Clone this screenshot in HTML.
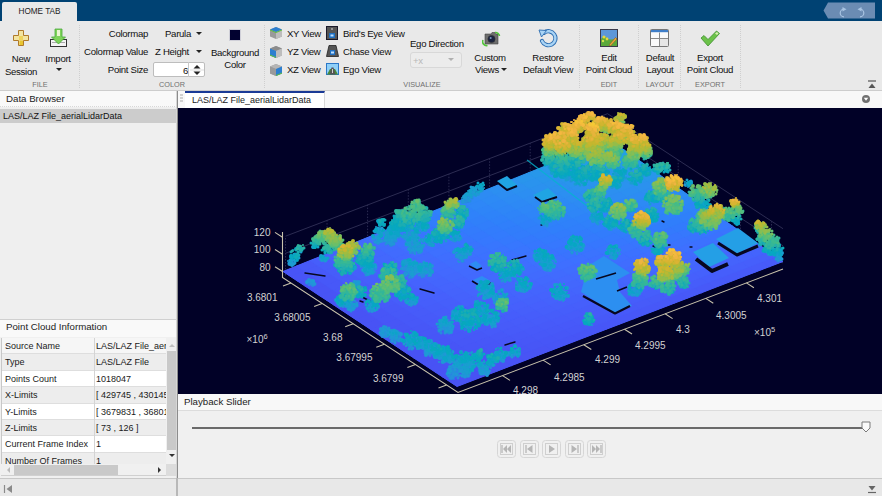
<!DOCTYPE html>
<html><head><meta charset="utf-8">
<style>
*{margin:0;padding:0;box-sizing:border-box}
html,body{width:882px;height:496px;overflow:hidden;background:#f0f0f0;font-family:"Liberation Sans",sans-serif;color:#1a1a1a}
.a{position:absolute}
#top{left:0;top:0;width:882px;height:21px;background:#004273}
#tab{left:2px;top:2px;width:75px;height:20px;background:#e9e9e9;border-radius:2px 2px 0 0;font-size:8.2px;text-align:center;line-height:19px;color:#222}
#ribbon{left:0;top:21px;width:882px;height:70px;background:#e9e9e9;border-bottom:1px solid #cdcdcd}
.t{position:absolute;font-size:9.6px;line-height:11px;color:#101010;white-space:nowrap;letter-spacing:-0.3px}
.c{text-align:center}
.r{text-align:right}
.g{position:absolute;font-size:7.3px;line-height:9px;color:#707070;white-space:nowrap;text-align:center}
.sep{position:absolute;top:25px;width:1px;height:63px;border-left:1px dotted #cfcfcf}
.caret{position:absolute;width:0;height:0;border-left:3px solid transparent;border-right:3px solid transparent;border-top:3.5px solid #222}
#left{left:0;top:91px;width:177px;height:389px;background:#fff}
#plot{left:178px;top:107px;width:704px;height:287px;background:#02021f}
#status{left:0;top:480px;width:882px;height:16px;background:#e6e6e6;border-top:1px solid #cfcfcf}
.p{position:absolute;font-size:9.7px;line-height:12px;color:#222;white-space:nowrap}
.q{position:absolute;font-size:9px;line-height:12px;color:#1a1a1a;white-space:nowrap}
.row{position:absolute;left:0;width:165px;height:16.4px;border-bottom:1px solid #dedede}
.row .k{left:3px;top:2px}.row .v{left:94px;top:2px}
</style></head><body>
<div id="top" class="a"></div>
<div id="tab" class="a">HOME TAB</div>
<div id="ribbon" class="a"></div>
<!-- quick access -->
<svg class="a" style="left:823px;top:2px" width="52" height="17" viewBox="0 0 52 17">
 <path d="M5 0.5H52V16.5H5L0.5 8.5Z" fill="#6b8cb3"/>
 <path d="M21 7.2A3.8 3.8 0 1 0 21 14.8" fill="none" stroke="#a8c4e2" stroke-width="1.2"/>
 <path d="M19.5 5L23.5 7.2L19.5 9.4Z" fill="#a8c4e2"/>
 <path d="M37 7.2A3.8 3.8 0 1 1 37 14.8" fill="none" stroke="#a8c4e2" stroke-width="1.2"/>
 <path d="M38.5 5L34.5 7.2L38.5 9.4Z" fill="#a8c4e2"/>
</svg>


<!-- LEFT PANEL -->
<div class="a" style="left:0;top:91px;width:177px;height:229px;background:#efefef;border-right:1px solid #c4c4c4"></div>
<div class="a" style="left:0;top:91px;width:177px;height:16px;background:#f9f9f9;border-bottom:1px dotted #d8d8d8"></div>
<div class="p" style="left:6px;top:93px">Data Browser</div>
<div class="a" style="left:0;top:109px;width:176px;height:14px;background:#cccccc"></div>
<div class="q" style="left:3px;top:110px;color:#111">LAS/LAZ File_aerialLidarData</div>
<div class="a" style="left:0;top:319px;width:177px;height:1px;background:#d0d0d0"></div>
<div class="a" style="left:0;top:320px;width:177px;height:17px;background:#f9f9f9"></div>
<div class="p" style="left:6px;top:321px">Point Cloud Information</div>
<div class="a" style="left:0;top:337px;width:177px;height:143px;background:#f0f0f0"></div>
<div class="a" style="left:1px;top:338px;width:166px;height:126px;background:#fff;border-left:1px solid #c8c8c8;overflow:hidden">
 <div class="row" style="top:0;background:#f6f6f6"><span class="q k">Source Name</span><span class="q v">LAS/LAZ File_aerialLidarData</span></div>
 <div class="row" style="top:16.4px;background:#ededed"><span class="q k">Type</span><span class="q v">LAS/LAZ File</span></div>
 <div class="row" style="top:32.8px;background:#fff"><span class="q k">Points Count</span><span class="q v">1018047</span></div>
 <div class="row" style="top:49.2px;background:#ededed"><span class="q k">X-Limits</span><span class="q v">[ 429745 , 430145 ]</span></div>
 <div class="row" style="top:65.6px;background:#fff"><span class="q k">Y-Limits</span><span class="q v">[ 3679831 , 3680157 ]</span></div>
 <div class="row" style="top:82px;background:#ededed"><span class="q k">Z-Limits</span><span class="q v">[ 73 , 126 ]</span></div>
 <div class="row" style="top:98.4px;background:#fff"><span class="q k">Current Frame Index</span><span class="q v">1</span></div>
 <div class="row" style="top:114.8px;background:#ededed"><span class="q k">Number Of Frames</span><span class="q v">1</span></div>
 <div class="a" style="left:91.5px;top:0;width:1px;height:126px;background:#d4d4d4"></div>
</div>
<!-- v scrollbar -->
<div class="a" style="left:166px;top:338px;width:11px;height:126px;background:#f0f0f0"></div>
<div class="a" style="left:167px;top:351px;width:9px;height:99px;background:#c9c9c9"></div>
<svg class="a" style="left:168px;top:342px" width="8" height="6"><path d="M1 5L4 2L7 5Z" fill="#c0c0c0"/></svg>
<svg class="a" style="left:168px;top:453px" width="8" height="6"><path d="M1 1L4 4L7 1Z" fill="#333"/></svg>
<!-- h scrollbar -->
<div class="a" style="left:1px;top:464px;width:166px;height:12px;background:#f0f0f0;border-bottom:1px solid #d0d0d0"></div>
<div class="a" style="left:14px;top:465px;width:104px;height:10px;background:#c9c9c9"></div>
<svg class="a" style="left:5px;top:466px" width="6" height="8"><path d="M5 1L2 4L5 7Z" fill="#bbb"/></svg>
<svg class="a" style="left:157px;top:466px" width="6" height="8"><path d="M1 1L4 4L1 7Z" fill="#333"/></svg>
<div class="a" style="left:166px;top:464px;width:11px;height:12px;background:#dcdcdc"></div>
<div class="a" style="left:176px;top:91px;width:1px;height:405px;background:#d6d6d6"></div><div class="a" style="left:177px;top:91px;width:1px;height:405px;background:#8c8c8c"></div>

<!-- PLOT TAB STRIP -->
<div class="a" style="left:178px;top:91px;width:704px;height:17px;background:#f8f8f8"></div>
<svg class="a" style="left:180px;top:94px" width="4" height="9"><path d="M0 1H3M0 4H3M0 7H3" stroke="#aaa" stroke-width="1"/></svg>
<div class="a" style="left:185px;top:91px;width:140px;height:17px;background:#fff;border-top:2px solid #1a3a96;border-right:1px solid #d8d8d8"></div>
<div class="q" style="left:192px;top:94px;color:#1a1a1a">LAS/LAZ File_aerialLidarData</div>
<svg class="a" style="left:861px;top:94px" width="10" height="10"><circle cx="5" cy="5" r="4" fill="#707070"/><path d="M2.8 3.8H7.2L5 6.8Z" fill="#fff"/></svg>

<!-- PLOT -->
<div id="plot" class="a" style="left:178px;top:108px;width:704px;height:286px;background:#010127;overflow:hidden">
<svg width="704" height="286" viewBox="178 108 704 286" style="position:absolute;left:0;top:0;font-family:'Liberation Sans',sans-serif">
<path d="M285.5 270.5L607.5 148.0" stroke="#2c2c52" stroke-width="1"/>
<path d="M607.5 148.0L783.0 263.0" stroke="#2c2c52" stroke-width="1"/>
<path d="M285.5 253.3L607.5 130.8" stroke="#2c2c52" stroke-width="1"/>
<path d="M607.5 130.8L783.0 245.8" stroke="#2c2c52" stroke-width="1"/>
<path d="M285.5 236.2L607.5 113.7" stroke="#2c2c52" stroke-width="1"/>
<path d="M607.5 113.7L783.0 228.7" stroke="#2c2c52" stroke-width="1"/>
<path d="M327.0 260.6V220.2" stroke="#2c2c52" stroke-width="1" stroke-dasharray="1.5 1.5"/>
<path d="M367.6 245.1V204.8" stroke="#2c2c52" stroke-width="1" stroke-dasharray="1.5 1.5"/>
<path d="M408.3 229.7V189.3" stroke="#2c2c52" stroke-width="1" stroke-dasharray="1.5 1.5"/>
<path d="M448.9 214.2V173.9" stroke="#2c2c52" stroke-width="1" stroke-dasharray="1.5 1.5"/>
<path d="M489.6 198.8V158.5" stroke="#2c2c52" stroke-width="1" stroke-dasharray="1.5 1.5"/>
<path d="M530.2 183.4V143.0" stroke="#2c2c52" stroke-width="1" stroke-dasharray="1.5 1.5"/>
<path d="M570.9 167.9V127.6" stroke="#2c2c52" stroke-width="1" stroke-dasharray="1.5 1.5"/>
<path d="M616.0 159.6V119.2" stroke="#2c2c52" stroke-width="1" stroke-dasharray="1.5 1.5"/>
<path d="M647.1 179.9V139.6" stroke="#2c2c52" stroke-width="1" stroke-dasharray="1.5 1.5"/>
<path d="M678.2 200.3V160.0" stroke="#2c2c52" stroke-width="1" stroke-dasharray="1.5 1.5"/>
<path d="M709.3 220.7V180.4" stroke="#2c2c52" stroke-width="1" stroke-dasharray="1.5 1.5"/>
<path d="M740.4 241.1V200.7" stroke="#2c2c52" stroke-width="1" stroke-dasharray="1.5 1.5"/>
<path d="M771.5 261.5V221.1" stroke="#2c2c52" stroke-width="1" stroke-dasharray="1.5 1.5"/>
<path d="M285.5 275.5V237.2" stroke="#2c2c52" stroke-width="1" stroke-dasharray="1.5 1.5"/>
<polygon points="283.0,271.5 457.0,386.5 783.0,261.5 610.0,140.0" fill="#4367fd" />
<g><polygon points="457.0,386.5 449.8,381.7 463.3,376.5 470.6,381.3" fill="#4852f4" stroke="#4852f4" stroke-width="1"/><polygon points="470.6,381.3 463.3,376.5 476.9,371.3 484.2,376.1" fill="#4852f4" stroke="#4852f4" stroke-width="1"/><polygon points="484.2,376.1 476.9,371.3 490.5,366.0 497.8,370.9" fill="#4852f4" stroke="#4852f4" stroke-width="1"/><polygon points="497.8,370.9 490.5,366.0 504.1,360.8 511.3,365.7" fill="#4853f5" stroke="#4853f5" stroke-width="1"/><polygon points="511.3,365.7 504.1,360.8 517.7,355.6 524.9,360.5" fill="#4853f5" stroke="#4853f5" stroke-width="1"/><polygon points="524.9,360.5 517.7,355.6 531.3,350.4 538.5,355.2" fill="#4854f5" stroke="#4854f5" stroke-width="1"/><polygon points="538.5,355.2 531.3,350.4 544.8,345.2 552.1,350.0" fill="#4854f5" stroke="#4854f5" stroke-width="1"/><polygon points="552.1,350.0 544.8,345.2 558.4,340.0 565.7,344.8" fill="#4755f6" stroke="#4755f6" stroke-width="1"/><polygon points="565.7,344.8 558.4,340.0 572.0,334.7 579.2,339.6" fill="#4755f6" stroke="#4755f6" stroke-width="1"/><polygon points="579.2,339.6 572.0,334.7 585.6,329.5 592.8,334.4" fill="#4755f6" stroke="#4755f6" stroke-width="1"/><polygon points="592.8,334.4 585.6,329.5 599.2,324.3 606.4,329.2" fill="#4756f7" stroke="#4756f7" stroke-width="1"/><polygon points="606.4,329.2 599.2,324.3 612.8,319.1 620.0,324.0" fill="#4756f7" stroke="#4756f7" stroke-width="1"/><polygon points="620.0,324.0 612.8,319.1 626.4,313.9 633.6,318.8" fill="#4757f7" stroke="#4757f7" stroke-width="1"/><polygon points="633.6,318.8 626.4,313.9 639.9,308.6 647.2,313.6" fill="#4757f7" stroke="#4757f7" stroke-width="1"/><polygon points="647.2,313.6 639.9,308.6 653.5,303.4 660.8,308.4" fill="#4758f8" stroke="#4758f8" stroke-width="1"/><polygon points="660.8,308.4 653.5,303.4 667.1,298.2 674.3,303.2" fill="#4758f8" stroke="#4758f8" stroke-width="1"/><polygon points="674.3,303.2 667.1,298.2 680.7,293.0 687.9,298.0" fill="#4758f8" stroke="#4758f8" stroke-width="1"/><polygon points="687.9,298.0 680.7,293.0 694.3,287.8 701.5,292.8" fill="#4759f8" stroke="#4759f8" stroke-width="1"/><polygon points="701.5,292.8 694.3,287.8 707.9,282.5 715.1,287.5" fill="#4759f8" stroke="#4759f8" stroke-width="1"/><polygon points="715.1,287.5 707.9,282.5 721.5,277.3 728.7,282.3" fill="#475af9" stroke="#475af9" stroke-width="1"/><polygon points="728.7,282.3 721.5,277.3 735.0,272.1 742.2,277.1" fill="#475af9" stroke="#475af9" stroke-width="1"/><polygon points="742.2,277.1 735.0,272.1 748.6,266.9 755.8,271.9" fill="#475af9" stroke="#475af9" stroke-width="1"/><polygon points="755.8,271.9 748.6,266.9 762.2,261.7 769.4,266.7" fill="#475bf9" stroke="#475bf9" stroke-width="1"/><polygon points="769.4,266.7 762.2,261.7 775.8,256.4 783.0,261.5" fill="#475bf9" stroke="#475bf9" stroke-width="1"/><polygon points="449.8,381.7 442.5,376.9 456.1,371.7 463.3,376.5" fill="#4852f4" stroke="#4852f4" stroke-width="1"/><polygon points="463.3,376.5 456.1,371.7 469.7,366.5 476.9,371.3" fill="#4852f4" stroke="#4852f4" stroke-width="1"/><polygon points="476.9,371.3 469.7,366.5 483.3,361.2 490.5,366.0" fill="#4853f5" stroke="#4853f5" stroke-width="1"/><polygon points="490.5,366.0 483.3,361.2 496.8,356.0 504.1,360.8" fill="#4854f5" stroke="#4854f5" stroke-width="1"/><polygon points="504.1,360.8 496.8,356.0 510.4,350.8 517.7,355.6" fill="#4854f6" stroke="#4854f6" stroke-width="1"/><polygon points="517.7,355.6 510.4,350.8 524.0,345.5 531.3,350.4" fill="#4755f6" stroke="#4755f6" stroke-width="1"/><polygon points="531.3,350.4 524.0,345.5 537.6,340.3 544.8,345.2" fill="#4756f6" stroke="#4756f6" stroke-width="1"/><polygon points="544.8,345.2 537.6,340.3 551.2,335.1 558.4,340.0" fill="#4756f7" stroke="#4756f7" stroke-width="1"/><polygon points="558.4,340.0 551.2,335.1 564.8,329.8 572.0,334.7" fill="#4757f7" stroke="#4757f7" stroke-width="1"/><polygon points="572.0,334.7 564.8,329.8 578.4,324.6 585.6,329.5" fill="#4758f8" stroke="#4758f8" stroke-width="1"/><polygon points="585.6,329.5 578.4,324.6 592.0,319.4 599.2,324.3" fill="#4758f8" stroke="#4758f8" stroke-width="1"/><polygon points="599.2,324.3 592.0,319.4 605.5,314.1 612.8,319.1" fill="#4759f8" stroke="#4759f8" stroke-width="1"/><polygon points="612.8,319.1 605.5,314.1 619.1,308.9 626.4,313.9" fill="#4759f9" stroke="#4759f9" stroke-width="1"/><polygon points="626.4,313.9 619.1,308.9 632.7,303.7 639.9,308.6" fill="#475af9" stroke="#475af9" stroke-width="1"/><polygon points="639.9,308.6 632.7,303.7 646.3,298.5 653.5,303.4" fill="#475bf9" stroke="#475bf9" stroke-width="1"/><polygon points="653.5,303.4 646.3,298.5 659.9,293.2 667.1,298.2" fill="#475bf9" stroke="#475bf9" stroke-width="1"/><polygon points="667.1,298.2 659.9,293.2 673.5,288.0 680.7,293.0" fill="#475cfa" stroke="#475cfa" stroke-width="1"/><polygon points="680.7,293.0 673.5,288.0 687.1,282.8 694.3,287.8" fill="#475cfa" stroke="#475cfa" stroke-width="1"/><polygon points="694.3,287.8 687.1,282.8 700.6,277.5 707.9,282.5" fill="#465dfa" stroke="#465dfa" stroke-width="1"/><polygon points="707.9,282.5 700.6,277.5 714.2,272.3 721.5,277.3" fill="#465dfb" stroke="#465dfb" stroke-width="1"/><polygon points="721.5,277.3 714.2,272.3 727.8,267.1 735.0,272.1" fill="#465efb" stroke="#465efb" stroke-width="1"/><polygon points="735.0,272.1 727.8,267.1 741.4,261.8 748.6,266.9" fill="#465ffb" stroke="#465ffb" stroke-width="1"/><polygon points="748.6,266.9 741.4,261.8 755.0,256.6 762.2,261.7" fill="#465ffb" stroke="#465ffb" stroke-width="1"/><polygon points="762.2,261.7 755.0,256.6 768.6,251.4 775.8,256.4" fill="#4660fb" stroke="#4660fb" stroke-width="1"/><polygon points="442.5,376.9 435.2,372.1 448.8,366.9 456.1,371.7" fill="#4852f4" stroke="#4852f4" stroke-width="1"/><polygon points="456.1,371.7 448.8,366.9 462.4,361.6 469.7,366.5" fill="#4853f5" stroke="#4853f5" stroke-width="1"/><polygon points="469.7,366.5 462.4,361.6 476.0,356.4 483.3,361.2" fill="#4854f5" stroke="#4854f5" stroke-width="1"/><polygon points="483.3,361.2 476.0,356.4 489.6,351.2 496.8,356.0" fill="#4755f6" stroke="#4755f6" stroke-width="1"/><polygon points="496.8,356.0 489.6,351.2 503.2,345.9 510.4,350.8" fill="#4755f6" stroke="#4755f6" stroke-width="1"/><polygon points="510.4,350.8 503.2,345.9 516.8,340.7 524.0,345.5" fill="#4756f7" stroke="#4756f7" stroke-width="1"/><polygon points="524.0,345.5 516.8,340.7 530.4,335.4 537.6,340.3" fill="#4757f7" stroke="#4757f7" stroke-width="1"/><polygon points="537.6,340.3 530.4,335.4 544.0,330.2 551.2,335.1" fill="#4758f8" stroke="#4758f8" stroke-width="1"/><polygon points="551.2,335.1 544.0,330.2 557.5,324.9 564.8,329.8" fill="#4759f8" stroke="#4759f8" stroke-width="1"/><polygon points="564.8,329.8 557.5,324.9 571.1,319.7 578.4,324.6" fill="#4759f9" stroke="#4759f9" stroke-width="1"/><polygon points="578.4,324.6 571.1,319.7 584.7,314.5 592.0,319.4" fill="#475af9" stroke="#475af9" stroke-width="1"/><polygon points="592.0,319.4 584.7,314.5 598.3,309.2 605.5,314.1" fill="#475bf9" stroke="#475bf9" stroke-width="1"/><polygon points="605.5,314.1 598.3,309.2 611.9,304.0 619.1,308.9" fill="#475cfa" stroke="#475cfa" stroke-width="1"/><polygon points="619.1,308.9 611.9,304.0 625.5,298.7 632.7,303.7" fill="#475dfa" stroke="#475dfa" stroke-width="1"/><polygon points="632.7,303.7 625.5,298.7 639.1,293.5 646.3,298.5" fill="#465dfb" stroke="#465dfb" stroke-width="1"/><polygon points="646.3,298.5 639.1,293.5 652.7,288.3 659.9,293.2" fill="#465efb" stroke="#465efb" stroke-width="1"/><polygon points="659.9,293.2 652.7,288.3 666.3,283.0 673.5,288.0" fill="#465ffb" stroke="#465ffb" stroke-width="1"/><polygon points="673.5,288.0 666.3,283.0 679.8,277.8 687.1,282.8" fill="#4660fb" stroke="#4660fb" stroke-width="1"/><polygon points="687.1,282.8 679.8,277.8 693.4,272.5 700.6,277.5" fill="#4660fc" stroke="#4660fc" stroke-width="1"/><polygon points="700.6,277.5 693.4,272.5 707.0,267.3 714.2,272.3" fill="#4561fc" stroke="#4561fc" stroke-width="1"/><polygon points="714.2,272.3 707.0,267.3 720.6,262.0 727.8,267.1" fill="#4562fc" stroke="#4562fc" stroke-width="1"/><polygon points="727.8,267.1 720.6,262.0 734.2,256.8 741.4,261.8" fill="#4563fc" stroke="#4563fc" stroke-width="1"/><polygon points="741.4,261.8 734.2,256.8 747.8,251.6 755.0,256.6" fill="#4563fd" stroke="#4563fd" stroke-width="1"/><polygon points="755.0,256.6 747.8,251.6 761.4,246.3 768.6,251.4" fill="#4464fd" stroke="#4464fd" stroke-width="1"/><polygon points="435.2,372.1 428.0,367.3 441.6,362.1 448.8,366.9" fill="#4852f4" stroke="#4852f4" stroke-width="1"/><polygon points="448.8,366.9 441.6,362.1 455.2,356.8 462.4,361.6" fill="#4853f5" stroke="#4853f5" stroke-width="1"/><polygon points="462.4,361.6 455.2,356.8 468.8,351.6 476.0,356.4" fill="#4854f6" stroke="#4854f6" stroke-width="1"/><polygon points="476.0,356.4 468.8,351.6 482.4,346.3 489.6,351.2" fill="#4755f6" stroke="#4755f6" stroke-width="1"/><polygon points="489.6,351.2 482.4,346.3 496.0,341.1 503.2,345.9" fill="#4756f7" stroke="#4756f7" stroke-width="1"/><polygon points="503.2,345.9 496.0,341.1 509.5,335.8 516.8,340.7" fill="#4757f7" stroke="#4757f7" stroke-width="1"/><polygon points="516.8,340.7 509.5,335.8 523.1,330.6 530.4,335.4" fill="#4758f8" stroke="#4758f8" stroke-width="1"/><polygon points="530.4,335.4 523.1,330.6 536.7,325.3 544.0,330.2" fill="#4759f9" stroke="#4759f9" stroke-width="1"/><polygon points="544.0,330.2 536.7,325.3 550.3,320.1 557.5,324.9" fill="#475af9" stroke="#475af9" stroke-width="1"/><polygon points="557.5,324.9 550.3,320.1 563.9,314.8 571.1,319.7" fill="#475bfa" stroke="#475bfa" stroke-width="1"/><polygon points="571.1,319.7 563.9,314.8 577.5,309.5 584.7,314.5" fill="#475cfa" stroke="#475cfa" stroke-width="1"/><polygon points="584.7,314.5 577.5,309.5 591.1,304.3 598.3,309.2" fill="#465dfa" stroke="#465dfa" stroke-width="1"/><polygon points="598.3,309.2 591.1,304.3 604.7,299.0 611.9,304.0" fill="#465efb" stroke="#465efb" stroke-width="1"/><polygon points="611.9,304.0 604.7,299.0 618.3,293.8 625.5,298.7" fill="#465ffb" stroke="#465ffb" stroke-width="1"/><polygon points="625.5,298.7 618.3,293.8 631.9,288.5 639.1,293.5" fill="#4660fb" stroke="#4660fb" stroke-width="1"/><polygon points="639.1,293.5 631.9,288.5 645.4,283.3 652.7,288.3" fill="#4561fc" stroke="#4561fc" stroke-width="1"/><polygon points="652.7,288.3 645.4,283.3 659.0,278.0 666.3,283.0" fill="#4562fc" stroke="#4562fc" stroke-width="1"/><polygon points="666.3,283.0 659.0,278.0 672.6,272.8 679.8,277.8" fill="#4563fc" stroke="#4563fc" stroke-width="1"/><polygon points="679.8,277.8 672.6,272.8 686.2,267.5 693.4,272.5" fill="#4564fd" stroke="#4564fd" stroke-width="1"/><polygon points="693.4,272.5 686.2,267.5 699.8,262.3 707.0,267.3" fill="#4464fd" stroke="#4464fd" stroke-width="1"/><polygon points="707.0,267.3 699.8,262.3 713.4,257.0 720.6,262.0" fill="#4465fd" stroke="#4465fd" stroke-width="1"/><polygon points="720.6,262.0 713.4,257.0 727.0,251.8 734.2,256.8" fill="#4466fd" stroke="#4466fd" stroke-width="1"/><polygon points="734.2,256.8 727.0,251.8 740.6,246.5 747.8,251.6" fill="#4367fd" stroke="#4367fd" stroke-width="1"/><polygon points="747.8,251.6 740.6,246.5 754.2,241.3 761.4,246.3" fill="#4368fe" stroke="#4368fe" stroke-width="1"/><polygon points="428.0,367.3 420.7,362.5 434.3,357.3 441.6,362.1" fill="#4852f4" stroke="#4852f4" stroke-width="1"/><polygon points="441.6,362.1 434.3,357.3 447.9,352.0 455.2,356.8" fill="#4854f5" stroke="#4854f5" stroke-width="1"/><polygon points="455.2,356.8 447.9,352.0 461.5,346.7 468.8,351.6" fill="#4755f6" stroke="#4755f6" stroke-width="1"/><polygon points="468.8,351.6 461.5,346.7 475.1,341.5 482.4,346.3" fill="#4756f7" stroke="#4756f7" stroke-width="1"/><polygon points="482.4,346.3 475.1,341.5 488.7,336.2 496.0,341.1" fill="#4757f7" stroke="#4757f7" stroke-width="1"/><polygon points="496.0,341.1 488.7,336.2 502.3,331.0 509.5,335.8" fill="#4758f8" stroke="#4758f8" stroke-width="1"/><polygon points="509.5,335.8 502.3,331.0 515.9,325.7 523.1,330.6" fill="#475af9" stroke="#475af9" stroke-width="1"/><polygon points="523.1,330.6 515.9,325.7 529.5,320.4 536.7,325.3" fill="#475bf9" stroke="#475bf9" stroke-width="1"/><polygon points="536.7,325.3 529.5,320.4 543.1,315.2 550.3,320.1" fill="#475cfa" stroke="#475cfa" stroke-width="1"/><polygon points="550.3,320.1 543.1,315.2 556.7,309.9 563.9,314.8" fill="#465dfa" stroke="#465dfa" stroke-width="1"/><polygon points="563.9,314.8 556.7,309.9 570.3,304.6 577.5,309.5" fill="#465efb" stroke="#465efb" stroke-width="1"/><polygon points="577.5,309.5 570.3,304.6 583.9,299.4 591.1,304.3" fill="#465ffb" stroke="#465ffb" stroke-width="1"/><polygon points="591.1,304.3 583.9,299.4 597.4,294.1 604.7,299.0" fill="#4660fc" stroke="#4660fc" stroke-width="1"/><polygon points="604.7,299.0 597.4,294.1 611.0,288.8 618.3,293.8" fill="#4561fc" stroke="#4561fc" stroke-width="1"/><polygon points="618.3,293.8 611.0,288.8 624.6,283.6 631.9,288.5" fill="#4562fc" stroke="#4562fc" stroke-width="1"/><polygon points="631.9,288.5 624.6,283.6 638.2,278.3 645.4,283.3" fill="#4563fd" stroke="#4563fd" stroke-width="1"/><polygon points="645.4,283.3 638.2,278.3 651.8,273.0 659.0,278.0" fill="#4465fd" stroke="#4465fd" stroke-width="1"/><polygon points="659.0,278.0 651.8,273.0 665.4,267.8 672.6,272.8" fill="#4466fd" stroke="#4466fd" stroke-width="1"/><polygon points="672.6,272.8 665.4,267.8 679.0,262.5 686.2,267.5" fill="#4367fd" stroke="#4367fd" stroke-width="1"/><polygon points="686.2,267.5 679.0,262.5 692.6,257.2 699.8,262.3" fill="#4368fe" stroke="#4368fe" stroke-width="1"/><polygon points="699.8,262.3 692.6,257.2 706.2,252.0 713.4,257.0" fill="#4269fe" stroke="#4269fe" stroke-width="1"/><polygon points="713.4,257.0 706.2,252.0 719.8,246.7 727.0,251.8" fill="#426afe" stroke="#426afe" stroke-width="1"/><polygon points="727.0,251.8 719.8,246.7 733.4,241.5 740.6,246.5" fill="#416bfe" stroke="#416bfe" stroke-width="1"/><polygon points="740.6,246.5 733.4,241.5 747.0,236.2 754.2,241.3" fill="#406cfe" stroke="#406cfe" stroke-width="1"/><polygon points="420.7,362.5 413.5,357.8 427.1,352.5 434.3,357.3" fill="#4852f4" stroke="#4852f4" stroke-width="1"/><polygon points="434.3,357.3 427.1,352.5 440.7,347.2 447.9,352.0" fill="#4854f5" stroke="#4854f5" stroke-width="1"/><polygon points="447.9,352.0 440.7,347.2 454.3,341.9 461.5,346.7" fill="#4755f6" stroke="#4755f6" stroke-width="1"/><polygon points="461.5,346.7 454.3,341.9 467.9,336.6 475.1,341.5" fill="#4757f7" stroke="#4757f7" stroke-width="1"/><polygon points="475.1,341.5 467.9,336.6 481.5,331.4 488.7,336.2" fill="#4758f8" stroke="#4758f8" stroke-width="1"/><polygon points="488.7,336.2 481.5,331.4 495.1,326.1 502.3,331.0" fill="#475af9" stroke="#475af9" stroke-width="1"/><polygon points="502.3,331.0 495.1,326.1 508.7,320.8 515.9,325.7" fill="#475bf9" stroke="#475bf9" stroke-width="1"/><polygon points="515.9,325.7 508.7,320.8 522.2,315.5 529.5,320.4" fill="#475cfa" stroke="#475cfa" stroke-width="1"/><polygon points="529.5,320.4 522.2,315.5 535.8,310.3 543.1,315.2" fill="#465dfb" stroke="#465dfb" stroke-width="1"/><polygon points="543.1,315.2 535.8,310.3 549.4,305.0 556.7,309.9" fill="#465ffb" stroke="#465ffb" stroke-width="1"/><polygon points="556.7,309.9 549.4,305.0 563.0,299.7 570.3,304.6" fill="#4660fb" stroke="#4660fb" stroke-width="1"/><polygon points="570.3,304.6 563.0,299.7 576.6,294.4 583.9,299.4" fill="#4561fc" stroke="#4561fc" stroke-width="1"/><polygon points="583.9,299.4 576.6,294.4 590.2,289.2 597.4,294.1" fill="#4562fc" stroke="#4562fc" stroke-width="1"/><polygon points="597.4,294.1 590.2,289.2 603.8,283.9 611.0,288.8" fill="#4564fd" stroke="#4564fd" stroke-width="1"/><polygon points="611.0,288.8 603.8,283.9 617.4,278.6 624.6,283.6" fill="#4465fd" stroke="#4465fd" stroke-width="1"/><polygon points="624.6,283.6 617.4,278.6 631.0,273.3 638.2,278.3" fill="#4466fd" stroke="#4466fd" stroke-width="1"/><polygon points="638.2,278.3 631.0,273.3 644.6,268.1 651.8,273.0" fill="#4367fd" stroke="#4367fd" stroke-width="1"/><polygon points="651.8,273.0 644.6,268.1 658.2,262.8 665.4,267.8" fill="#4369fe" stroke="#4369fe" stroke-width="1"/><polygon points="665.4,267.8 658.2,262.8 671.8,257.5 679.0,262.5" fill="#426afe" stroke="#426afe" stroke-width="1"/><polygon points="679.0,262.5 671.8,257.5 685.4,252.2 692.6,257.2" fill="#416bfe" stroke="#416bfe" stroke-width="1"/><polygon points="692.6,257.2 685.4,252.2 699.0,247.0 706.2,252.0" fill="#406cfe" stroke="#406cfe" stroke-width="1"/><polygon points="706.2,252.0 699.0,247.0 712.6,241.7 719.8,246.7" fill="#3f6dfe" stroke="#3f6dfe" stroke-width="1"/><polygon points="719.8,246.7 712.6,241.7 726.2,236.4 733.4,241.5" fill="#3f6fff" stroke="#3f6fff" stroke-width="1"/><polygon points="733.4,241.5 726.2,236.4 739.8,231.1 747.0,236.2" fill="#3d70ff" stroke="#3d70ff" stroke-width="1"/><polygon points="413.5,357.8 406.2,353.0 419.8,347.7 427.1,352.5" fill="#4852f4" stroke="#4852f4" stroke-width="1"/><polygon points="427.1,352.5 419.8,347.7 433.4,342.4 440.7,347.2" fill="#4854f5" stroke="#4854f5" stroke-width="1"/><polygon points="440.7,347.2 433.4,342.4 447.0,337.1 454.3,341.9" fill="#4756f7" stroke="#4756f7" stroke-width="1"/><polygon points="454.3,341.9 447.0,337.1 460.6,331.8 467.9,336.6" fill="#4758f8" stroke="#4758f8" stroke-width="1"/><polygon points="467.9,336.6 460.6,331.8 474.2,326.5 481.5,331.4" fill="#4759f8" stroke="#4759f8" stroke-width="1"/><polygon points="481.5,331.4 474.2,326.5 487.8,321.2 495.1,326.1" fill="#475bf9" stroke="#475bf9" stroke-width="1"/><polygon points="495.1,326.1 487.8,321.2 501.4,315.9 508.7,320.8" fill="#475cfa" stroke="#475cfa" stroke-width="1"/><polygon points="508.7,320.8 501.4,315.9 515.0,310.7 522.2,315.5" fill="#465dfb" stroke="#465dfb" stroke-width="1"/><polygon points="522.2,315.5 515.0,310.7 528.6,305.4 535.8,310.3" fill="#465ffb" stroke="#465ffb" stroke-width="1"/><polygon points="535.8,310.3 528.6,305.4 542.2,300.1 549.4,305.0" fill="#4660fc" stroke="#4660fc" stroke-width="1"/><polygon points="549.4,305.0 542.2,300.1 555.8,294.8 563.0,299.7" fill="#4562fc" stroke="#4562fc" stroke-width="1"/><polygon points="563.0,299.7 555.8,294.8 569.4,289.5 576.6,294.4" fill="#4563fd" stroke="#4563fd" stroke-width="1"/><polygon points="576.6,294.4 569.4,289.5 583.0,284.2 590.2,289.2" fill="#4465fd" stroke="#4465fd" stroke-width="1"/><polygon points="590.2,289.2 583.0,284.2 596.6,278.9 603.8,283.9" fill="#4466fd" stroke="#4466fd" stroke-width="1"/><polygon points="603.8,283.9 596.6,278.9 610.2,273.6 617.4,278.6" fill="#4367fd" stroke="#4367fd" stroke-width="1"/><polygon points="617.4,278.6 610.2,273.6 623.8,268.4 631.0,273.3" fill="#4369fe" stroke="#4369fe" stroke-width="1"/><polygon points="631.0,273.3 623.8,268.4 637.4,263.1 644.6,268.1" fill="#426afe" stroke="#426afe" stroke-width="1"/><polygon points="644.6,268.1 637.4,263.1 651.0,257.8 658.2,262.8" fill="#416bfe" stroke="#416bfe" stroke-width="1"/><polygon points="658.2,262.8 651.0,257.8 664.6,252.5 671.8,257.5" fill="#406dfe" stroke="#406dfe" stroke-width="1"/><polygon points="671.8,257.5 664.6,252.5 678.2,247.2 685.4,252.2" fill="#3f6eff" stroke="#3f6eff" stroke-width="1"/><polygon points="685.4,252.2 678.2,247.2 691.8,241.9 699.0,247.0" fill="#3e70ff" stroke="#3e70ff" stroke-width="1"/><polygon points="699.0,247.0 691.8,241.9 705.4,236.6 712.6,241.7" fill="#3c71ff" stroke="#3c71ff" stroke-width="1"/><polygon points="712.6,241.7 705.4,236.6 718.9,231.3 726.2,236.4" fill="#3b72fe" stroke="#3b72fe" stroke-width="1"/><polygon points="726.2,236.4 718.9,231.3 732.5,226.1 739.8,231.1" fill="#3a74fe" stroke="#3a74fe" stroke-width="1"/><polygon points="406.2,353.0 399.0,348.2 412.6,342.9 419.8,347.7" fill="#4853f4" stroke="#4853f4" stroke-width="1"/><polygon points="419.8,347.7 412.6,342.9 426.2,337.6 433.4,342.4" fill="#4755f6" stroke="#4755f6" stroke-width="1"/><polygon points="433.4,342.4 426.2,337.6 439.8,332.3 447.0,337.1" fill="#4756f7" stroke="#4756f7" stroke-width="1"/><polygon points="447.0,337.1 439.8,332.3 453.4,327.0 460.6,331.8" fill="#4758f8" stroke="#4758f8" stroke-width="1"/><polygon points="460.6,331.8 453.4,327.0 467.0,321.7 474.2,326.5" fill="#475af9" stroke="#475af9" stroke-width="1"/><polygon points="474.2,326.5 467.0,321.7 480.6,316.4 487.8,321.2" fill="#475cfa" stroke="#475cfa" stroke-width="1"/><polygon points="487.8,321.2 480.6,316.4 494.2,311.1 501.4,315.9" fill="#465dfa" stroke="#465dfa" stroke-width="1"/><polygon points="501.4,315.9 494.2,311.1 507.8,305.8 515.0,310.7" fill="#465ffb" stroke="#465ffb" stroke-width="1"/><polygon points="515.0,310.7 507.8,305.8 521.4,300.5 528.6,305.4" fill="#4660fc" stroke="#4660fc" stroke-width="1"/><polygon points="528.6,305.4 521.4,300.5 535.0,295.2 542.2,300.1" fill="#4562fc" stroke="#4562fc" stroke-width="1"/><polygon points="542.2,300.1 535.0,295.2 548.6,289.9 555.8,294.8" fill="#4563fd" stroke="#4563fd" stroke-width="1"/><polygon points="555.8,294.8 548.6,289.9 562.2,284.6 569.4,289.5" fill="#4465fd" stroke="#4465fd" stroke-width="1"/><polygon points="569.4,289.5 562.2,284.6 575.8,279.3 583.0,284.2" fill="#4367fd" stroke="#4367fd" stroke-width="1"/><polygon points="583.0,284.2 575.8,279.3 589.4,274.0 596.6,278.9" fill="#4368fe" stroke="#4368fe" stroke-width="1"/><polygon points="596.6,278.9 589.4,274.0 603.0,268.7 610.2,273.6" fill="#426afe" stroke="#426afe" stroke-width="1"/><polygon points="610.2,273.6 603.0,268.7 616.6,263.4 623.8,268.4" fill="#416bfe" stroke="#416bfe" stroke-width="1"/><polygon points="623.8,268.4 616.6,263.4 630.2,258.1 637.4,263.1" fill="#406dfe" stroke="#406dfe" stroke-width="1"/><polygon points="637.4,263.1 630.2,258.1 643.8,252.8 651.0,257.8" fill="#3f6eff" stroke="#3f6eff" stroke-width="1"/><polygon points="651.0,257.8 643.8,252.8 657.3,247.5 664.6,252.5" fill="#3e70ff" stroke="#3e70ff" stroke-width="1"/><polygon points="664.6,252.5 657.3,247.5 670.9,242.2 678.2,247.2" fill="#3c71ff" stroke="#3c71ff" stroke-width="1"/><polygon points="678.2,247.2 670.9,242.2 684.5,236.9 691.8,241.9" fill="#3b73fe" stroke="#3b73fe" stroke-width="1"/><polygon points="691.8,241.9 684.5,236.9 698.1,231.6 705.4,236.6" fill="#3974fe" stroke="#3974fe" stroke-width="1"/><polygon points="705.4,236.6 698.1,231.6 711.7,226.3 718.9,231.3" fill="#3876fe" stroke="#3876fe" stroke-width="1"/><polygon points="718.9,231.3 711.7,226.3 725.3,221.0 732.5,226.1" fill="#3678fe" stroke="#3678fe" stroke-width="1"/><polygon points="399.0,348.2 391.8,343.4 405.3,338.1 412.6,342.9" fill="#4853f5" stroke="#4853f5" stroke-width="1"/><polygon points="412.6,342.9 405.3,338.1 418.9,332.8 426.2,337.6" fill="#4755f6" stroke="#4755f6" stroke-width="1"/><polygon points="426.2,337.6 418.9,332.8 432.5,327.4 439.8,332.3" fill="#4757f7" stroke="#4757f7" stroke-width="1"/><polygon points="439.8,332.3 432.5,327.4 446.1,322.1 453.4,327.0" fill="#4759f8" stroke="#4759f8" stroke-width="1"/><polygon points="453.4,327.0 446.1,322.1 459.7,316.8 467.0,321.7" fill="#475bf9" stroke="#475bf9" stroke-width="1"/><polygon points="467.0,321.7 459.7,316.8 473.3,311.5 480.6,316.4" fill="#475dfa" stroke="#475dfa" stroke-width="1"/><polygon points="480.6,316.4 473.3,311.5 486.9,306.2 494.2,311.1" fill="#465efb" stroke="#465efb" stroke-width="1"/><polygon points="494.2,311.1 486.9,306.2 500.5,300.9 507.8,305.8" fill="#4660fc" stroke="#4660fc" stroke-width="1"/><polygon points="507.8,305.8 500.5,300.9 514.1,295.6 521.4,300.5" fill="#4562fc" stroke="#4562fc" stroke-width="1"/><polygon points="521.4,300.5 514.1,295.6 527.7,290.3 535.0,295.2" fill="#4564fd" stroke="#4564fd" stroke-width="1"/><polygon points="535.0,295.2 527.7,290.3 541.3,285.0 548.6,289.9" fill="#4465fd" stroke="#4465fd" stroke-width="1"/><polygon points="548.6,289.9 541.3,285.0 554.9,279.7 562.2,284.6" fill="#4367fd" stroke="#4367fd" stroke-width="1"/><polygon points="562.2,284.6 554.9,279.7 568.5,274.3 575.8,279.3" fill="#4369fe" stroke="#4369fe" stroke-width="1"/><polygon points="575.8,279.3 568.5,274.3 582.1,269.0 589.4,274.0" fill="#426afe" stroke="#426afe" stroke-width="1"/><polygon points="589.4,274.0 582.1,269.0 595.7,263.7 603.0,268.7" fill="#406cfe" stroke="#406cfe" stroke-width="1"/><polygon points="603.0,268.7 595.7,263.7 609.3,258.4 616.6,263.4" fill="#3f6efe" stroke="#3f6efe" stroke-width="1"/><polygon points="616.6,263.4 609.3,258.4 622.9,253.1 630.2,258.1" fill="#3e6fff" stroke="#3e6fff" stroke-width="1"/><polygon points="630.2,258.1 622.9,253.1 636.5,247.8 643.8,252.8" fill="#3c71ff" stroke="#3c71ff" stroke-width="1"/><polygon points="643.8,252.8 636.5,247.8 650.1,242.5 657.3,247.5" fill="#3b73fe" stroke="#3b73fe" stroke-width="1"/><polygon points="657.3,247.5 650.1,242.5 663.7,237.2 670.9,242.2" fill="#3975fe" stroke="#3975fe" stroke-width="1"/><polygon points="670.9,242.2 663.7,237.2 677.3,231.9 684.5,236.9" fill="#3776fe" stroke="#3776fe" stroke-width="1"/><polygon points="684.5,236.9 677.3,231.9 690.9,226.6 698.1,231.6" fill="#3678fd" stroke="#3678fd" stroke-width="1"/><polygon points="698.1,231.6 690.9,226.6 704.5,221.2 711.7,226.3" fill="#347afd" stroke="#347afd" stroke-width="1"/><polygon points="711.7,226.3 704.5,221.2 718.1,215.9 725.3,221.0" fill="#327bfc" stroke="#327bfc" stroke-width="1"/><polygon points="391.8,343.4 384.5,338.6 398.1,333.3 405.3,338.1" fill="#4853f5" stroke="#4853f5" stroke-width="1"/><polygon points="405.3,338.1 398.1,333.3 411.7,327.9 418.9,332.8" fill="#4755f6" stroke="#4755f6" stroke-width="1"/><polygon points="418.9,332.8 411.7,327.9 425.3,322.6 432.5,327.4" fill="#4757f7" stroke="#4757f7" stroke-width="1"/><polygon points="432.5,327.4 425.3,322.6 438.9,317.3 446.1,322.1" fill="#475af9" stroke="#475af9" stroke-width="1"/><polygon points="446.1,322.1 438.9,317.3 452.5,312.0 459.7,316.8" fill="#475cfa" stroke="#475cfa" stroke-width="1"/><polygon points="459.7,316.8 452.5,312.0 466.1,306.7 473.3,311.5" fill="#465dfb" stroke="#465dfb" stroke-width="1"/><polygon points="473.3,311.5 466.1,306.7 479.7,301.3 486.9,306.2" fill="#465ffb" stroke="#465ffb" stroke-width="1"/><polygon points="486.9,306.2 479.7,301.3 493.3,296.0 500.5,300.9" fill="#4561fc" stroke="#4561fc" stroke-width="1"/><polygon points="500.5,300.9 493.3,296.0 506.9,290.7 514.1,295.6" fill="#4563fd" stroke="#4563fd" stroke-width="1"/><polygon points="514.1,295.6 506.9,290.7 520.5,285.4 527.7,290.3" fill="#4465fd" stroke="#4465fd" stroke-width="1"/><polygon points="527.7,290.3 520.5,285.4 534.1,280.1 541.3,285.0" fill="#4367fd" stroke="#4367fd" stroke-width="1"/><polygon points="541.3,285.0 534.1,280.1 547.7,274.7 554.9,279.7" fill="#4269fe" stroke="#4269fe" stroke-width="1"/><polygon points="554.9,279.7 547.7,274.7 561.3,269.4 568.5,274.3" fill="#416bfe" stroke="#416bfe" stroke-width="1"/><polygon points="568.5,274.3 561.3,269.4 574.9,264.1 582.1,269.0" fill="#406dfe" stroke="#406dfe" stroke-width="1"/><polygon points="582.1,269.0 574.9,264.1 588.5,258.8 595.7,263.7" fill="#3f6eff" stroke="#3f6eff" stroke-width="1"/><polygon points="595.7,263.7 588.5,258.8 602.1,253.4 609.3,258.4" fill="#3d70ff" stroke="#3d70ff" stroke-width="1"/><polygon points="609.3,258.4 602.1,253.4 615.7,248.1 622.9,253.1" fill="#3b72ff" stroke="#3b72ff" stroke-width="1"/><polygon points="622.9,253.1 615.7,248.1 629.3,242.8 636.5,247.8" fill="#3a74fe" stroke="#3a74fe" stroke-width="1"/><polygon points="636.5,247.8 629.3,242.8 642.9,237.5 650.1,242.5" fill="#3876fe" stroke="#3876fe" stroke-width="1"/><polygon points="650.1,242.5 642.9,237.5 656.5,232.2 663.7,237.2" fill="#3678fe" stroke="#3678fe" stroke-width="1"/><polygon points="663.7,237.2 656.5,232.2 670.1,226.8 677.3,231.9" fill="#3479fd" stroke="#3479fd" stroke-width="1"/><polygon points="677.3,231.9 670.1,226.8 683.7,221.5 690.9,226.6" fill="#327bfc" stroke="#327bfc" stroke-width="1"/><polygon points="690.9,226.6 683.7,221.5 697.3,216.2 704.5,221.2" fill="#317dfc" stroke="#317dfc" stroke-width="1"/><polygon points="704.5,221.2 697.3,216.2 710.9,210.9 718.1,215.9" fill="#307ffb" stroke="#307ffb" stroke-width="1"/><polygon points="384.5,338.6 377.2,333.8 390.9,328.5 398.1,333.3" fill="#4853f5" stroke="#4853f5" stroke-width="1"/><polygon points="398.1,333.3 390.9,328.5 404.5,323.1 411.7,327.9" fill="#4756f6" stroke="#4756f6" stroke-width="1"/><polygon points="411.7,327.9 404.5,323.1 418.1,317.8 425.3,322.6" fill="#4758f8" stroke="#4758f8" stroke-width="1"/><polygon points="425.3,322.6 418.1,317.8 431.7,312.5 438.9,317.3" fill="#475af9" stroke="#475af9" stroke-width="1"/><polygon points="438.9,317.3 431.7,312.5 445.3,307.1 452.5,312.0" fill="#475cfa" stroke="#475cfa" stroke-width="1"/><polygon points="452.5,312.0 445.3,307.1 458.9,301.8 466.1,306.7" fill="#465efb" stroke="#465efb" stroke-width="1"/><polygon points="466.1,306.7 458.9,301.8 472.5,296.5 479.7,301.3" fill="#4661fc" stroke="#4661fc" stroke-width="1"/><polygon points="479.7,301.3 472.5,296.5 486.1,291.1 493.3,296.0" fill="#4563fc" stroke="#4563fc" stroke-width="1"/><polygon points="493.3,296.0 486.1,291.1 499.7,285.8 506.9,290.7" fill="#4465fd" stroke="#4465fd" stroke-width="1"/><polygon points="506.9,290.7 499.7,285.8 513.3,280.5 520.5,285.4" fill="#4367fd" stroke="#4367fd" stroke-width="1"/><polygon points="520.5,285.4 513.3,280.5 526.9,275.1 534.1,280.1" fill="#4369fe" stroke="#4369fe" stroke-width="1"/><polygon points="534.1,280.1 526.9,275.1 540.5,269.8 547.7,274.7" fill="#416bfe" stroke="#416bfe" stroke-width="1"/><polygon points="547.7,274.7 540.5,269.8 554.1,264.5 561.3,269.4" fill="#406dfe" stroke="#406dfe" stroke-width="1"/><polygon points="561.3,269.4 554.1,264.5 567.7,259.1 574.9,264.1" fill="#3f6fff" stroke="#3f6fff" stroke-width="1"/><polygon points="574.9,264.1 567.7,259.1 581.3,253.8 588.5,258.8" fill="#3d71ff" stroke="#3d71ff" stroke-width="1"/><polygon points="588.5,258.8 581.3,253.8 594.9,248.5 602.1,253.4" fill="#3b73fe" stroke="#3b73fe" stroke-width="1"/><polygon points="602.1,253.4 594.9,248.5 608.5,243.1 615.7,248.1" fill="#3975fe" stroke="#3975fe" stroke-width="1"/><polygon points="615.7,248.1 608.5,243.1 622.1,237.8 629.3,242.8" fill="#3777fe" stroke="#3777fe" stroke-width="1"/><polygon points="629.3,242.8 622.1,237.8 635.7,232.5 642.9,237.5" fill="#3579fd" stroke="#3579fd" stroke-width="1"/><polygon points="642.9,237.5 635.7,232.5 649.3,227.1 656.5,232.2" fill="#337bfd" stroke="#337bfd" stroke-width="1"/><polygon points="656.5,232.2 649.3,227.1 662.9,221.8 670.1,226.8" fill="#317dfc" stroke="#317dfc" stroke-width="1"/><polygon points="670.1,226.8 662.9,221.8 676.5,216.5 683.7,221.5" fill="#307efb" stroke="#307efb" stroke-width="1"/><polygon points="683.7,221.5 676.5,216.5 690.1,211.1 697.3,216.2" fill="#2f80fa" stroke="#2f80fa" stroke-width="1"/><polygon points="697.3,216.2 690.1,211.1 703.7,205.8 710.9,210.9" fill="#2f82fa" stroke="#2f82fa" stroke-width="1"/><polygon points="377.2,333.8 370.0,329.0 383.6,323.7 390.9,328.5" fill="#4853f5" stroke="#4853f5" stroke-width="1"/><polygon points="390.9,328.5 383.6,323.7 397.2,318.3 404.5,323.1" fill="#4756f6" stroke="#4756f6" stroke-width="1"/><polygon points="404.5,323.1 397.2,318.3 410.8,313.0 418.1,317.8" fill="#4758f8" stroke="#4758f8" stroke-width="1"/><polygon points="418.1,317.8 410.8,313.0 424.4,307.6 431.7,312.5" fill="#475bf9" stroke="#475bf9" stroke-width="1"/><polygon points="431.7,312.5 424.4,307.6 438.0,302.3 445.3,307.1" fill="#465dfa" stroke="#465dfa" stroke-width="1"/><polygon points="445.3,307.1 438.0,302.3 451.6,296.9 458.9,301.8" fill="#465ffb" stroke="#465ffb" stroke-width="1"/><polygon points="458.9,301.8 451.6,296.9 465.2,291.6 472.5,296.5" fill="#4562fc" stroke="#4562fc" stroke-width="1"/><polygon points="472.5,296.5 465.2,291.6 478.8,286.2 486.1,291.1" fill="#4564fd" stroke="#4564fd" stroke-width="1"/><polygon points="486.1,291.1 478.8,286.2 492.4,280.9 499.7,285.8" fill="#4466fd" stroke="#4466fd" stroke-width="1"/><polygon points="499.7,285.8 492.4,280.9 506.0,275.6 513.3,280.5" fill="#4368fe" stroke="#4368fe" stroke-width="1"/><polygon points="513.3,280.5 506.0,275.6 519.6,270.2 526.9,275.1" fill="#416afe" stroke="#416afe" stroke-width="1"/><polygon points="526.9,275.1 519.6,270.2 533.2,264.9 540.5,269.8" fill="#406dfe" stroke="#406dfe" stroke-width="1"/><polygon points="540.5,269.8 533.2,264.9 546.9,259.5 554.1,264.5" fill="#3f6fff" stroke="#3f6fff" stroke-width="1"/><polygon points="554.1,264.5 546.9,259.5 560.5,254.2 567.7,259.1" fill="#3d71ff" stroke="#3d71ff" stroke-width="1"/><polygon points="567.7,259.1 560.5,254.2 574.1,248.8 581.3,253.8" fill="#3a73fe" stroke="#3a73fe" stroke-width="1"/><polygon points="581.3,253.8 574.1,248.8 587.7,243.5 594.9,248.5" fill="#3875fe" stroke="#3875fe" stroke-width="1"/><polygon points="594.9,248.5 587.7,243.5 601.3,238.2 608.5,243.1" fill="#3677fe" stroke="#3677fe" stroke-width="1"/><polygon points="608.5,243.1 601.3,238.2 614.9,232.8 622.1,237.8" fill="#347afd" stroke="#347afd" stroke-width="1"/><polygon points="622.1,237.8 614.9,232.8 628.5,227.5 635.7,232.5" fill="#327cfc" stroke="#327cfc" stroke-width="1"/><polygon points="635.7,232.5 628.5,227.5 642.1,222.1 649.3,227.1" fill="#317efb" stroke="#317efb" stroke-width="1"/><polygon points="649.3,227.1 642.1,222.1 655.7,216.8 662.9,221.8" fill="#3080fb" stroke="#3080fb" stroke-width="1"/><polygon points="662.9,221.8 655.7,216.8 669.3,211.4 676.5,216.5" fill="#2f81fa" stroke="#2f81fa" stroke-width="1"/><polygon points="676.5,216.5 669.3,211.4 682.9,206.1 690.1,211.1" fill="#2e83f9" stroke="#2e83f9" stroke-width="1"/><polygon points="690.1,211.1 682.9,206.1 696.5,200.8 703.7,205.8" fill="#2e85f8" stroke="#2e85f8" stroke-width="1"/><polygon points="370.0,329.0 362.8,324.2 376.4,318.9 383.6,323.7" fill="#4853f5" stroke="#4853f5" stroke-width="1"/><polygon points="383.6,323.7 376.4,318.9 390.0,313.5 397.2,318.3" fill="#4756f7" stroke="#4756f7" stroke-width="1"/><polygon points="397.2,318.3 390.0,313.5 403.6,308.1 410.8,313.0" fill="#4759f8" stroke="#4759f8" stroke-width="1"/><polygon points="410.8,313.0 403.6,308.1 417.2,302.8 424.4,307.6" fill="#475bfa" stroke="#475bfa" stroke-width="1"/><polygon points="424.4,307.6 417.2,302.8 430.8,297.4 438.0,302.3" fill="#465efb" stroke="#465efb" stroke-width="1"/><polygon points="438.0,302.3 430.8,297.4 444.4,292.1 451.6,296.9" fill="#4660fc" stroke="#4660fc" stroke-width="1"/><polygon points="451.6,296.9 444.4,292.1 458.0,286.7 465.2,291.6" fill="#4563fc" stroke="#4563fc" stroke-width="1"/><polygon points="465.2,291.6 458.0,286.7 471.6,281.4 478.8,286.2" fill="#4465fd" stroke="#4465fd" stroke-width="1"/><polygon points="478.8,286.2 471.6,281.4 485.2,276.0 492.4,280.9" fill="#4367fd" stroke="#4367fd" stroke-width="1"/><polygon points="492.4,280.9 485.2,276.0 498.8,270.7 506.0,275.6" fill="#426afe" stroke="#426afe" stroke-width="1"/><polygon points="506.0,275.6 498.8,270.7 512.4,265.3 519.6,270.2" fill="#406cfe" stroke="#406cfe" stroke-width="1"/><polygon points="519.6,270.2 512.4,265.3 526.0,259.9 533.2,264.9" fill="#3f6eff" stroke="#3f6eff" stroke-width="1"/><polygon points="533.2,264.9 526.0,259.9 539.6,254.6 546.9,259.5" fill="#3d71ff" stroke="#3d71ff" stroke-width="1"/><polygon points="546.9,259.5 539.6,254.6 553.2,249.2 560.5,254.2" fill="#3a73fe" stroke="#3a73fe" stroke-width="1"/><polygon points="560.5,254.2 553.2,249.2 566.8,243.9 574.1,248.8" fill="#3875fe" stroke="#3875fe" stroke-width="1"/><polygon points="574.1,248.8 566.8,243.9 580.4,238.5 587.7,243.5" fill="#3678fe" stroke="#3678fe" stroke-width="1"/><polygon points="587.7,243.5 580.4,238.5 594.1,233.2 601.3,238.2" fill="#347afd" stroke="#347afd" stroke-width="1"/><polygon points="601.3,238.2 594.1,233.2 607.7,227.8 614.9,232.8" fill="#327cfc" stroke="#327cfc" stroke-width="1"/><polygon points="614.9,232.8 607.7,227.8 621.3,222.5 628.5,227.5" fill="#317efb" stroke="#317efb" stroke-width="1"/><polygon points="628.5,227.5 621.3,222.5 634.9,217.1 642.1,222.1" fill="#2f80fa" stroke="#2f80fa" stroke-width="1"/><polygon points="642.1,222.1 634.9,217.1 648.5,211.8 655.7,216.8" fill="#2f82f9" stroke="#2f82f9" stroke-width="1"/><polygon points="655.7,216.8 648.5,211.8 662.1,206.4 669.3,211.4" fill="#2e84f8" stroke="#2e84f8" stroke-width="1"/><polygon points="669.3,211.4 662.1,206.4 675.7,201.0 682.9,206.1" fill="#2e86f7" stroke="#2e86f7" stroke-width="1"/><polygon points="682.9,206.1 675.7,201.0 689.3,195.7 696.5,200.8" fill="#2d88f6" stroke="#2d88f6" stroke-width="1"/><polygon points="362.8,324.2 355.5,319.4 369.1,314.1 376.4,318.9" fill="#4853f5" stroke="#4853f5" stroke-width="1"/><polygon points="376.4,318.9 369.1,314.1 382.7,308.7 390.0,313.5" fill="#4756f7" stroke="#4756f7" stroke-width="1"/><polygon points="390.0,313.5 382.7,308.7 396.3,303.3 403.6,308.1" fill="#4759f8" stroke="#4759f8" stroke-width="1"/><polygon points="403.6,308.1 396.3,303.3 409.9,298.0 417.2,302.8" fill="#475cfa" stroke="#475cfa" stroke-width="1"/><polygon points="417.2,302.8 409.9,298.0 423.5,292.6 430.8,297.4" fill="#465ffb" stroke="#465ffb" stroke-width="1"/><polygon points="430.8,297.4 423.5,292.6 437.1,287.2 444.4,292.1" fill="#4561fc" stroke="#4561fc" stroke-width="1"/><polygon points="444.4,292.1 437.1,287.2 450.8,281.9 458.0,286.7" fill="#4564fd" stroke="#4564fd" stroke-width="1"/><polygon points="458.0,286.7 450.8,281.9 464.4,276.5 471.6,281.4" fill="#4466fd" stroke="#4466fd" stroke-width="1"/><polygon points="471.6,281.4 464.4,276.5 478.0,271.1 485.2,276.0" fill="#4269fe" stroke="#4269fe" stroke-width="1"/><polygon points="485.2,276.0 478.0,271.1 491.6,265.8 498.8,270.7" fill="#416bfe" stroke="#416bfe" stroke-width="1"/><polygon points="498.8,270.7 491.6,265.8 505.2,260.4 512.4,265.3" fill="#3f6efe" stroke="#3f6efe" stroke-width="1"/><polygon points="512.4,265.3 505.2,260.4 518.8,255.0 526.0,259.9" fill="#3d70ff" stroke="#3d70ff" stroke-width="1"/><polygon points="526.0,259.9 518.8,255.0 532.4,249.7 539.6,254.6" fill="#3b73fe" stroke="#3b73fe" stroke-width="1"/><polygon points="539.6,254.6 532.4,249.7 546.0,244.3 553.2,249.2" fill="#3875fe" stroke="#3875fe" stroke-width="1"/><polygon points="553.2,249.2 546.0,244.3 559.6,238.9 566.8,243.9" fill="#3678fe" stroke="#3678fe" stroke-width="1"/><polygon points="566.8,243.9 559.6,238.9 573.2,233.6 580.4,238.5" fill="#347afd" stroke="#347afd" stroke-width="1"/><polygon points="580.4,238.5 573.2,233.6 586.8,228.2 594.1,233.2" fill="#327cfc" stroke="#327cfc" stroke-width="1"/><polygon points="594.1,233.2 586.8,228.2 600.4,222.8 607.7,227.8" fill="#307ffb" stroke="#307ffb" stroke-width="1"/><polygon points="607.7,227.8 600.4,222.8 614.0,217.5 621.3,222.5" fill="#2f81fa" stroke="#2f81fa" stroke-width="1"/><polygon points="621.3,222.5 614.0,217.5 627.7,212.1 634.9,217.1" fill="#2e83f9" stroke="#2e83f9" stroke-width="1"/><polygon points="634.9,217.1 627.7,212.1 641.3,206.7 648.5,211.8" fill="#2e85f8" stroke="#2e85f8" stroke-width="1"/><polygon points="648.5,211.8 641.3,206.7 654.9,201.4 662.1,206.4" fill="#2e87f7" stroke="#2e87f7" stroke-width="1"/><polygon points="662.1,206.4 654.9,201.4 668.5,196.0 675.7,201.0" fill="#2d89f5" stroke="#2d89f5" stroke-width="1"/><polygon points="675.7,201.0 668.5,196.0 682.1,190.6 689.3,195.7" fill="#2d8bf4" stroke="#2d8bf4" stroke-width="1"/><polygon points="355.5,319.4 348.2,314.6 361.9,309.2 369.1,314.1" fill="#4853f5" stroke="#4853f5" stroke-width="1"/><polygon points="369.1,314.1 361.9,309.2 375.5,303.9 382.7,308.7" fill="#4757f7" stroke="#4757f7" stroke-width="1"/><polygon points="382.7,308.7 375.5,303.9 389.1,298.5 396.3,303.3" fill="#475af9" stroke="#475af9" stroke-width="1"/><polygon points="396.3,303.3 389.1,298.5 402.7,293.1 409.9,298.0" fill="#475dfa" stroke="#475dfa" stroke-width="1"/><polygon points="409.9,298.0 402.7,293.1 416.3,287.7 423.5,292.6" fill="#465ffb" stroke="#465ffb" stroke-width="1"/><polygon points="423.5,292.6 416.3,287.7 429.9,282.4 437.1,287.2" fill="#4562fc" stroke="#4562fc" stroke-width="1"/><polygon points="437.1,287.2 429.9,282.4 443.5,277.0 450.8,281.9" fill="#4465fd" stroke="#4465fd" stroke-width="1"/><polygon points="450.8,281.9 443.5,277.0 457.1,271.6 464.4,276.5" fill="#4368fd" stroke="#4368fd" stroke-width="1"/><polygon points="464.4,276.5 457.1,271.6 470.7,266.2 478.0,271.1" fill="#426afe" stroke="#426afe" stroke-width="1"/><polygon points="478.0,271.1 470.7,266.2 484.3,260.8 491.6,265.8" fill="#406dfe" stroke="#406dfe" stroke-width="1"/><polygon points="491.6,265.8 484.3,260.8 498.0,255.5 505.2,260.4" fill="#3e6fff" stroke="#3e6fff" stroke-width="1"/><polygon points="505.2,260.4 498.0,255.5 511.6,250.1 518.8,255.0" fill="#3b72ff" stroke="#3b72ff" stroke-width="1"/><polygon points="518.8,255.0 511.6,250.1 525.2,244.7 532.4,249.7" fill="#3975fe" stroke="#3975fe" stroke-width="1"/><polygon points="532.4,249.7 525.2,244.7 538.8,239.3 546.0,244.3" fill="#3677fe" stroke="#3677fe" stroke-width="1"/><polygon points="546.0,244.3 538.8,239.3 552.4,234.0 559.6,238.9" fill="#347afd" stroke="#347afd" stroke-width="1"/><polygon points="559.6,238.9 552.4,234.0 566.0,228.6 573.2,233.6" fill="#327cfc" stroke="#327cfc" stroke-width="1"/><polygon points="573.2,233.6 566.0,228.6 579.6,223.2 586.8,228.2" fill="#307ffb" stroke="#307ffb" stroke-width="1"/><polygon points="586.8,228.2 579.6,223.2 593.2,217.8 600.4,222.8" fill="#2f81fa" stroke="#2f81fa" stroke-width="1"/><polygon points="600.4,222.8 593.2,217.8 606.8,212.5 614.0,217.5" fill="#2e83f9" stroke="#2e83f9" stroke-width="1"/><polygon points="614.0,217.5 606.8,212.5 620.4,207.1 627.7,212.1" fill="#2e86f8" stroke="#2e86f8" stroke-width="1"/><polygon points="627.7,212.1 620.4,207.1 634.0,201.7 641.3,206.7" fill="#2d88f6" stroke="#2d88f6" stroke-width="1"/><polygon points="641.3,206.7 634.0,201.7 647.7,196.3 654.9,201.4" fill="#2d8af5" stroke="#2d8af5" stroke-width="1"/><polygon points="654.9,201.4 647.7,196.3 661.3,190.9 668.5,196.0" fill="#2d8cf3" stroke="#2d8cf3" stroke-width="1"/><polygon points="668.5,196.0 661.3,190.9 674.9,185.6 682.1,190.6" fill="#2c8ef1" stroke="#2c8ef1" stroke-width="1"/><polygon points="348.2,314.6 341.0,309.8 354.6,304.4 361.9,309.2" fill="#4854f5" stroke="#4854f5" stroke-width="1"/><polygon points="361.9,309.2 354.6,304.4 368.2,299.1 375.5,303.9" fill="#4757f7" stroke="#4757f7" stroke-width="1"/><polygon points="375.5,303.9 368.2,299.1 381.8,293.7 389.1,298.5" fill="#475af9" stroke="#475af9" stroke-width="1"/><polygon points="389.1,298.5 381.8,293.7 395.4,288.3 402.7,293.1" fill="#465dfa" stroke="#465dfa" stroke-width="1"/><polygon points="402.7,293.1 395.4,288.3 409.1,282.9 416.3,287.7" fill="#4660fc" stroke="#4660fc" stroke-width="1"/><polygon points="416.3,287.7 409.1,282.9 422.7,277.5 429.9,282.4" fill="#4563fd" stroke="#4563fd" stroke-width="1"/><polygon points="429.9,282.4 422.7,277.5 436.3,272.1 443.5,277.0" fill="#4466fd" stroke="#4466fd" stroke-width="1"/><polygon points="443.5,277.0 436.3,272.1 449.9,266.7 457.1,271.6" fill="#4369fe" stroke="#4369fe" stroke-width="1"/><polygon points="457.1,271.6 449.9,266.7 463.5,261.3 470.7,266.2" fill="#416cfe" stroke="#416cfe" stroke-width="1"/><polygon points="470.7,266.2 463.5,261.3 477.1,255.9 484.3,260.8" fill="#3f6eff" stroke="#3f6eff" stroke-width="1"/><polygon points="484.3,260.8 477.1,255.9 490.7,250.6 498.0,255.5" fill="#3c71ff" stroke="#3c71ff" stroke-width="1"/><polygon points="498.0,255.5 490.7,250.6 504.3,245.2 511.6,250.1" fill="#3a74fe" stroke="#3a74fe" stroke-width="1"/><polygon points="511.6,250.1 504.3,245.2 517.9,239.8 525.2,244.7" fill="#3777fe" stroke="#3777fe" stroke-width="1"/><polygon points="525.2,244.7 517.9,239.8 531.6,234.4 538.8,239.3" fill="#3479fd" stroke="#3479fd" stroke-width="1"/><polygon points="538.8,239.3 531.6,234.4 545.2,229.0 552.4,234.0" fill="#327cfc" stroke="#327cfc" stroke-width="1"/><polygon points="552.4,234.0 545.2,229.0 558.8,223.6 566.0,228.6" fill="#307ffb" stroke="#307ffb" stroke-width="1"/><polygon points="566.0,228.6 558.8,223.6 572.4,218.2 579.6,223.2" fill="#2f81fa" stroke="#2f81fa" stroke-width="1"/><polygon points="579.6,223.2 572.4,218.2 586.0,212.8 593.2,217.8" fill="#2e83f9" stroke="#2e83f9" stroke-width="1"/><polygon points="593.2,217.8 586.0,212.8 599.6,207.4 606.8,212.5" fill="#2e86f7" stroke="#2e86f7" stroke-width="1"/><polygon points="606.8,212.5 599.6,207.4 613.2,202.1 620.4,207.1" fill="#2d88f6" stroke="#2d88f6" stroke-width="1"/><polygon points="620.4,207.1 613.2,202.1 626.8,196.7 634.0,201.7" fill="#2d8af4" stroke="#2d8af4" stroke-width="1"/><polygon points="634.0,201.7 626.8,196.7 640.4,191.3 647.7,196.3" fill="#2d8cf3" stroke="#2d8cf3" stroke-width="1"/><polygon points="647.7,196.3 640.4,191.3 654.1,185.9 661.3,190.9" fill="#2c8ff1" stroke="#2c8ff1" stroke-width="1"/><polygon points="661.3,190.9 654.1,185.9 667.7,180.5 674.9,185.6" fill="#2b91ef" stroke="#2b91ef" stroke-width="1"/><polygon points="341.0,309.8 333.8,305.0 347.4,299.6 354.6,304.4" fill="#4854f5" stroke="#4854f5" stroke-width="1"/><polygon points="354.6,304.4 347.4,299.6 361.0,294.2 368.2,299.1" fill="#4757f7" stroke="#4757f7" stroke-width="1"/><polygon points="368.2,299.1 361.0,294.2 374.6,288.8 381.8,293.7" fill="#475bf9" stroke="#475bf9" stroke-width="1"/><polygon points="381.8,293.7 374.6,288.8 388.2,283.4 395.4,288.3" fill="#465efb" stroke="#465efb" stroke-width="1"/><polygon points="395.4,288.3 388.2,283.4 401.8,278.0 409.1,282.9" fill="#4561fc" stroke="#4561fc" stroke-width="1"/><polygon points="409.1,282.9 401.8,278.0 415.4,272.6 422.7,277.5" fill="#4564fd" stroke="#4564fd" stroke-width="1"/><polygon points="422.7,277.5 415.4,272.6 429.0,267.2 436.3,272.1" fill="#4367fd" stroke="#4367fd" stroke-width="1"/><polygon points="436.3,272.1 429.0,267.2 442.7,261.8 449.9,266.7" fill="#426afe" stroke="#426afe" stroke-width="1"/><polygon points="449.9,266.7 442.7,261.8 456.3,256.4 463.5,261.3" fill="#406dfe" stroke="#406dfe" stroke-width="1"/><polygon points="463.5,261.3 456.3,256.4 469.9,251.0 477.1,255.9" fill="#3e70ff" stroke="#3e70ff" stroke-width="1"/><polygon points="477.1,255.9 469.9,251.0 483.5,245.6 490.7,250.6" fill="#3b73fe" stroke="#3b73fe" stroke-width="1"/><polygon points="490.7,250.6 483.5,245.6 497.1,240.2 504.3,245.2" fill="#3876fe" stroke="#3876fe" stroke-width="1"/><polygon points="504.3,245.2 497.1,240.2 510.7,234.8 517.9,239.8" fill="#3579fd" stroke="#3579fd" stroke-width="1"/><polygon points="517.9,239.8 510.7,234.8 524.3,229.4 531.6,234.4" fill="#327cfc" stroke="#327cfc" stroke-width="1"/><polygon points="531.6,234.4 524.3,229.4 537.9,224.0 545.2,229.0" fill="#317efb" stroke="#317efb" stroke-width="1"/><polygon points="545.2,229.0 537.9,224.0 551.6,218.6 558.8,223.6" fill="#2f81fa" stroke="#2f81fa" stroke-width="1"/><polygon points="558.8,223.6 551.6,218.6 565.2,213.2 572.4,218.2" fill="#2e83f9" stroke="#2e83f9" stroke-width="1"/><polygon points="572.4,218.2 565.2,213.2 578.8,207.8 586.0,212.8" fill="#2e86f7" stroke="#2e86f7" stroke-width="1"/><polygon points="586.0,212.8 578.8,207.8 592.4,202.4 599.6,207.4" fill="#2d88f6" stroke="#2d88f6" stroke-width="1"/><polygon points="599.6,207.4 592.4,202.4 606.0,197.0 613.2,202.1" fill="#2d8af4" stroke="#2d8af4" stroke-width="1"/><polygon points="613.2,202.1 606.0,197.0 619.6,191.6 626.8,196.7" fill="#2d8df2" stroke="#2d8df2" stroke-width="1"/><polygon points="626.8,196.7 619.6,191.6 633.2,186.2 640.4,191.3" fill="#2c8ff1" stroke="#2c8ff1" stroke-width="1"/><polygon points="640.4,191.3 633.2,186.2 646.8,180.8 654.1,185.9" fill="#2b91ef" stroke="#2b91ef" stroke-width="1"/><polygon points="654.1,185.9 646.8,180.8 660.5,175.4 667.7,180.5" fill="#2a93ed" stroke="#2a93ed" stroke-width="1"/><polygon points="333.8,305.0 326.5,300.2 340.1,294.8 347.4,299.6" fill="#4854f5" stroke="#4854f5" stroke-width="1"/><polygon points="347.4,299.6 340.1,294.8 353.7,289.4 361.0,294.2" fill="#4758f8" stroke="#4758f8" stroke-width="1"/><polygon points="361.0,294.2 353.7,289.4 367.3,284.0 374.6,288.8" fill="#475bf9" stroke="#475bf9" stroke-width="1"/><polygon points="374.6,288.8 367.3,284.0 381.0,278.6 388.2,283.4" fill="#465efb" stroke="#465efb" stroke-width="1"/><polygon points="388.2,283.4 381.0,278.6 394.6,273.2 401.8,278.0" fill="#4562fc" stroke="#4562fc" stroke-width="1"/><polygon points="401.8,278.0 394.6,273.2 408.2,267.8 415.4,272.6" fill="#4465fd" stroke="#4465fd" stroke-width="1"/><polygon points="415.4,272.6 408.2,267.8 421.8,262.4 429.0,267.2" fill="#4368fe" stroke="#4368fe" stroke-width="1"/><polygon points="429.0,267.2 421.8,262.4 435.4,257.0 442.7,261.8" fill="#416bfe" stroke="#416bfe" stroke-width="1"/><polygon points="442.7,261.8 435.4,257.0 449.0,251.5 456.3,256.4" fill="#3f6eff" stroke="#3f6eff" stroke-width="1"/><polygon points="456.3,256.4 449.0,251.5 462.6,246.1 469.9,251.0" fill="#3c71ff" stroke="#3c71ff" stroke-width="1"/><polygon points="469.9,251.0 462.6,246.1 476.3,240.7 483.5,245.6" fill="#3974fe" stroke="#3974fe" stroke-width="1"/><polygon points="483.5,245.6 476.3,240.7 489.9,235.3 497.1,240.2" fill="#3678fe" stroke="#3678fe" stroke-width="1"/><polygon points="497.1,240.2 489.9,235.3 503.5,229.9 510.7,234.8" fill="#337bfd" stroke="#337bfd" stroke-width="1"/><polygon points="510.7,234.8 503.5,229.9 517.1,224.5 524.3,229.4" fill="#317dfb" stroke="#317dfb" stroke-width="1"/><polygon points="524.3,229.4 517.1,224.5 530.7,219.1 537.9,224.0" fill="#2f80fa" stroke="#2f80fa" stroke-width="1"/><polygon points="537.9,224.0 530.7,219.1 544.3,213.7 551.6,218.6" fill="#2e83f9" stroke="#2e83f9" stroke-width="1"/><polygon points="551.6,218.6 544.3,213.7 557.9,208.3 565.2,213.2" fill="#2e85f8" stroke="#2e85f8" stroke-width="1"/><polygon points="565.2,213.2 557.9,208.3 571.6,202.8 578.8,207.8" fill="#2d88f6" stroke="#2d88f6" stroke-width="1"/><polygon points="578.8,207.8 571.6,202.8 585.2,197.4 592.4,202.4" fill="#2d8af4" stroke="#2d8af4" stroke-width="1"/><polygon points="592.4,202.4 585.2,197.4 598.8,192.0 606.0,197.0" fill="#2d8df2" stroke="#2d8df2" stroke-width="1"/><polygon points="606.0,197.0 598.8,192.0 612.4,186.6 619.6,191.6" fill="#2c8ff0" stroke="#2c8ff0" stroke-width="1"/><polygon points="619.6,191.6 612.4,186.6 626.0,181.2 633.2,186.2" fill="#2b92ef" stroke="#2b92ef" stroke-width="1"/><polygon points="633.2,186.2 626.0,181.2 639.6,175.8 646.8,180.8" fill="#2994ed" stroke="#2994ed" stroke-width="1"/><polygon points="646.8,180.8 639.6,175.8 653.2,170.4 660.5,175.4" fill="#2896eb" stroke="#2896eb" stroke-width="1"/><polygon points="326.5,300.2 319.2,295.5 332.9,290.0 340.1,294.8" fill="#4854f5" stroke="#4854f5" stroke-width="1"/><polygon points="340.1,294.8 332.9,290.0 346.5,284.6 353.7,289.4" fill="#4758f8" stroke="#4758f8" stroke-width="1"/><polygon points="353.7,289.4 346.5,284.6 360.1,279.2 367.3,284.0" fill="#475cfa" stroke="#475cfa" stroke-width="1"/><polygon points="367.3,284.0 360.1,279.2 373.7,273.8 381.0,278.6" fill="#465ffb" stroke="#465ffb" stroke-width="1"/><polygon points="381.0,278.6 373.7,273.8 387.3,268.3 394.6,273.2" fill="#4562fc" stroke="#4562fc" stroke-width="1"/><polygon points="394.6,273.2 387.3,268.3 400.9,262.9 408.2,267.8" fill="#4466fd" stroke="#4466fd" stroke-width="1"/><polygon points="408.2,267.8 400.9,262.9 414.6,257.5 421.8,262.4" fill="#4269fe" stroke="#4269fe" stroke-width="1"/><polygon points="421.8,262.4 414.6,257.5 428.2,252.1 435.4,257.0" fill="#406cfe" stroke="#406cfe" stroke-width="1"/><polygon points="435.4,257.0 428.2,252.1 441.8,246.7 449.0,251.5" fill="#3e70ff" stroke="#3e70ff" stroke-width="1"/><polygon points="449.0,251.5 441.8,246.7 455.4,241.2 462.6,246.1" fill="#3b73fe" stroke="#3b73fe" stroke-width="1"/><polygon points="462.6,246.1 455.4,241.2 469.0,235.8 476.3,240.7" fill="#3776fe" stroke="#3776fe" stroke-width="1"/><polygon points="476.3,240.7 469.0,235.8 482.6,230.4 489.9,235.3" fill="#3479fd" stroke="#3479fd" stroke-width="1"/><polygon points="489.9,235.3 482.6,230.4 496.3,225.0 503.5,229.9" fill="#327cfc" stroke="#327cfc" stroke-width="1"/><polygon points="503.5,229.9 496.3,225.0 509.9,219.5 517.1,224.5" fill="#307ffb" stroke="#307ffb" stroke-width="1"/><polygon points="517.1,224.5 509.9,219.5 523.5,214.1 530.7,219.1" fill="#2f82f9" stroke="#2f82f9" stroke-width="1"/><polygon points="530.7,219.1 523.5,214.1 537.1,208.7 544.3,213.7" fill="#2e85f8" stroke="#2e85f8" stroke-width="1"/><polygon points="544.3,213.7 537.1,208.7 550.7,203.3 557.9,208.3" fill="#2d88f6" stroke="#2d88f6" stroke-width="1"/><polygon points="557.9,208.3 550.7,203.3 564.3,197.8 571.6,202.8" fill="#2d8af4" stroke="#2d8af4" stroke-width="1"/><polygon points="571.6,202.8 564.3,197.8 578.0,192.4 585.2,197.4" fill="#2d8df2" stroke="#2d8df2" stroke-width="1"/><polygon points="585.2,197.4 578.0,192.4 591.6,187.0 598.8,192.0" fill="#2c8ff0" stroke="#2c8ff0" stroke-width="1"/><polygon points="598.8,192.0 591.6,187.0 605.2,181.6 612.4,186.6" fill="#2b92ee" stroke="#2b92ee" stroke-width="1"/><polygon points="612.4,186.6 605.2,181.6 618.8,176.2 626.0,181.2" fill="#2994ed" stroke="#2994ed" stroke-width="1"/><polygon points="626.0,181.2 618.8,176.2 632.4,170.7 639.6,175.8" fill="#2796eb" stroke="#2796eb" stroke-width="1"/><polygon points="639.6,175.8 632.4,170.7 646.0,165.3 653.2,170.4" fill="#2699e9" stroke="#2699e9" stroke-width="1"/><polygon points="319.2,295.5 312.0,290.7 325.6,285.2 332.9,290.0" fill="#4854f5" stroke="#4854f5" stroke-width="1"/><polygon points="332.9,290.0 325.6,285.2 339.2,279.8 346.5,284.6" fill="#4758f8" stroke="#4758f8" stroke-width="1"/><polygon points="346.5,284.6 339.2,279.8 352.9,274.4 360.1,279.2" fill="#475cfa" stroke="#475cfa" stroke-width="1"/><polygon points="360.1,279.2 352.9,274.4 366.5,268.9 373.7,273.8" fill="#4660fb" stroke="#4660fb" stroke-width="1"/><polygon points="373.7,273.8 366.5,268.9 380.1,263.5 387.3,268.3" fill="#4563fd" stroke="#4563fd" stroke-width="1"/><polygon points="387.3,268.3 380.1,263.5 393.7,258.1 400.9,262.9" fill="#4367fd" stroke="#4367fd" stroke-width="1"/><polygon points="400.9,262.9 393.7,258.1 407.3,252.6 414.6,257.5" fill="#426afe" stroke="#426afe" stroke-width="1"/><polygon points="414.6,257.5 407.3,252.6 420.9,247.2 428.2,252.1" fill="#3f6efe" stroke="#3f6efe" stroke-width="1"/><polygon points="428.2,252.1 420.9,247.2 434.6,241.8 441.8,246.7" fill="#3c71ff" stroke="#3c71ff" stroke-width="1"/><polygon points="441.8,246.7 434.6,241.8 448.2,236.3 455.4,241.2" fill="#3974fe" stroke="#3974fe" stroke-width="1"/><polygon points="455.4,241.2 448.2,236.3 461.8,230.9 469.0,235.8" fill="#3678fe" stroke="#3678fe" stroke-width="1"/><polygon points="469.0,235.8 461.8,230.9 475.4,225.5 482.6,230.4" fill="#337bfc" stroke="#337bfc" stroke-width="1"/><polygon points="482.6,230.4 475.4,225.5 489.0,220.0 496.3,225.0" fill="#317efb" stroke="#317efb" stroke-width="1"/><polygon points="496.3,225.0 489.0,220.0 502.7,214.6 509.9,219.5" fill="#2f81fa" stroke="#2f81fa" stroke-width="1"/><polygon points="509.9,219.5 502.7,214.6 516.3,209.2 523.5,214.1" fill="#2e84f8" stroke="#2e84f8" stroke-width="1"/><polygon points="523.5,214.1 516.3,209.2 529.9,203.7 537.1,208.7" fill="#2e87f7" stroke="#2e87f7" stroke-width="1"/><polygon points="537.1,208.7 529.9,203.7 543.5,198.3 550.7,203.3" fill="#2d8af5" stroke="#2d8af5" stroke-width="1"/><polygon points="550.7,203.3 543.5,198.3 557.1,192.9 564.3,197.8" fill="#2d8cf3" stroke="#2d8cf3" stroke-width="1"/><polygon points="564.3,197.8 557.1,192.9 570.7,187.4 578.0,192.4" fill="#2c8ff1" stroke="#2c8ff1" stroke-width="1"/><polygon points="578.0,192.4 570.7,187.4 584.4,182.0 591.6,187.0" fill="#2b92ef" stroke="#2b92ef" stroke-width="1"/><polygon points="591.6,187.0 584.4,182.0 598.0,176.6 605.2,181.6" fill="#2994ed" stroke="#2994ed" stroke-width="1"/><polygon points="605.2,181.6 598.0,176.6 611.6,171.1 618.8,176.2" fill="#2797eb" stroke="#2797eb" stroke-width="1"/><polygon points="618.8,176.2 611.6,171.1 625.2,165.7 632.4,170.7" fill="#2699e9" stroke="#2699e9" stroke-width="1"/><polygon points="632.4,170.7 625.2,165.7 638.8,160.2 646.0,165.3" fill="#259be8" stroke="#259be8" stroke-width="1"/><polygon points="312.0,290.7 304.8,285.9 318.4,280.4 325.6,285.2" fill="#4854f5" stroke="#4854f5" stroke-width="1"/><polygon points="325.6,285.2 318.4,280.4 332.0,275.0 339.2,279.8" fill="#4758f8" stroke="#4758f8" stroke-width="1"/><polygon points="339.2,279.8 332.0,275.0 345.6,269.5 352.9,274.4" fill="#475cfa" stroke="#475cfa" stroke-width="1"/><polygon points="352.9,274.4 345.6,269.5 359.2,264.1 366.5,268.9" fill="#4660fc" stroke="#4660fc" stroke-width="1"/><polygon points="366.5,268.9 359.2,264.1 372.8,258.6 380.1,263.5" fill="#4564fd" stroke="#4564fd" stroke-width="1"/><polygon points="380.1,263.5 372.8,258.6 386.5,253.2 393.7,258.1" fill="#4368fd" stroke="#4368fd" stroke-width="1"/><polygon points="393.7,258.1 386.5,253.2 400.1,247.8 407.3,252.6" fill="#416bfe" stroke="#416bfe" stroke-width="1"/><polygon points="407.3,252.6 400.1,247.8 413.7,242.3 420.9,247.2" fill="#3f6fff" stroke="#3f6fff" stroke-width="1"/><polygon points="420.9,247.2 413.7,242.3 427.3,236.9 434.6,241.8" fill="#3b72fe" stroke="#3b72fe" stroke-width="1"/><polygon points="434.6,241.8 427.3,236.9 440.9,231.4 448.2,236.3" fill="#3876fe" stroke="#3876fe" stroke-width="1"/><polygon points="448.2,236.3 440.9,231.4 454.6,226.0 461.8,230.9" fill="#3479fd" stroke="#3479fd" stroke-width="1"/><polygon points="461.8,230.9 454.6,226.0 468.2,220.5 475.4,225.5" fill="#317dfc" stroke="#317dfc" stroke-width="1"/><polygon points="475.4,225.5 468.2,220.5 481.8,215.1 489.0,220.0" fill="#3080fa" stroke="#3080fa" stroke-width="1"/><polygon points="489.0,220.0 481.8,215.1 495.4,209.6 502.7,214.6" fill="#2e83f9" stroke="#2e83f9" stroke-width="1"/><polygon points="502.7,214.6 495.4,209.6 509.0,204.2 516.3,209.2" fill="#2e86f7" stroke="#2e86f7" stroke-width="1"/><polygon points="516.3,209.2 509.0,204.2 522.7,198.8 529.9,203.7" fill="#2d89f5" stroke="#2d89f5" stroke-width="1"/><polygon points="529.9,203.7 522.7,198.8 536.3,193.3 543.5,198.3" fill="#2d8cf3" stroke="#2d8cf3" stroke-width="1"/><polygon points="543.5,198.3 536.3,193.3 549.9,187.9 557.1,192.9" fill="#2c8ef1" stroke="#2c8ef1" stroke-width="1"/><polygon points="557.1,192.9 549.9,187.9 563.5,182.4 570.7,187.4" fill="#2b91ef" stroke="#2b91ef" stroke-width="1"/><polygon points="570.7,187.4 563.5,182.4 577.1,177.0 584.4,182.0" fill="#2994ed" stroke="#2994ed" stroke-width="1"/><polygon points="584.4,182.0 577.1,177.0 590.8,171.5 598.0,176.6" fill="#2796eb" stroke="#2796eb" stroke-width="1"/><polygon points="598.0,176.6 590.8,171.5 604.4,166.1 611.6,171.1" fill="#2699e9" stroke="#2699e9" stroke-width="1"/><polygon points="611.6,171.1 604.4,166.1 618.0,160.6 625.2,165.7" fill="#259be8" stroke="#259be8" stroke-width="1"/><polygon points="625.2,165.7 618.0,160.6 631.6,155.2 638.8,160.2" fill="#249ee6" stroke="#249ee6" stroke-width="1"/><polygon points="304.8,285.9 297.5,281.1 311.1,275.6 318.4,280.4" fill="#4854f5" stroke="#4854f5" stroke-width="1"/><polygon points="318.4,280.4 311.1,275.6 324.7,270.2 332.0,275.0" fill="#4759f8" stroke="#4759f8" stroke-width="1"/><polygon points="332.0,275.0 324.7,270.2 338.4,264.7 345.6,269.5" fill="#465dfa" stroke="#465dfa" stroke-width="1"/><polygon points="345.6,269.5 338.4,264.7 352.0,259.3 359.2,264.1" fill="#4561fc" stroke="#4561fc" stroke-width="1"/><polygon points="359.2,264.1 352.0,259.3 365.6,253.8 372.8,258.6" fill="#4465fd" stroke="#4465fd" stroke-width="1"/><polygon points="372.8,258.6 365.6,253.8 379.2,248.3 386.5,253.2" fill="#4368fe" stroke="#4368fe" stroke-width="1"/><polygon points="386.5,253.2 379.2,248.3 392.9,242.9 400.1,247.8" fill="#406cfe" stroke="#406cfe" stroke-width="1"/><polygon points="400.1,247.8 392.9,242.9 406.5,237.4 413.7,242.3" fill="#3d70ff" stroke="#3d70ff" stroke-width="1"/><polygon points="413.7,242.3 406.5,237.4 420.1,232.0 427.3,236.9" fill="#3a74fe" stroke="#3a74fe" stroke-width="1"/><polygon points="427.3,236.9 420.1,232.0 433.7,226.5 440.9,231.4" fill="#3677fe" stroke="#3677fe" stroke-width="1"/><polygon points="440.9,231.4 433.7,226.5 447.3,221.1 454.6,226.0" fill="#337bfc" stroke="#337bfc" stroke-width="1"/><polygon points="454.6,226.0 447.3,221.1 461.0,215.6 468.2,220.5" fill="#307efb" stroke="#307efb" stroke-width="1"/><polygon points="468.2,220.5 461.0,215.6 474.6,210.1 481.8,215.1" fill="#2f82fa" stroke="#2f82fa" stroke-width="1"/><polygon points="481.8,215.1 474.6,210.1 488.2,204.7 495.4,209.6" fill="#2e85f8" stroke="#2e85f8" stroke-width="1"/><polygon points="495.4,209.6 488.2,204.7 501.8,199.2 509.0,204.2" fill="#2d88f6" stroke="#2d88f6" stroke-width="1"/><polygon points="509.0,204.2 501.8,199.2 515.4,193.8 522.7,198.8" fill="#2d8bf4" stroke="#2d8bf4" stroke-width="1"/><polygon points="522.7,198.8 515.4,193.8 529.1,188.3 536.3,193.3" fill="#2c8ef2" stroke="#2c8ef2" stroke-width="1"/><polygon points="536.3,193.3 529.1,188.3 542.7,182.9 549.9,187.9" fill="#2b91ef" stroke="#2b91ef" stroke-width="1"/><polygon points="549.9,187.9 542.7,182.9 556.3,177.4 563.5,182.4" fill="#2a93ed" stroke="#2a93ed" stroke-width="1"/><polygon points="563.5,182.4 556.3,177.4 569.9,172.0 577.1,177.0" fill="#2896eb" stroke="#2896eb" stroke-width="1"/><polygon points="577.1,177.0 569.9,172.0 583.6,166.5 590.8,171.5" fill="#2699ea" stroke="#2699ea" stroke-width="1"/><polygon points="590.8,171.5 583.6,166.5 597.2,161.0 604.4,166.1" fill="#259be8" stroke="#259be8" stroke-width="1"/><polygon points="604.4,166.1 597.2,161.0 610.8,155.6 618.0,160.6" fill="#249ee6" stroke="#249ee6" stroke-width="1"/><polygon points="618.0,160.6 610.8,155.6 624.4,150.1 631.6,155.2" fill="#23a0e5" stroke="#23a0e5" stroke-width="1"/><polygon points="297.5,281.1 290.2,276.3 303.9,270.8 311.1,275.6" fill="#4854f6" stroke="#4854f6" stroke-width="1"/><polygon points="311.1,275.6 303.9,270.8 317.5,265.4 324.7,270.2" fill="#4759f8" stroke="#4759f8" stroke-width="1"/><polygon points="324.7,270.2 317.5,265.4 331.1,259.9 338.4,264.7" fill="#465dfb" stroke="#465dfb" stroke-width="1"/><polygon points="338.4,264.7 331.1,259.9 344.7,254.4 352.0,259.3" fill="#4561fc" stroke="#4561fc" stroke-width="1"/><polygon points="352.0,259.3 344.7,254.4 358.4,249.0 365.6,253.8" fill="#4465fd" stroke="#4465fd" stroke-width="1"/><polygon points="365.6,253.8 358.4,249.0 372.0,243.5 379.2,248.3" fill="#4269fe" stroke="#4269fe" stroke-width="1"/><polygon points="379.2,248.3 372.0,243.5 385.6,238.0 392.9,242.9" fill="#406dfe" stroke="#406dfe" stroke-width="1"/><polygon points="392.9,242.9 385.6,238.0 399.2,232.5 406.5,237.4" fill="#3c71ff" stroke="#3c71ff" stroke-width="1"/><polygon points="406.5,237.4 399.2,232.5 412.9,227.1 420.1,232.0" fill="#3975fe" stroke="#3975fe" stroke-width="1"/><polygon points="420.1,232.0 412.9,227.1 426.5,221.6 433.7,226.5" fill="#3579fd" stroke="#3579fd" stroke-width="1"/><polygon points="433.7,226.5 426.5,221.6 440.1,216.1 447.3,221.1" fill="#327dfc" stroke="#327dfc" stroke-width="1"/><polygon points="447.3,221.1 440.1,216.1 453.7,210.7 461.0,215.6" fill="#3080fa" stroke="#3080fa" stroke-width="1"/><polygon points="461.0,215.6 453.7,210.7 467.4,205.2 474.6,210.1" fill="#2e83f9" stroke="#2e83f9" stroke-width="1"/><polygon points="474.6,210.1 467.4,205.2 481.0,199.7 488.2,204.7" fill="#2e87f7" stroke="#2e87f7" stroke-width="1"/><polygon points="488.2,204.7 481.0,199.7 494.6,194.3 501.8,199.2" fill="#2d8af5" stroke="#2d8af5" stroke-width="1"/><polygon points="501.8,199.2 494.6,194.3 508.2,188.8 515.4,193.8" fill="#2d8df2" stroke="#2d8df2" stroke-width="1"/><polygon points="515.4,193.8 508.2,188.8 521.8,183.3 529.1,188.3" fill="#2c90f0" stroke="#2c90f0" stroke-width="1"/><polygon points="529.1,188.3 521.8,183.3 535.5,177.9 542.7,182.9" fill="#2a93ee" stroke="#2a93ee" stroke-width="1"/><polygon points="542.7,182.9 535.5,177.9 549.1,172.4 556.3,177.4" fill="#2895ec" stroke="#2895ec" stroke-width="1"/><polygon points="556.3,177.4 549.1,172.4 562.7,166.9 569.9,172.0" fill="#2798ea" stroke="#2798ea" stroke-width="1"/><polygon points="569.9,172.0 562.7,166.9 576.3,161.5 583.6,166.5" fill="#259be8" stroke="#259be8" stroke-width="1"/><polygon points="583.6,166.5 576.3,161.5 590.0,156.0 597.2,161.0" fill="#249de6" stroke="#249de6" stroke-width="1"/><polygon points="597.2,161.0 590.0,156.0 603.6,150.5 610.8,155.6" fill="#23a0e5" stroke="#23a0e5" stroke-width="1"/><polygon points="610.8,155.6 603.6,150.5 617.2,145.1 624.4,150.1" fill="#21a2e4" stroke="#21a2e4" stroke-width="1"/><polygon points="290.2,276.3 283.0,271.5 296.6,266.0 303.9,270.8" fill="#4854f6" stroke="#4854f6" stroke-width="1"/><polygon points="303.9,270.8 296.6,266.0 310.2,260.5 317.5,265.4" fill="#4759f8" stroke="#4759f8" stroke-width="1"/><polygon points="317.5,265.4 310.2,260.5 323.9,255.1 331.1,259.9" fill="#465efb" stroke="#465efb" stroke-width="1"/><polygon points="331.1,259.9 323.9,255.1 337.5,249.6 344.7,254.4" fill="#4562fc" stroke="#4562fc" stroke-width="1"/><polygon points="344.7,254.4 337.5,249.6 351.1,244.1 358.4,249.0" fill="#4466fd" stroke="#4466fd" stroke-width="1"/><polygon points="358.4,249.0 351.1,244.1 364.8,238.6 372.0,243.5" fill="#426afe" stroke="#426afe" stroke-width="1"/><polygon points="372.0,243.5 364.8,238.6 378.4,233.1 385.6,238.0" fill="#3f6eff" stroke="#3f6eff" stroke-width="1"/><polygon points="385.6,238.0 378.4,233.1 392.0,227.7 399.2,232.5" fill="#3b72fe" stroke="#3b72fe" stroke-width="1"/><polygon points="399.2,232.5 392.0,227.7 405.6,222.2 412.9,227.1" fill="#3776fe" stroke="#3776fe" stroke-width="1"/><polygon points="412.9,227.1 405.6,222.2 419.2,216.7 426.5,221.6" fill="#337afd" stroke="#337afd" stroke-width="1"/><polygon points="426.5,221.6 419.2,216.7 432.9,211.2 440.1,216.1" fill="#317efb" stroke="#317efb" stroke-width="1"/><polygon points="440.1,216.1 432.9,211.2 446.5,205.8 453.7,210.7" fill="#2f82fa" stroke="#2f82fa" stroke-width="1"/><polygon points="453.7,210.7 446.5,205.8 460.1,200.3 467.4,205.2" fill="#2e85f8" stroke="#2e85f8" stroke-width="1"/><polygon points="467.4,205.2 460.1,200.3 473.8,194.8 481.0,199.7" fill="#2d88f6" stroke="#2d88f6" stroke-width="1"/><polygon points="481.0,199.7 473.8,194.8 487.4,189.3 494.6,194.3" fill="#2d8bf3" stroke="#2d8bf3" stroke-width="1"/><polygon points="494.6,194.3 487.4,189.3 501.0,183.8 508.2,188.8" fill="#2c8ff1" stroke="#2c8ff1" stroke-width="1"/><polygon points="508.2,188.8 501.0,183.8 514.6,178.4 521.8,183.3" fill="#2b92ef" stroke="#2b92ef" stroke-width="1"/><polygon points="521.8,183.3 514.6,178.4 528.2,172.9 535.5,177.9" fill="#2995ec" stroke="#2995ec" stroke-width="1"/><polygon points="535.5,177.9 528.2,172.9 541.9,167.4 549.1,172.4" fill="#2797ea" stroke="#2797ea" stroke-width="1"/><polygon points="549.1,172.4 541.9,167.4 555.5,161.9 562.7,166.9" fill="#269ae8" stroke="#269ae8" stroke-width="1"/><polygon points="562.7,166.9 555.5,161.9 569.1,156.4 576.3,161.5" fill="#259de7" stroke="#259de7" stroke-width="1"/><polygon points="576.3,161.5 569.1,156.4 582.8,151.0 590.0,156.0" fill="#23a0e5" stroke="#23a0e5" stroke-width="1"/><polygon points="590.0,156.0 582.8,151.0 596.4,145.5 603.6,150.5" fill="#22a2e4" stroke="#22a2e4" stroke-width="1"/><polygon points="603.6,150.5 596.4,145.5 610.0,140.0 617.2,145.1" fill="#20a5e2" stroke="#20a5e2" stroke-width="1"/></g>
<polygon points="497.0,181.0 507.0,176.0 517.0,185.0 507.0,190.0" fill="#20a4e3" />
<path d="M498.0 183.0L507.0 190.0L517.0 186.0" fill="none" stroke="#070820" stroke-width="2" stroke-linejoin="round"/>
<polygon points="533.0,195.0 548.0,188.0 557.0,196.0 542.0,201.0" fill="#20a4e3" />
<path d="M535.0 197.0L542.0 202.0L557.0 197.0" fill="none" stroke="#070820" stroke-width="2" stroke-linejoin="round"/>
<polygon points="581.0,292.0 588.0,266.0 604.0,256.0 630.0,273.0 617.0,280.0 620.0,292.0 632.0,306.0 614.0,313.0" fill="#2c8ff1" />
<path d="M583.0 296.0L615.0 313.5L630.0 306.0" fill="none" stroke="#070820" stroke-width="2.2" stroke-linejoin="round"/>
<path d="M596 279L616 273" stroke="#070820" stroke-width="1.6"/>
<path d="M617 291L627 287" stroke="#070820" stroke-width="1.6"/>
<polygon points="716.0,239.0 738.0,228.0 758.0,243.0 737.0,254.0" fill="#249fe6" />
<path d="M718.0 243.0L737.0 255.0L758.0 246.0" fill="none" stroke="#070820" stroke-width="3" stroke-linejoin="round"/>
<polygon points="693.0,252.0 713.0,243.0 729.0,258.0 709.0,267.0" fill="#249fe6" />
<path d="M696.0 259.0L712.0 271.0L728.0 264.0" fill="none" stroke="#070820" stroke-width="4" stroke-linejoin="round"/>
<polygon points="470.0,264.0 476.0,261.0 482.0,266.0 476.0,269.0" fill="#2d8cf3" />
<path d="M469.0 266.0L477.0 270.0L482.0 268.0" fill="none" stroke="#070820" stroke-width="1.5" stroke-linejoin="round"/>
<polygon points="473.0,280.0 482.0,276.0 491.0,281.0 482.0,286.0" fill="#2d8cf3" />
<path d="M472.0 281.0L482.0 287.0L491.0 283.0" fill="none" stroke="#070820" stroke-width="1.6" stroke-linejoin="round"/>
<path d="M512 260L526 256" stroke="#070820" stroke-width="1.4" stroke-linecap="round"/>
<path d="M420 289L434 293" stroke="#070820" stroke-width="1.4" stroke-linecap="round"/>
<path d="M305 273L325 276" stroke="#070820" stroke-width="1.4" stroke-linecap="round"/>
<path d="M362 297L372 302" stroke="#070820" stroke-width="1.4" stroke-linecap="round"/>
<path d="M541 225l1 0" stroke="#070820" stroke-width="1.4" stroke-linecap="round"/>
<path d="M628 222l2 1" stroke="#070820" stroke-width="1.4" stroke-linecap="round"/>
<path d="M662 221l2 1" stroke="#070820" stroke-width="1.4" stroke-linecap="round"/>
<path d="M653 246l2 1" stroke="#070820" stroke-width="1.4" stroke-linecap="round"/>
<path d="M668 245l2 0" stroke="#070820" stroke-width="1.4" stroke-linecap="round"/>
<path d="M690 247l2 0" stroke="#070820" stroke-width="1.4" stroke-linecap="round"/>
<path d="M505 345l10 -3" stroke="#070820" stroke-width="1.4" stroke-linecap="round"/>
<path d="M360 301l3 1" stroke="#070820" stroke-width="1.4" stroke-linecap="round"/>
<path d="M527 160L616 228" stroke="#05b6ce" stroke-width="1.2" opacity="0.8"/>
<circle cx="311.0" cy="283.4" r="2.0" fill="#2a86e2"/>
<circle cx="455.0" cy="372.8" r="4.2" fill="#2a86e2"/>
<circle cx="356.0" cy="284.4" r="2.0" fill="#268cde"/>
<circle cx="385.0" cy="332.6" r="3.1" fill="#268cde"/>
<circle cx="390.0" cy="240.6" r="3.1" fill="#268cde"/>
<circle cx="465.0" cy="372.6" r="3.1" fill="#268cde"/>
<circle cx="466.0" cy="198.5" r="2.6" fill="#268cde"/>
<circle cx="292.0" cy="262.4" r="2.0" fill="#2591db"/>
<circle cx="352.0" cy="305.6" r="3.1" fill="#2591db"/>
<circle cx="372.0" cy="268.5" r="2.6" fill="#2591db"/>
<circle cx="378.0" cy="238.5" r="2.6" fill="#2591db"/>
<circle cx="392.0" cy="235.7" r="3.7" fill="#2591db"/>
<circle cx="395.0" cy="336.7" r="3.7" fill="#2591db"/>
<circle cx="410.0" cy="236.8" r="4.2" fill="#2591db"/>
<circle cx="410.0" cy="268.9" r="4.8" fill="#2591db"/>
<circle cx="415.0" cy="245.9" r="4.8" fill="#2591db"/>
<circle cx="425.0" cy="270.8" r="4.2" fill="#2591db"/>
<circle cx="430.0" cy="348.8" r="4.2" fill="#2591db"/>
<circle cx="445.0" cy="325.9" r="4.8" fill="#2591db"/>
<circle cx="460.0" cy="255.7" r="3.7" fill="#2591db"/>
<circle cx="472.0" cy="193.6" r="3.1" fill="#2591db"/>
<circle cx="485.0" cy="368.7" r="3.7" fill="#2591db"/>
<circle cx="500.0" cy="298.8" r="4.2" fill="#2591db"/>
<circle cx="779.0" cy="257.4" r="2.0" fill="#2591db"/>
<circle cx="324.0" cy="258.4" r="2.0" fill="#1f98d6"/>
<circle cx="368.0" cy="268.7" r="3.7" fill="#1f98d6"/>
<circle cx="372.0" cy="305.7" r="3.7" fill="#1f98d6"/>
<circle cx="379.0" cy="230.5" r="2.6" fill="#1f98d6"/>
<circle cx="395.0" cy="230.8" r="4.2" fill="#1f98d6"/>
<circle cx="410.0" cy="340.9" r="4.8" fill="#1f98d6"/>
<circle cx="412.0" cy="300.6" r="3.1" fill="#1f98d6"/>
<circle cx="420.0" cy="343.7" r="3.7" fill="#1f98d6"/>
<circle cx="430.0" cy="240.6" r="3.1" fill="#1f98d6"/>
<circle cx="437.0" cy="352.7" r="3.7" fill="#1f98d6"/>
<circle cx="445.0" cy="355.9" r="4.8" fill="#1f98d6"/>
<circle cx="455.0" cy="236.6" r="3.1" fill="#1f98d6"/>
<circle cx="460.0" cy="315.8" r="4.2" fill="#1f98d6"/>
<circle cx="460.0" cy="360.8" r="4.2" fill="#1f98d6"/>
<circle cx="467.0" cy="250.6" r="3.1" fill="#1f98d6"/>
<circle cx="470.0" cy="363.0" r="5.3" fill="#1f98d6"/>
<circle cx="480.0" cy="187.5" r="2.6" fill="#1f98d6"/>
<circle cx="480.0" cy="310.9" r="4.8" fill="#1f98d6"/>
<circle cx="485.0" cy="290.9" r="4.8" fill="#1f98d6"/>
<circle cx="490.0" cy="318.9" r="4.8" fill="#1f98d6"/>
<circle cx="500.0" cy="355.7" r="3.7" fill="#1f98d6"/>
<circle cx="505.0" cy="275.7" r="3.7" fill="#1f98d6"/>
<circle cx="515.0" cy="352.6" r="3.1" fill="#1f98d6"/>
<circle cx="523.0" cy="285.8" r="4.2" fill="#1f98d6"/>
<circle cx="540.0" cy="255.7" r="3.7" fill="#1f98d6"/>
<circle cx="545.0" cy="220.6" r="3.1" fill="#1f98d6"/>
<circle cx="548.0" cy="262.8" r="4.2" fill="#1f98d6"/>
<circle cx="555.0" cy="165.7" r="3.7" fill="#1f98d6"/>
<circle cx="560.0" cy="292.9" r="4.8" fill="#1f98d6"/>
<circle cx="570.0" cy="173.9" r="4.8" fill="#1f98d6"/>
<circle cx="575.0" cy="245.9" r="4.8" fill="#1f98d6"/>
<circle cx="597.0" cy="218.6" r="3.1" fill="#1f98d6"/>
<circle cx="613.0" cy="252.7" r="3.7" fill="#1f98d6"/>
<circle cx="620.0" cy="175.7" r="3.7" fill="#1f98d6"/>
<circle cx="635.0" cy="290.7" r="3.7" fill="#1f98d6"/>
<circle cx="688.0" cy="183.4" r="2.0" fill="#1f98d6"/>
<circle cx="343.0" cy="300.7" r="3.9" fill="#189fd0"/>
<circle cx="396.0" cy="225.7" r="3.9" fill="#189fd0"/>
<circle cx="420.0" cy="225.8" r="4.5" fill="#189fd0"/>
<circle cx="470.0" cy="321.1" r="6.3" fill="#189fd0"/>
<circle cx="492.0" cy="360.6" r="3.3" fill="#189fd0"/>
<circle cx="580.0" cy="178.8" r="4.5" fill="#189fd0"/>
<circle cx="615.0" cy="182.7" r="3.9" fill="#189fd0"/>
<circle cx="768.0" cy="250.6" r="3.3" fill="#189fd0"/>
<circle cx="295.0" cy="255.5" r="2.9" fill="#0ea3ca"/>
<circle cx="315.0" cy="245.4" r="2.2" fill="#0ea3ca"/>
<circle cx="350.0" cy="265.6" r="3.5" fill="#0ea3ca"/>
<circle cx="360.0" cy="292.6" r="3.5" fill="#0ea3ca"/>
<circle cx="365.0" cy="258.8" r="4.7" fill="#0ea3ca"/>
<circle cx="365.0" cy="260.7" r="4.1" fill="#0ea3ca"/>
<circle cx="382.0" cy="222.4" r="2.2" fill="#0ea3ca"/>
<circle cx="390.0" cy="268.7" r="4.1" fill="#0ea3ca"/>
<circle cx="400.0" cy="218.6" r="3.5" fill="#0ea3ca"/>
<circle cx="403.0" cy="292.8" r="4.7" fill="#0ea3ca"/>
<circle cx="405.0" cy="225.7" r="4.1" fill="#0ea3ca"/>
<circle cx="440.0" cy="235.8" r="4.7" fill="#0ea3ca"/>
<circle cx="462.0" cy="213.6" r="3.5" fill="#0ea3ca"/>
<circle cx="478.0" cy="355.6" r="3.5" fill="#0ea3ca"/>
<circle cx="515.0" cy="268.8" r="4.7" fill="#0ea3ca"/>
<circle cx="560.0" cy="170.8" r="4.7" fill="#0ea3ca"/>
<circle cx="588.0" cy="320.6" r="3.5" fill="#0ea3ca"/>
<circle cx="590.0" cy="172.8" r="4.7" fill="#0ea3ca"/>
<circle cx="600.0" cy="174.8" r="4.7" fill="#0ea3ca"/>
<circle cx="605.0" cy="205.7" r="4.1" fill="#0ea3ca"/>
<circle cx="610.0" cy="222.7" r="4.1" fill="#0ea3ca"/>
<circle cx="625.0" cy="226.6" r="3.5" fill="#0ea3ca"/>
<circle cx="635.0" cy="178.7" r="4.1" fill="#0ea3ca"/>
<circle cx="645.0" cy="170.6" r="3.5" fill="#0ea3ca"/>
<circle cx="652.0" cy="197.7" r="4.1" fill="#0ea3ca"/>
<circle cx="652.0" cy="215.7" r="4.1" fill="#0ea3ca"/>
<circle cx="658.0" cy="250.6" r="3.5" fill="#0ea3ca"/>
<circle cx="703.0" cy="203.7" r="4.1" fill="#0ea3ca"/>
<circle cx="737.0" cy="220.5" r="2.9" fill="#0ea3ca"/>
<circle cx="777.0" cy="250.6" r="3.5" fill="#0ea3ca"/>
<circle cx="300.0" cy="248.4" r="2.5" fill="#0eabb8"/>
<circle cx="328.0" cy="248.6" r="3.8" fill="#0eabb8"/>
<circle cx="345.0" cy="265.9" r="5.9" fill="#0eabb8"/>
<circle cx="388.0" cy="275.8" r="5.2" fill="#0eabb8"/>
<circle cx="400.0" cy="214.5" r="3.1" fill="#0eabb8"/>
<circle cx="400.0" cy="282.6" r="3.8" fill="#0eabb8"/>
<circle cx="425.0" cy="215.7" r="4.5" fill="#0eabb8"/>
<circle cx="458.0" cy="222.6" r="3.8" fill="#0eabb8"/>
<circle cx="498.0" cy="262.9" r="5.9" fill="#0eabb8"/>
<circle cx="548.0" cy="160.6" r="3.8" fill="#0eabb8"/>
<circle cx="575.0" cy="160.9" r="5.9" fill="#0eabb8"/>
<circle cx="590.0" cy="195.6" r="3.8" fill="#0eabb8"/>
<circle cx="595.0" cy="205.7" r="4.5" fill="#0eabb8"/>
<circle cx="645.0" cy="238.7" r="4.5" fill="#0eabb8"/>
<circle cx="658.0" cy="168.5" r="3.1" fill="#0eabb8"/>
<circle cx="664.0" cy="197.6" r="3.8" fill="#0eabb8"/>
<circle cx="666.0" cy="167.5" r="3.1" fill="#0eabb8"/>
<circle cx="684.0" cy="282.6" r="3.8" fill="#0eabb8"/>
<circle cx="695.0" cy="225.7" r="4.5" fill="#0eabb8"/>
<circle cx="703.0" cy="228.6" r="3.8" fill="#0eabb8"/>
<circle cx="762.0" cy="240.5" r="3.1" fill="#0eabb8"/>
<circle cx="411.0" cy="216.9" r="6.2" fill="#22afad"/>
<circle cx="668.0" cy="287.7" r="4.8" fill="#22afad"/>
<circle cx="318.0" cy="240.5" r="3.4" fill="#2bb3a5"/>
<circle cx="342.0" cy="260.7" r="4.9" fill="#2bb3a5"/>
<circle cx="368.0" cy="250.6" r="4.2" fill="#2bb3a5"/>
<circle cx="448.0" cy="212.7" r="4.9" fill="#2bb3a5"/>
<circle cx="548.0" cy="152.6" r="4.2" fill="#2bb3a5"/>
<circle cx="555.0" cy="210.9" r="6.4" fill="#2bb3a5"/>
<circle cx="560.0" cy="157.7" r="4.9" fill="#2bb3a5"/>
<circle cx="620.0" cy="210.6" r="4.2" fill="#2bb3a5"/>
<circle cx="630.0" cy="162.7" r="4.9" fill="#2bb3a5"/>
<circle cx="636.0" cy="230.7" r="4.9" fill="#2bb3a5"/>
<circle cx="640.0" cy="280.8" r="5.7" fill="#2bb3a5"/>
<circle cx="655.0" cy="282.6" r="4.2" fill="#2bb3a5"/>
<circle cx="758.0" cy="228.4" r="2.7" fill="#2bb3a5"/>
<circle cx="772.0" cy="242.7" r="4.9" fill="#2bb3a5"/>
<circle cx="348.0" cy="292.8" r="5.9" fill="#32b59c"/>
<circle cx="380.0" cy="294.0" r="6.6" fill="#32b59c"/>
<circle cx="417.0" cy="206.6" r="4.3" fill="#32b59c"/>
<circle cx="502.0" cy="305.6" r="4.3" fill="#32b59c"/>
<circle cx="543.0" cy="209.5" r="3.6" fill="#32b59c"/>
<circle cx="587.0" cy="272.8" r="5.9" fill="#32b59c"/>
<circle cx="600.0" cy="192.6" r="4.3" fill="#32b59c"/>
<circle cx="630.0" cy="205.6" r="4.3" fill="#32b59c"/>
<circle cx="660.0" cy="240.7" r="5.1" fill="#32b59c"/>
<circle cx="697.0" cy="193.7" r="5.1" fill="#32b59c"/>
<circle cx="728.0" cy="214.6" r="4.3" fill="#32b59c"/>
<circle cx="322.0" cy="236.5" r="3.8" fill="#3eba8d"/>
<circle cx="338.0" cy="244.6" r="4.6" fill="#3eba8d"/>
<circle cx="615.0" cy="150.7" r="5.4" fill="#3eba8d"/>
<circle cx="645.0" cy="153.6" r="4.6" fill="#3eba8d"/>
<circle cx="704.0" cy="217.7" r="5.4" fill="#3eba8d"/>
<circle cx="738.0" cy="210.5" r="3.8" fill="#3eba8d"/>
<circle cx="391.0" cy="285.9" r="6.3" fill="#44bb88"/>
<circle cx="445.0" cy="226.7" r="5.5" fill="#44bb88"/>
<circle cx="673.0" cy="206.0" r="7.1" fill="#44bb88"/>
<circle cx="612.0" cy="160.8" r="5.7" fill="#53bd7c"/>
<circle cx="618.0" cy="212.8" r="5.7" fill="#53bd7c"/>
<circle cx="660.0" cy="187.8" r="5.7" fill="#53bd7c"/>
<circle cx="766.0" cy="234.6" r="4.8" fill="#53bd7c"/>
<circle cx="335.0" cy="240.6" r="5.0" fill="#62be6f"/>
<circle cx="550.0" cy="150.6" r="5.0" fill="#62be6f"/>
<circle cx="583.0" cy="152.6" r="5.0" fill="#62be6f"/>
<circle cx="597.0" cy="158.9" r="6.7" fill="#62be6f"/>
<circle cx="684.0" cy="268.6" r="5.0" fill="#62be6f"/>
<circle cx="710.0" cy="221.0" r="7.6" fill="#62be6f"/>
<circle cx="330.0" cy="235.7" r="5.1" fill="#72be62"/>
<circle cx="352.0" cy="248.7" r="5.1" fill="#72be62"/>
<circle cx="452.0" cy="204.7" r="5.1" fill="#72be62"/>
<circle cx="635.0" cy="152.8" r="6.0" fill="#72be62"/>
<circle cx="645.0" cy="150.7" r="5.1" fill="#72be62"/>
<circle cx="676.0" cy="272.7" r="5.1" fill="#72be62"/>
<circle cx="709.0" cy="190.8" r="6.0" fill="#72be62"/>
<circle cx="575.0" cy="148.8" r="6.3" fill="#8dbe4f"/>
<circle cx="604.0" cy="142.8" r="6.3" fill="#8dbe4f"/>
<circle cx="643.0" cy="222.7" r="5.4" fill="#8dbe4f"/>
<circle cx="760.0" cy="226.5" r="4.4" fill="#8dbe4f"/>
<circle cx="346.0" cy="252.8" r="6.4" fill="#95bd49"/>
<circle cx="606.0" cy="180.5" r="4.5" fill="#95bd49"/>
<circle cx="620.0" cy="118.5" r="4.5" fill="#95bd49"/>
<circle cx="665.0" cy="274.8" r="6.4" fill="#95bd49"/>
<circle cx="587.0" cy="144.8" r="6.6" fill="#a6bb3d"/>
<circle cx="595.0" cy="142.8" r="6.6" fill="#a6bb3d"/>
<circle cx="605.0" cy="181.6" r="4.6" fill="#a6bb3d"/>
<circle cx="607.0" cy="126.7" r="5.6" fill="#a6bb3d"/>
<circle cx="618.0" cy="140.7" r="5.6" fill="#a6bb3d"/>
<circle cx="716.0" cy="212.8" r="6.6" fill="#a6bb3d"/>
<circle cx="562.0" cy="147.7" r="5.8" fill="#b6b934"/>
<circle cx="565.0" cy="130.7" r="5.8" fill="#b6b934"/>
<circle cx="600.0" cy="124.7" r="5.8" fill="#b6b934"/>
<circle cx="632.0" cy="140.7" r="5.8" fill="#b6b934"/>
<circle cx="640.0" cy="144.9" r="7.9" fill="#b6b934"/>
<circle cx="641.0" cy="220.8" r="6.8" fill="#b6b934"/>
<circle cx="642.0" cy="267.8" r="6.8" fill="#b6b934"/>
<circle cx="662.0" cy="262.7" r="5.8" fill="#b6b934"/>
<circle cx="551.0" cy="142.8" r="6.8" fill="#c5b72e"/>
<circle cx="558.0" cy="138.7" r="5.8" fill="#c5b72e"/>
<circle cx="570.0" cy="136.8" r="6.8" fill="#c5b72e"/>
<circle cx="591.0" cy="116.4" r="3.7" fill="#c5b72e"/>
<circle cx="615.0" cy="128.7" r="5.8" fill="#c5b72e"/>
<circle cx="625.0" cy="132.9" r="7.9" fill="#c5b72e"/>
<circle cx="735.0" cy="202.4" r="3.7" fill="#c5b72e"/>
<circle cx="583.0" cy="120.6" r="4.7" fill="#d3b530"/>
<circle cx="673.0" cy="258.8" r="6.8" fill="#d3b530"/>
<circle cx="674.0" cy="183.8" r="6.8" fill="#d3b530"/>
<circle cx="577.0" cy="126.7" r="5.8" fill="#d9b432"/>
<circle cx="592.0" cy="130.7" r="5.8" fill="#d9b432"/>
<g stroke-linecap="round">
<path d="M454 379h0" stroke="#2d7ce9" stroke-width="2"/>
<path d="M452 378h0" stroke="#2d7ce9" stroke-width="4"/>
<path d="M451 377h0" stroke="#2c81e6" stroke-width="2"/>
<path d="M452 378h0M454 376h0M455 376h0M355 287h0" stroke="#2c81e6" stroke-width="3"/>
<path d="M412 253h0M468 202h0M452 373h0M311 283h0M355 288h0M466 377h0" stroke="#2b85e3" stroke-width="2"/>
<path d="M450 378h0M450 376h0M453 377h0M312 285h0M464 376h0M467 376h0M469 376h0" stroke="#2b85e3" stroke-width="3"/>
<path d="M468 201h0" stroke="#2b85e3" stroke-width="4"/>
<path d="M413 243h0M410 240h0M418 253h0M428 276h0M430 275h0M426 355h0M450 376h0M463 374h0M410 276h0M406 276h0M311 282h0M313 282h0M464 374h0" stroke="#278adf" stroke-width="2"/>
<path d="M389 240h0M406 243h0M389 243h0M416 250h0M472 198h0M463 261h0M499 303h0M498 304h0M419 275h0M422 277h0M382 334h0M435 354h0M447 374h0M448 371h0M448 370h0M458 373h0M449 376h0M458 378h0M454 373h0M460 369h0M451 378h0M441 333h0M449 333h0M314 283h0M395 343h0M469 372h0M464 375h0" stroke="#278adf" stroke-width="3"/>
<path d="M394 239h0M391 245h0M419 252h0M500 306h0M385 335h0M382 334h0M387 336h0M430 354h0M452 370h0M453 376h0M449 370h0M463 371h0M448 331h0M410 277h0M392 341h0M482 372h0" stroke="#278adf" stroke-width="4"/>
<path d="M375 272h0M373 270h0M379 239h0M382 240h0M377 242h0M394 238h0M390 241h0M394 238h0M394 238h0M415 239h0M410 240h0M414 239h0M407 237h0M414 238h0M394 242h0M390 243h0M392 239h0M414 253h0M464 198h0M506 303h0M494 300h0M421 273h0M383 337h0M385 331h0M386 337h0M460 367h0M461 375h0M448 376h0M449 372h0M455 366h0M457 374h0M441 328h0M450 328h0M450 332h0M353 310h0M355 308h0M347 307h0M404 270h0M415 271h0M313 286h0M309 285h0M356 284h0M461 367h0M485 371h0M488 372h0M464 377h0M465 368h0M463 374h0" stroke="#258edd" stroke-width="2"/>
<path d="M366 275h0M380 240h0M391 239h0M387 239h0M399 237h0M412 239h0M409 244h0M409 242h0M386 244h0M392 237h0M390 243h0M384 241h0M387 242h0M470 195h0M475 195h0M475 194h0M464 200h0M470 201h0M467 199h0M466 202h0M781 259h0M778 261h0M572 253h0M505 303h0M424 276h0M388 334h0M383 332h0M382 335h0M390 335h0M382 331h0M434 352h0M437 351h0M425 351h0M434 354h0M425 353h0M452 376h0M449 370h0M452 376h0M451 378h0M448 329h0M442 327h0M445 331h0M352 307h0M412 277h0M357 286h0M571 181h0M399 341h0M398 339h0M485 371h0M480 373h0M483 373h0M483 374h0M486 371h0M464 373h0M464 372h0" stroke="#258edd" stroke-width="3"/>
<path d="M291 262h0M408 239h0M421 250h0M466 195h0M466 199h0M547 270h0M500 302h0M385 336h0M448 330h0M405 274h0M309 280h0M480 371h0M482 371h0" stroke="#258edd" stroke-width="4"/>
<path d="M292 263h0M370 273h0M368 275h0M376 237h0M393 242h0M386 235h0M390 236h0M410 244h0M410 242h0M417 235h0M405 238h0M409 242h0M408 243h0M386 236h0M390 241h0M422 250h0M418 248h0M416 250h0M418 244h0M411 246h0M410 249h0M478 191h0M476 194h0M470 194h0M464 197h0M464 202h0M467 199h0M467 201h0M544 269h0M562 297h0M558 299h0M581 251h0M576 251h0M505 282h0M458 261h0M459 257h0M460 258h0M464 256h0M465 256h0M469 255h0M471 254h0M491 296h0M490 297h0M502 297h0M494 303h0M492 297h0M493 297h0M494 302h0M478 319h0M422 276h0M390 334h0M382 337h0M382 333h0M434 354h0M436 349h0M434 349h0M443 360h0M462 367h0M462 366h0M448 370h0M453 372h0M459 376h0M450 374h0M455 373h0M453 378h0M460 367h0M452 366h0M500 358h0M443 326h0M451 324h0M440 329h0M442 328h0M452 329h0M441 327h0M492 327h0M411 306h0M405 273h0M416 269h0M406 271h0M412 265h0M411 275h0M414 269h0M409 277h0M314 282h0M357 287h0M358 287h0M576 178h0M388 336h0M397 338h0M440 357h0M461 367h0M482 367h0M491 368h0M486 366h0M488 367h0M466 373h0M460 375h0M467 374h0M432 244h0" stroke="#2492da" stroke-width="2"/>
<path d="M289 264h0M372 266h0M375 232h0M375 242h0M386 234h0M396 236h0M417 238h0M415 242h0M407 239h0M389 243h0M396 241h0M393 243h0M385 239h0M392 235h0M393 240h0M389 241h0M422 247h0M416 246h0M423 247h0M411 251h0M418 251h0M455 240h0M455 241h0M477 193h0M462 201h0M685 185h0M777 259h0M779 260h0M777 257h0M782 259h0M630 294h0M546 269h0M553 296h0M575 249h0M572 252h0M579 251h0M506 279h0M502 281h0M465 257h0M497 302h0M497 305h0M505 302h0M497 296h0M496 302h0M496 303h0M505 296h0M461 322h0M460 319h0M429 269h0M432 270h0M424 268h0M536 259h0M536 259h0M431 345h0M432 352h0M442 362h0M467 371h0M450 373h0M457 367h0M458 368h0M445 333h0M451 331h0M441 330h0M446 328h0M492 327h0M355 306h0M351 311h0M353 305h0M357 306h0M357 303h0M410 304h0M403 267h0M404 269h0M417 269h0M405 273h0M403 269h0M405 268h0M412 270h0M410 273h0M314 284h0M307 283h0M315 284h0M310 282h0M357 284h0M544 225h0M391 338h0M392 337h0M401 335h0M400 339h0M395 338h0M395 342h0M394 337h0M464 365h0M487 372h0M483 370h0M485 367h0M483 367h0M466 374h0M466 372h0" stroke="#2492da" stroke-width="3"/>
<path d="M375 266h0M395 240h0M392 235h0M412 249h0M420 252h0M482 190h0M474 190h0M466 195h0M556 169h0M617 179h0M548 268h0M560 299h0M466 254h0M501 301h0M496 303h0M507 302h0M499 302h0M522 290h0M478 317h0M423 270h0M419 271h0M387 334h0M411 346h0M410 347h0M423 348h0M450 362h0M454 374h0M454 367h0M503 361h0M445 322h0M452 329h0M442 326h0M495 326h0M486 323h0M351 307h0M372 311h0M411 270h0M408 270h0M312 283h0M311 281h0M359 282h0M357 282h0M547 224h0M544 223h0M439 357h0M459 368h0M480 368h0M468 373h0M464 369h0" stroke="#2492da" stroke-width="4"/>
<path d="M374 271h0M368 268h0M371 267h0M367 269h0M378 232h0M382 233h0M393 231h0M390 237h0M396 237h0M390 238h0M391 240h0M413 241h0M414 235h0M413 234h0M407 239h0M409 241h0M409 231h0M410 233h0M409 241h0M413 238h0M407 231h0M412 237h0M392 242h0M410 244h0M418 239h0M417 243h0M421 247h0M410 253h0M412 247h0M458 240h0M453 241h0M452 240h0M455 240h0M472 197h0M466 198h0M463 197h0M469 201h0M556 170h0M553 171h0M552 168h0M616 179h0M688 187h0M779 256h0M633 294h0M629 292h0M550 266h0M543 263h0M555 265h0M563 301h0M565 293h0M554 297h0M559 298h0M561 298h0M577 253h0M572 247h0M577 254h0M583 248h0M617 256h0M616 256h0M510 279h0M462 252h0M457 249h0M460 257h0M466 252h0M457 251h0M466 256h0M468 251h0M493 291h0M486 294h0M481 294h0M506 296h0M498 304h0M503 293h0M496 298h0M505 303h0M493 298h0M526 290h0M523 289h0M527 288h0M518 291h0M524 291h0M518 287h0M486 312h0M458 321h0M463 322h0M458 320h0M423 269h0M431 272h0M422 269h0M419 268h0M426 267h0M424 269h0M545 256h0M384 327h0M380 329h0M390 332h0M380 332h0M389 333h0M406 343h0M406 346h0M407 345h0M402 341h0M406 343h0M429 352h0M426 350h0M429 346h0M430 356h0M430 348h0M431 342h0M429 351h0M439 359h0M450 363h0M442 361h0M439 362h0M467 365h0M477 364h0M453 366h0M453 367h0M451 371h0M460 368h0M455 374h0M447 374h0M456 367h0M501 361h0M501 361h0M504 358h0M498 357h0M438 327h0M441 328h0M448 320h0M452 329h0M488 319h0M348 306h0M356 304h0M350 303h0M350 305h0M368 308h0M374 308h0M367 309h0M379 306h0M415 302h0M416 267h0M417 270h0M410 272h0M410 274h0M403 269h0M352 284h0M569 178h0M583 185h0M600 221h0M395 332h0M392 341h0M400 336h0M400 335h0M390 338h0M415 344h0M415 345h0M434 353h0M467 363h0M463 363h0M488 364h0M464 372h0M464 373h0M466 367h0M468 376h0M492 366h0M514 356h0M431 243h0M432 243h0M428 245h0" stroke="#2196d8" stroke-width="2"/>
<path d="M295 261h0M325 260h0M372 273h0M372 270h0M374 266h0M374 265h0M382 232h0M374 237h0M377 240h0M373 239h0M375 237h0M380 235h0M377 237h0M395 236h0M397 237h0M392 235h0M412 241h0M408 231h0M406 238h0M405 239h0M418 237h0M417 235h0M408 238h0M408 239h0M394 244h0M390 243h0M407 242h0M418 243h0M421 247h0M414 239h0M424 245h0M419 247h0M411 250h0M479 188h0M476 194h0M472 188h0M476 190h0M477 193h0M464 196h0M549 167h0M551 168h0M556 169h0M551 170h0M616 177h0M619 177h0M779 258h0M637 295h0M633 295h0M639 293h0M631 290h0M633 291h0M544 268h0M544 266h0M549 268h0M550 268h0M555 296h0M565 294h0M562 297h0M557 296h0M582 247h0M567 248h0M569 248h0M616 257h0M614 257h0M614 255h0M464 252h0M454 252h0M463 249h0M462 261h0M458 255h0M463 258h0M465 255h0M492 295h0M484 295h0M490 296h0M499 291h0M500 300h0M495 294h0M518 290h0M472 312h0M481 311h0M455 317h0M428 270h0M426 265h0M422 268h0M424 262h0M421 267h0M544 257h0M542 261h0M389 328h0M386 327h0M388 329h0M383 330h0M409 349h0M413 341h0M412 349h0M410 345h0M429 344h0M429 342h0M427 350h0M435 346h0M429 350h0M436 351h0M451 358h0M470 367h0M480 362h0M468 370h0M474 364h0M469 370h0M468 365h0M456 374h0M462 372h0M457 375h0M496 358h0M504 358h0M453 327h0M442 320h0M447 330h0M445 318h0M439 331h0M450 322h0M439 330h0M449 329h0M447 332h0M441 323h0M446 319h0M496 320h0M487 324h0M498 321h0M348 309h0M367 308h0M369 311h0M372 307h0M417 301h0M415 303h0M415 269h0M412 265h0M404 261h0M415 261h0M405 275h0M402 264h0M417 265h0M405 265h0M411 274h0M402 268h0M413 276h0M415 274h0M308 281h0M353 284h0M547 226h0M562 174h0M571 176h0M573 174h0M598 224h0M393 333h0M400 333h0M399 333h0M426 345h0M425 346h0M422 347h0M435 353h0M434 355h0M435 357h0M434 356h0M455 362h0M455 363h0M481 364h0M489 364h0M465 377h0M466 369h0M512 354h0M512 357h0M431 245h0M430 245h0" stroke="#2196d8" stroke-width="3"/>
<path d="M292 265h0M368 272h0M381 241h0M378 243h0M394 239h0M394 236h0M400 230h0M416 235h0M406 236h0M395 238h0M391 241h0M392 244h0M390 243h0M419 244h0M421 251h0M422 240h0M417 240h0M478 194h0M463 202h0M468 195h0M552 165h0M632 293h0M637 291h0M553 266h0M552 263h0M548 267h0M544 268h0M563 298h0M615 255h0M611 257h0M614 258h0M510 276h0M510 280h0M464 251h0M454 252h0M483 293h0M497 297h0M503 301h0M474 315h0M432 266h0M429 269h0M384 327h0M382 333h0M381 329h0M382 335h0M431 341h0M445 361h0M446 357h0M443 362h0M443 358h0M440 358h0M472 368h0M455 365h0M450 367h0M503 360h0M440 327h0M447 331h0M443 324h0M451 325h0M353 309h0M346 306h0M411 270h0M416 272h0M314 284h0M307 282h0M569 178h0M400 334h0M400 339h0M391 331h0M401 334h0M424 347h0M437 357h0M484 373h0M487 375h0M481 373h0M465 376h0M512 353h0" stroke="#2196d8" stroke-width="4"/>
<path d="M293 264h0M291 258h0M326 261h0M364 272h0M364 272h0M376 269h0M371 269h0M375 265h0M379 232h0M384 231h0M382 232h0M381 229h0M379 233h0M376 238h0M378 239h0M392 230h0M388 231h0M391 238h0M394 231h0M388 275h0M393 238h0M399 234h0M396 231h0M422 231h0M419 232h0M417 239h0M412 237h0M408 243h0M388 236h0M391 241h0M392 240h0M387 243h0M409 243h0M418 238h0M415 248h0M415 254h0M414 243h0M416 241h0M415 252h0M420 244h0M418 237h0M410 251h0M459 238h0M458 236h0M450 239h0M482 187h0M472 195h0M474 195h0M474 188h0M470 197h0M468 195h0M469 200h0M463 200h0M559 163h0M556 170h0M560 167h0M600 182h0M623 178h0M618 175h0M621 176h0M618 177h0M626 173h0M620 182h0M685 184h0M689 186h0M687 183h0M650 204h0M656 221h0M656 221h0M781 260h0M780 254h0M633 293h0M640 294h0M633 291h0M637 296h0M631 293h0M641 290h0M547 267h0M548 265h0M564 297h0M552 291h0M570 246h0M581 250h0M568 242h0M619 254h0M619 254h0M620 254h0M613 250h0M519 275h0M512 276h0M464 258h0M457 256h0M459 262h0M459 252h0M466 252h0M465 252h0M467 249h0M471 250h0M481 287h0M490 287h0M496 294h0M502 297h0M503 294h0M504 301h0M493 294h0M521 288h0M523 292h0M516 283h0M519 288h0M529 287h0M530 283h0M481 308h0M476 315h0M476 313h0M483 311h0M479 318h0M485 313h0M477 313h0M486 316h0M462 323h0M467 313h0M459 321h0M457 320h0M468 315h0M453 317h0M460 314h0M430 266h0M431 270h0M428 272h0M428 273h0M421 275h0M421 266h0M419 270h0M535 259h0M534 255h0M390 332h0M384 334h0M386 329h0M415 345h0M417 340h0M406 346h0M407 340h0M417 342h0M416 338h0M413 339h0M427 347h0M437 344h0M437 348h0M428 345h0M427 346h0M428 345h0M437 355h0M439 355h0M448 362h0M446 358h0M437 357h0M465 361h0M470 363h0M465 359h0M474 359h0M470 364h0M472 366h0M468 364h0M476 365h0M462 367h0M479 361h0M455 368h0M460 366h0M448 372h0M447 373h0M451 368h0M495 353h0M451 329h0M445 318h0M441 325h0M442 328h0M440 320h0M448 326h0M453 322h0M471 327h0M461 325h0M477 329h0M468 329h0M496 321h0M493 326h0M491 325h0M498 314h0M497 318h0M493 323h0M497 321h0M489 321h0M343 307h0M351 300h0M347 306h0M349 307h0M350 301h0M349 305h0M355 301h0M348 309h0M375 306h0M377 309h0M375 311h0M378 306h0M371 309h0M370 307h0M406 299h0M416 302h0M410 299h0M409 305h0M403 263h0M412 274h0M314 281h0M355 284h0M354 281h0M356 284h0M355 281h0M359 284h0M545 222h0M567 178h0M578 174h0M575 175h0M583 183h0M615 187h0M620 187h0M614 228h0M596 218h0M392 339h0M396 340h0M423 342h0M430 351h0M432 351h0M437 354h0M457 361h0M455 363h0M460 361h0M460 359h0M466 358h0M461 360h0M464 359h0M489 371h0M490 371h0M487 367h0M479 366h0M470 374h0M467 369h0M493 366h0M512 355h0M517 352h0M432 238h0" stroke="#1e9ad5" stroke-width="2"/>
<path d="M290 262h0M295 263h0M289 263h0M292 260h0M321 257h0M325 261h0M322 257h0M326 258h0M371 269h0M372 266h0M376 267h0M382 228h0M381 230h0M375 242h0M378 239h0M397 232h0M387 232h0M395 231h0M392 236h0M388 231h0M392 229h0M392 240h0M426 230h0M422 230h0M426 230h0M412 232h0M410 228h0M415 236h0M402 236h0M406 236h0M391 238h0M388 235h0M389 235h0M388 237h0M385 238h0M416 244h0M412 250h0M407 244h0M406 245h0M412 237h0M415 248h0M421 248h0M417 245h0M422 247h0M417 239h0M419 238h0M459 236h0M459 240h0M453 234h0M461 238h0M456 233h0M451 239h0M479 187h0M476 189h0M476 187h0M470 194h0M472 192h0M468 194h0M471 187h0M469 195h0M553 165h0M554 171h0M616 177h0M621 180h0M704 210h0M781 254h0M778 255h0M632 295h0M633 294h0M635 295h0M550 268h0M543 261h0M542 265h0M555 260h0M548 262h0M559 299h0M561 299h0M565 292h0M557 290h0M564 299h0M562 296h0M583 249h0M581 241h0M576 244h0M572 252h0M570 241h0M584 246h0M615 253h0M614 255h0M611 254h0M505 281h0M461 252h0M464 252h0M461 249h0M468 252h0M468 252h0M467 248h0M478 288h0M493 291h0M479 294h0M493 290h0M486 292h0M488 294h0M501 298h0M505 301h0M504 294h0M497 302h0M520 290h0M523 287h0M530 285h0M517 289h0M481 311h0M475 313h0M485 316h0M482 310h0M476 318h0M461 319h0M461 322h0M420 265h0M430 269h0M430 274h0M421 272h0M427 264h0M419 266h0M536 256h0M540 256h0M545 259h0M387 332h0M380 333h0M384 329h0M385 330h0M415 345h0M413 348h0M407 341h0M405 341h0M437 351h0M430 343h0M427 353h0M435 349h0M431 348h0M433 346h0M453 352h0M451 361h0M444 358h0M441 355h0M453 357h0M448 355h0M479 366h0M474 367h0M449 369h0M449 373h0M455 370h0M460 368h0M450 369h0M451 371h0M453 365h0M500 359h0M447 331h0M447 325h0M450 327h0M440 330h0M470 331h0M483 320h0M495 323h0M484 316h0M491 324h0M488 323h0M494 320h0M347 303h0M351 310h0M353 300h0M354 308h0M374 304h0M372 307h0M373 303h0M377 307h0M375 310h0M401 300h0M418 272h0M417 267h0M416 267h0M409 265h0M412 262h0M409 265h0M407 274h0M416 266h0M406 264h0M411 269h0M551 220h0M543 222h0M551 221h0M546 223h0M578 169h0M566 176h0M579 170h0M574 177h0M578 171h0M572 176h0M576 184h0M584 185h0M578 182h0M617 188h0M609 228h0M592 219h0M597 221h0M597 223h0M394 330h0M390 334h0M391 332h0M396 335h0M417 344h0M417 346h0M426 342h0M418 348h0M418 343h0M436 355h0M441 353h0M442 352h0M436 351h0M462 361h0M461 364h0M452 358h0M460 364h0M465 361h0M462 362h0M481 374h0M487 370h0M469 371h0M462 376h0M467 368h0M463 373h0M468 376h0M517 351h0M512 352h0M432 241h0M432 241h0" stroke="#1e9ad5" stroke-width="3"/>
<path d="M290 264h0M322 260h0M321 259h0M370 273h0M367 269h0M363 270h0M372 264h0M370 269h0M382 235h0M395 229h0M398 234h0M395 238h0M400 226h0M416 235h0M386 240h0M421 249h0M409 249h0M414 248h0M414 250h0M474 189h0M474 192h0M557 170h0M605 180h0M622 175h0M691 182h0M691 183h0M781 259h0M658 256h0M635 290h0M631 292h0M641 290h0M550 270h0M548 262h0M563 295h0M578 249h0M576 246h0M570 246h0M580 250h0M612 251h0M509 276h0M505 276h0M504 273h0M462 253h0M462 253h0M457 250h0M456 250h0M493 294h0M489 292h0M485 298h0M493 288h0M502 290h0M503 302h0M493 294h0M494 299h0M521 283h0M472 313h0M485 306h0M455 315h0M462 318h0M453 312h0M467 318h0M453 314h0M430 275h0M383 331h0M389 333h0M410 339h0M404 341h0M427 354h0M433 348h0M427 352h0M426 355h0M452 361h0M448 359h0M444 361h0M439 354h0M447 359h0M470 359h0M467 368h0M465 365h0M461 368h0M455 367h0M460 371h0M494 357h0M500 354h0M507 355h0M451 323h0M451 332h0M446 331h0M441 321h0M339 304h0M341 305h0M351 302h0M349 309h0M412 304h0M414 301h0M406 301h0M408 269h0M408 263h0M413 274h0M313 281h0M542 222h0M577 175h0M612 187h0M617 185h0M611 229h0M392 336h0M392 333h0M392 334h0M435 357h0M464 359h0M482 371h0M489 363h0M488 373h0M465 371h0M464 371h0M462 369h0M511 355h0M512 350h0M512 352h0M430 241h0" stroke="#1e9ad5" stroke-width="4"/>
<path d="M297 259h0M294 260h0M288 261h0M289 264h0M350 269h0M366 265h0M361 267h0M365 273h0M363 264h0M368 272h0M362 263h0M368 266h0M370 264h0M371 268h0M380 228h0M383 229h0M380 237h0M380 235h0M390 233h0M385 233h0M386 232h0M390 273h0M400 225h0M398 223h0M415 231h0M421 226h0M406 238h0M414 235h0M404 234h0M405 236h0M413 237h0M409 231h0M416 233h0M407 235h0M409 237h0M389 238h0M392 238h0M415 247h0M412 237h0M413 247h0M420 242h0M437 242h0M454 238h0M482 186h0M480 187h0M484 185h0M484 188h0M476 196h0M474 194h0M462 198h0M466 196h0M469 199h0M553 162h0M557 167h0M558 161h0M562 164h0M557 169h0M560 170h0M555 163h0M603 181h0M616 170h0M624 175h0M616 178h0M620 174h0M625 171h0M622 170h0M690 181h0M706 208h0M702 210h0M647 201h0M774 254h0M780 254h0M771 254h0M765 252h0M632 291h0M555 266h0M542 262h0M552 264h0M551 261h0M550 268h0M551 268h0M552 293h0M565 294h0M558 297h0M563 287h0M566 287h0M565 295h0M560 300h0M555 288h0M560 290h0M566 246h0M573 246h0M581 239h0M570 245h0M583 244h0M616 253h0M611 250h0M619 252h0M514 276h0M514 274h0M516 272h0M516 273h0M508 270h0M504 279h0M511 274h0M505 276h0M505 269h0M509 271h0M510 276h0M507 270h0M456 255h0M456 257h0M462 252h0M463 252h0M464 258h0M461 259h0M467 256h0M464 251h0M471 252h0M485 283h0M488 286h0M480 290h0M484 292h0M478 295h0M487 294h0M488 287h0M479 286h0M505 302h0M504 295h0M498 300h0M493 297h0M497 302h0M516 287h0M521 287h0M527 288h0M520 287h0M475 304h0M477 313h0M480 315h0M484 308h0M477 315h0M453 312h0M464 320h0M465 311h0M461 308h0M464 311h0M461 321h0M453 314h0M460 312h0M455 311h0M455 317h0M423 272h0M433 272h0M431 273h0M423 274h0M431 267h0M424 272h0M543 257h0M385 329h0M383 333h0M402 341h0M413 340h0M409 342h0M406 335h0M413 335h0M429 344h0M438 348h0M431 347h0M429 350h0M433 352h0M449 350h0M438 357h0M447 351h0M450 362h0M453 351h0M437 353h0M476 362h0M466 360h0M474 364h0M464 369h0M465 356h0M464 368h0M467 359h0M469 353h0M468 354h0M474 365h0M477 361h0M478 358h0M504 352h0M503 352h0M496 356h0M448 325h0M448 324h0M453 322h0M478 325h0M476 322h0M475 326h0M484 318h0M492 327h0M483 312h0M499 318h0M482 318h0M493 320h0M346 305h0M344 302h0M340 303h0M344 305h0M338 304h0M348 305h0M357 305h0M373 302h0M375 299h0M378 303h0M371 301h0M398 296h0M407 301h0M409 304h0M417 263h0M407 260h0M418 270h0M401 269h0M415 265h0M411 268h0M414 268h0M411 263h0M408 267h0M356 283h0M542 218h0M544 218h0M547 225h0M549 222h0M608 210h0M575 181h0M564 175h0M577 170h0M568 180h0M575 169h0M570 175h0M594 179h0M593 179h0M356 295h0M557 177h0M556 176h0M565 175h0M560 177h0M564 177h0M565 177h0M574 180h0M576 181h0M617 182h0M615 185h0M610 184h0M614 184h0M609 227h0M622 231h0M599 215h0M596 222h0M593 217h0M595 215h0M398 341h0M392 331h0M399 333h0M388 336h0M417 349h0M419 349h0M416 346h0M415 343h0M423 341h0M422 346h0M442 356h0M435 345h0M436 346h0M439 348h0M443 352h0M439 350h0M435 358h0M460 358h0M467 360h0M459 366h0M464 359h0M464 354h0M490 367h0M485 369h0M482 363h0M486 369h0M465 368h0M487 362h0M498 362h0M513 351h0M517 356h0M514 347h0M519 353h0M517 354h0M406 231h0M424 240h0M425 238h0M431 245h0M427 239h0M433 238h0" stroke="#1a9dd1" stroke-width="2"/>
<path d="M292 264h0M294 260h0M294 264h0M348 269h0M354 269h0M322 260h0M326 260h0M367 265h0M361 265h0M366 264h0M373 266h0M366 270h0M368 271h0M369 267h0M371 266h0M364 262h0M369 269h0M373 268h0M370 266h0M378 228h0M376 230h0M378 232h0M376 229h0M378 236h0M397 232h0M391 230h0M396 228h0M397 225h0M394 230h0M386 238h0M391 232h0M396 233h0M386 234h0M392 231h0M393 228h0M401 224h0M395 233h0M396 225h0M393 234h0M388 229h0M394 233h0M390 230h0M425 226h0M413 235h0M403 237h0M407 238h0M416 232h0M389 240h0M410 240h0M421 248h0M419 249h0M410 246h0M410 243h0M418 250h0M415 236h0M421 251h0M417 242h0M464 217h0M446 241h0M460 239h0M456 240h0M451 239h0M480 186h0M471 190h0M470 193h0M472 188h0M471 192h0M469 195h0M466 198h0M464 197h0M464 196h0M471 197h0M553 168h0M555 171h0M552 160h0M555 162h0M558 159h0M599 181h0M605 180h0M603 181h0M597 180h0M626 171h0M618 180h0M614 174h0M626 178h0M621 180h0M647 173h0M646 175h0M654 202h0M735 223h0M776 253h0M769 251h0M776 259h0M778 256h0M777 255h0M641 291h0M635 291h0M629 286h0M640 292h0M544 267h0M545 266h0M546 262h0M553 267h0M561 287h0M559 295h0M563 298h0M553 296h0M565 296h0M560 294h0M552 290h0M567 248h0M579 247h0M570 240h0M575 242h0M575 237h0M576 250h0M614 258h0M616 246h0M608 252h0M502 272h0M512 275h0M506 269h0M502 269h0M507 271h0M509 279h0M505 273h0M455 251h0M465 254h0M464 250h0M454 252h0M462 252h0M470 248h0M471 247h0M489 287h0M480 286h0M493 292h0M491 295h0M482 283h0M479 287h0M490 293h0M489 286h0M499 292h0M498 298h0M498 298h0M499 303h0M506 295h0M505 301h0M494 298h0M494 296h0M521 291h0M517 287h0M527 283h0M528 284h0M519 286h0M474 309h0M473 310h0M473 310h0M482 304h0M487 308h0M476 316h0M483 316h0M475 311h0M486 311h0M468 315h0M460 311h0M456 308h0M458 318h0M458 313h0M423 272h0M418 269h0M420 264h0M546 253h0M534 257h0M544 251h0M539 251h0M542 254h0M534 255h0M534 255h0M537 261h0M535 252h0M389 330h0M418 342h0M408 343h0M401 340h0M402 341h0M417 343h0M407 341h0M417 336h0M404 344h0M424 343h0M434 344h0M438 346h0M424 346h0M443 352h0M440 358h0M445 348h0M478 365h0M460 364h0M472 367h0M477 355h0M465 355h0M476 355h0M467 361h0M505 352h0M500 354h0M506 352h0M504 355h0M495 359h0M441 326h0M446 326h0M442 323h0M446 317h0M440 323h0M446 321h0M437 324h0M466 320h0M476 319h0M474 325h0M475 327h0M468 329h0M480 320h0M495 313h0M490 322h0M494 319h0M495 323h0M488 319h0M340 306h0M343 302h0M342 303h0M353 308h0M357 305h0M348 302h0M355 304h0M369 306h0M373 309h0M372 304h0M370 308h0M375 302h0M415 304h0M407 302h0M416 303h0M409 269h0M415 266h0M404 265h0M413 264h0M416 264h0M413 271h0M358 284h0M354 282h0M544 223h0M549 220h0M611 209h0M609 208h0M603 209h0M605 211h0M566 180h0M574 165h0M575 171h0M578 173h0M576 178h0M575 173h0M564 167h0M588 179h0M584 176h0M588 176h0M557 173h0M575 184h0M580 180h0M580 185h0M584 183h0M579 182h0M631 183h0M633 183h0M601 214h0M593 218h0M598 219h0M597 222h0M397 337h0M393 334h0M396 338h0M422 343h0M422 338h0M415 345h0M424 343h0M415 345h0M443 353h0M436 357h0M430 351h0M431 350h0M439 351h0M459 356h0M459 361h0M464 363h0M459 367h0M484 362h0M482 365h0M483 366h0M486 369h0M483 372h0M469 370h0M464 371h0M492 363h0M490 362h0M496 362h0M488 363h0M518 356h0M519 350h0M516 354h0M515 351h0M399 229h0M408 229h0" stroke="#1a9dd1" stroke-width="3"/>
<path d="M355 268h0M345 268h0M326 259h0M368 274h0M372 269h0M378 232h0M379 240h0M392 231h0M397 229h0M388 235h0M397 233h0M401 224h0M392 231h0M395 231h0M394 236h0M395 231h0M425 230h0M418 228h0M427 227h0M427 227h0M416 228h0M409 240h0M405 236h0M394 237h0M416 249h0M422 246h0M408 240h0M451 232h0M458 237h0M456 233h0M458 234h0M481 186h0M470 196h0M473 188h0M552 161h0M560 166h0M619 168h0M615 171h0M647 175h0M702 206h0M782 253h0M766 251h0M769 254h0M780 257h0M638 288h0M640 291h0M548 257h0M550 262h0M542 263h0M545 269h0M558 293h0M555 285h0M567 288h0M557 297h0M565 296h0M572 244h0M577 249h0M574 239h0M616 251h0M619 250h0M515 276h0M461 258h0M466 257h0M468 251h0M470 254h0M463 251h0M488 297h0M481 285h0M483 285h0M492 284h0M530 287h0M524 284h0M475 310h0M476 304h0M462 307h0M420 267h0M432 272h0M541 260h0M410 341h0M417 338h0M417 339h0M426 343h0M423 346h0M429 341h0M442 349h0M448 356h0M449 355h0M439 355h0M467 371h0M466 365h0M472 367h0M467 370h0M465 370h0M467 357h0M469 358h0M503 353h0M500 355h0M450 324h0M447 323h0M477 322h0M464 324h0M467 325h0M493 324h0M485 318h0M494 316h0M487 324h0M498 314h0M338 303h0M342 305h0M378 307h0M376 302h0M401 298h0M407 302h0M405 261h0M410 269h0M409 260h0M407 262h0M412 274h0M417 266h0M404 264h0M358 283h0M543 218h0M548 219h0M544 222h0M547 216h0M542 222h0M545 221h0M607 211h0M565 177h0M562 177h0M613 186h0M635 182h0M607 226h0M595 213h0M593 221h0M603 219h0M397 332h0M394 333h0M393 331h0M393 333h0M395 331h0M421 347h0M418 347h0M455 363h0M459 367h0M483 366h0M467 373h0M517 354h0M509 353h0M519 354h0M409 230h0M432 245h0M433 237h0M425 240h0M429 237h0" stroke="#1a9dd1" stroke-width="4"/>
<path d="M295 255h0M291 262h0M353 268h0M363 265h0M365 262h0M364 268h0M367 272h0M365 270h0M366 262h0M363 262h0M359 262h0M369 266h0M375 264h0M376 265h0M368 265h0M385 224h0M376 227h0M379 233h0M374 238h0M378 237h0M402 219h0M391 225h0M397 224h0M403 225h0M397 223h0M390 223h0M394 232h0M389 231h0M391 232h0M390 232h0M392 230h0M390 271h0M388 271h0M398 222h0M397 223h0M401 220h0M406 220h0M402 227h0M398 232h0M393 225h0M400 235h0M399 235h0M401 226h0M394 222h0M397 223h0M390 236h0M394 231h0M416 228h0M420 233h0M417 228h0M416 229h0M412 237h0M414 243h0M423 242h0M421 240h0M461 217h0M447 238h0M445 239h0M440 239h0M454 237h0M454 236h0M453 234h0M477 192h0M475 194h0M468 191h0M555 161h0M552 161h0M557 159h0M606 178h0M598 179h0M599 179h0M623 177h0M626 174h0M616 174h0M621 173h0M614 171h0M617 179h0M622 177h0M648 175h0M691 182h0M686 186h0M697 207h0M657 202h0M659 198h0M652 200h0M654 202h0M738 222h0M739 224h0M739 224h0M658 217h0M657 220h0M767 250h0M773 252h0M782 255h0M782 255h0M657 254h0M659 254h0M628 291h0M638 285h0M544 265h0M556 262h0M549 261h0M549 265h0M543 261h0M544 261h0M548 264h0M564 300h0M558 285h0M559 293h0M558 292h0M565 295h0M557 284h0M568 295h0M561 287h0M561 297h0M559 295h0M562 294h0M592 325h0M572 237h0M570 250h0M575 237h0M572 239h0M566 247h0M583 247h0M608 252h0M617 247h0M607 252h0M607 249h0M611 247h0M610 253h0M519 274h0M513 273h0M520 269h0M518 269h0M511 270h0M515 271h0M503 277h0M504 280h0M506 269h0M506 271h0M506 277h0M457 254h0M464 257h0M467 256h0M468 247h0M472 251h0M470 247h0M466 246h0M478 296h0M485 290h0M483 286h0M484 297h0M477 286h0M484 297h0M490 295h0M491 288h0M488 288h0M497 298h0M501 290h0M504 298h0M504 296h0M521 287h0M521 284h0M527 291h0M522 287h0M517 290h0M525 292h0M527 278h0M484 318h0M477 311h0M479 313h0M478 317h0M484 303h0M485 304h0M487 311h0M481 302h0M461 318h0M456 321h0M430 272h0M422 269h0M421 273h0M427 264h0M428 266h0M428 267h0M423 266h0M425 271h0M421 264h0M546 255h0M538 250h0M545 257h0M410 340h0M410 336h0M408 336h0M416 334h0M403 340h0M410 343h0M412 335h0M424 346h0M426 347h0M425 349h0M432 342h0M427 348h0M435 348h0M444 347h0M453 358h0M439 350h0M441 352h0M447 354h0M447 358h0M464 358h0M473 370h0M471 353h0M479 360h0M479 361h0M472 363h0M461 364h0M463 367h0M473 371h0M473 371h0M478 361h0M467 360h0M472 352h0M482 358h0M502 354h0M499 352h0M502 351h0M498 357h0M501 359h0M503 357h0M496 349h0M499 358h0M438 324h0M446 322h0M444 321h0M443 320h0M448 323h0M447 324h0M441 321h0M465 330h0M478 321h0M462 326h0M474 330h0M466 328h0M470 316h0M477 324h0M468 318h0M470 318h0M478 320h0M494 314h0M487 320h0M492 318h0M489 312h0M341 305h0M347 300h0M348 305h0M349 301h0M347 305h0M351 300h0M373 300h0M371 305h0M378 301h0M368 310h0M374 304h0M375 310h0M373 299h0M377 310h0M407 298h0M410 293h0M410 293h0M414 296h0M413 300h0M542 220h0M546 217h0M547 224h0M574 173h0M576 168h0M568 173h0M575 173h0M572 166h0M569 170h0M563 169h0M571 178h0M577 179h0M591 178h0M358 293h0M360 293h0M562 176h0M559 173h0M587 182h0M576 176h0M611 181h0M618 178h0M637 181h0M639 180h0M609 229h0M610 224h0M625 230h0M621 230h0M591 218h0M602 219h0M597 217h0M593 217h0M595 214h0M594 217h0M393 335h0M397 336h0M393 335h0M390 333h0M421 340h0M425 339h0M418 338h0M424 346h0M435 355h0M432 348h0M458 359h0M462 353h0M457 366h0M455 365h0M459 359h0M462 356h0M465 357h0M455 356h0M491 362h0M496 362h0M493 363h0M511 348h0M510 355h0M405 227h0M405 229h0M431 238h0M434 236h0M428 234h0M430 244h0M430 236h0" stroke="#15a1cd" stroke-width="2"/>
<path d="M301 252h0M299 258h0M290 260h0M314 247h0M318 247h0M323 258h0M323 256h0M362 264h0M358 258h0M362 262h0M363 266h0M363 263h0M373 273h0M369 265h0M372 266h0M372 272h0M364 266h0M364 261h0M372 265h0M381 233h0M382 233h0M379 238h0M391 229h0M391 227h0M391 224h0M393 236h0M390 229h0M396 272h0M402 221h0M400 223h0M400 235h0M389 233h0M392 235h0M401 231h0M399 225h0M392 233h0M393 222h0M394 223h0M423 228h0M424 225h0M424 227h0M424 228h0M417 224h0M415 231h0M414 236h0M407 233h0M391 236h0M410 237h0M418 244h0M408 245h0M415 246h0M411 238h0M461 219h0M442 235h0M456 232h0M479 192h0M479 188h0M481 191h0M471 195h0M475 190h0M558 164h0M551 169h0M550 168h0M553 161h0M562 164h0M558 161h0M561 164h0M598 177h0M602 177h0M600 177h0M596 179h0M599 177h0M623 179h0M624 172h0M626 171h0M643 175h0M640 172h0M687 180h0M691 181h0M702 207h0M698 207h0M650 204h0M656 199h0M738 222h0M656 221h0M651 219h0M777 252h0M775 252h0M774 255h0M775 251h0M771 252h0M778 253h0M773 253h0M659 253h0M658 255h0M658 256h0M641 289h0M629 291h0M637 294h0M639 286h0M638 295h0M630 292h0M554 267h0M541 259h0M545 264h0M543 261h0M549 267h0M548 263h0M559 288h0M557 290h0M561 289h0M560 284h0M589 322h0M578 249h0M572 239h0M576 247h0M573 247h0M575 239h0M571 245h0M617 246h0M610 250h0M614 247h0M606 253h0M508 272h0M512 273h0M519 274h0M500 274h0M506 280h0M503 273h0M503 272h0M509 280h0M501 270h0M506 271h0M463 250h0M463 254h0M463 251h0M488 283h0M492 287h0M480 294h0M479 290h0M482 290h0M505 301h0M504 296h0M507 298h0M507 294h0M526 289h0M528 289h0M524 282h0M525 288h0M519 284h0M475 309h0M485 317h0M480 303h0M484 315h0M480 314h0M477 305h0M487 309h0M479 309h0M487 312h0M464 316h0M464 312h0M462 310h0M430 266h0M419 269h0M432 271h0M426 272h0M430 269h0M423 267h0M422 270h0M541 256h0M544 255h0M536 260h0M541 252h0M413 336h0M411 344h0M411 342h0M417 334h0M411 335h0M415 339h0M411 343h0M424 343h0M436 349h0M430 348h0M450 353h0M442 355h0M445 357h0M446 351h0M440 350h0M448 356h0M471 359h0M462 358h0M471 360h0M461 363h0M471 361h0M468 365h0M470 372h0M473 356h0M469 363h0M468 369h0M473 356h0M480 359h0M503 352h0M497 352h0M496 352h0M500 350h0M498 357h0M453 326h0M441 326h0M452 319h0M447 323h0M440 325h0M446 322h0M480 322h0M461 324h0M467 327h0M465 324h0M471 328h0M478 324h0M473 323h0M481 318h0M498 321h0M494 323h0M486 315h0M494 324h0M490 311h0M482 322h0M491 323h0M492 323h0M494 320h0M346 305h0M347 304h0M337 302h0M342 300h0M342 302h0M348 303h0M354 304h0M349 307h0M350 305h0M377 306h0M368 308h0M369 301h0M401 300h0M407 295h0M407 303h0M408 301h0M415 299h0M416 300h0M410 262h0M409 266h0M412 269h0M412 264h0M539 218h0M545 215h0M574 179h0M565 173h0M572 180h0M567 177h0M577 171h0M562 172h0M575 174h0M571 174h0M585 178h0M584 176h0M596 172h0M586 177h0M365 295h0M564 177h0M556 175h0M580 175h0M617 188h0M640 182h0M635 180h0M634 183h0M610 223h0M609 229h0M593 214h0M601 218h0M397 335h0M392 334h0M394 331h0M423 338h0M420 345h0M421 344h0M421 343h0M442 350h0M434 355h0M466 359h0M463 367h0M456 365h0M463 358h0M480 370h0M485 367h0M482 363h0M464 367h0M465 368h0M489 356h0M498 359h0M494 365h0M490 362h0M493 360h0M493 365h0M517 350h0M410 228h0M407 226h0M430 243h0M435 240h0M433 245h0M431 240h0" stroke="#15a1cd" stroke-width="3"/>
<path d="M313 247h0M353 269h0M355 267h0M321 256h0M362 260h0M363 259h0M364 264h0M370 261h0M371 271h0M367 270h0M365 267h0M368 263h0M391 228h0M396 231h0M395 237h0M386 237h0M387 272h0M386 270h0M400 218h0M395 219h0M403 219h0M393 235h0M389 228h0M390 228h0M395 232h0M390 234h0M396 227h0M426 224h0M412 228h0M419 224h0M428 227h0M413 234h0M413 234h0M391 237h0M415 239h0M415 240h0M458 216h0M438 238h0M443 238h0M439 241h0M441 238h0M467 194h0M470 191h0M552 159h0M557 162h0M555 161h0M608 177h0M617 170h0M766 251h0M635 285h0M568 296h0M552 290h0M556 298h0M555 292h0M577 242h0M583 245h0M577 245h0M616 255h0M615 258h0M616 246h0M513 275h0M523 269h0M507 274h0M503 271h0M456 250h0M484 298h0M492 294h0M488 295h0M490 288h0M489 296h0M483 286h0M503 299h0M497 298h0M507 299h0M521 279h0M525 287h0M479 305h0M476 302h0M487 314h0M459 307h0M462 322h0M456 313h0M458 312h0M454 318h0M465 320h0M424 264h0M536 259h0M545 258h0M406 335h0M435 349h0M435 344h0M428 350h0M450 357h0M444 348h0M449 360h0M454 357h0M462 358h0M469 362h0M478 360h0M504 357h0M496 353h0M444 318h0M444 324h0M440 321h0M444 319h0M443 321h0M470 326h0M467 321h0M464 326h0M473 321h0M471 321h0M469 322h0M487 323h0M482 322h0M483 318h0M484 318h0M491 321h0M336 300h0M373 308h0M398 293h0M396 295h0M400 293h0M412 298h0M412 295h0M410 260h0M403 262h0M410 260h0M549 218h0M577 176h0M563 167h0M578 174h0M592 175h0M591 176h0M595 177h0M552 173h0M559 175h0M562 171h0M580 175h0M622 180h0M620 185h0M619 185h0M615 185h0M600 217h0M591 218h0M596 215h0M421 338h0M432 352h0M433 351h0M430 350h0M436 353h0M458 364h0M462 360h0M461 352h0M487 369h0M479 366h0M489 360h0M519 349h0M429 242h0M433 245h0" stroke="#15a1cd" stroke-width="4"/>
<path d="M298 256h0M315 248h0M348 264h0M347 268h0M348 267h0M347 268h0M326 259h0M342 273h0M346 273h0M343 271h0M359 261h0M372 260h0M364 262h0M360 264h0M368 272h0M365 265h0M366 268h0M367 267h0M367 259h0M366 264h0M371 267h0M372 266h0M383 231h0M379 232h0M398 230h0M391 229h0M392 222h0M390 228h0M391 230h0M395 230h0M389 229h0M393 269h0M386 267h0M394 268h0M404 220h0M394 234h0M401 228h0M390 227h0M399 228h0M395 233h0M394 223h0M419 221h0M425 226h0M426 224h0M418 233h0M415 231h0M411 228h0M420 243h0M410 240h0M417 241h0M410 238h0M406 244h0M457 211h0M462 216h0M459 216h0M436 236h0M445 233h0M434 237h0M441 242h0M442 238h0M453 236h0M460 236h0M453 231h0M453 231h0M481 184h0M480 190h0M483 189h0M481 186h0M482 189h0M557 170h0M554 163h0M555 165h0M551 167h0M593 178h0M603 172h0M598 178h0M615 171h0M618 170h0M619 178h0M668 171h0M692 183h0M707 200h0M707 204h0M658 196h0M649 200h0M655 202h0M653 201h0M739 219h0M738 223h0M648 214h0M655 220h0M649 217h0M774 251h0M773 248h0M769 245h0M765 250h0M768 246h0M779 255h0M652 252h0M684 288h0M687 287h0M634 293h0M640 285h0M548 256h0M548 268h0M567 292h0M564 298h0M552 292h0M566 294h0M583 321h0M570 239h0M574 237h0M569 244h0M577 239h0M568 249h0M577 249h0M567 247h0M574 243h0M582 250h0M580 244h0M618 250h0M614 253h0M613 255h0M608 250h0M613 251h0M611 245h0M500 269h0M494 270h0M500 270h0M514 276h0M511 272h0M511 274h0M521 266h0M508 272h0M502 277h0M510 272h0M461 252h0M464 252h0M461 252h0M457 251h0M473 249h0M463 249h0M462 250h0M467 248h0M467 248h0M470 252h0M487 286h0M482 288h0M492 290h0M493 293h0M481 283h0M494 290h0M486 281h0M485 295h0M482 290h0M497 294h0M498 296h0M525 290h0M530 289h0M531 286h0M524 284h0M526 284h0M518 279h0M522 286h0M526 284h0M521 284h0M484 303h0M476 304h0M483 313h0M475 307h0M478 301h0M471 313h0M488 307h0M474 311h0M479 307h0M487 306h0M480 308h0M473 310h0M481 314h0M486 313h0M476 306h0M456 308h0M465 310h0M453 314h0M458 319h0M466 310h0M457 317h0M427 263h0M425 263h0M422 267h0M546 254h0M542 257h0M539 256h0M540 252h0M536 259h0M543 256h0M410 336h0M416 335h0M416 343h0M412 340h0M415 337h0M406 338h0M413 345h0M447 353h0M449 354h0M446 358h0M450 354h0M479 362h0M467 353h0M478 359h0M473 370h0M475 358h0M460 362h0M477 358h0M480 353h0M473 355h0M482 356h0M474 356h0M478 354h0M500 355h0M494 358h0M446 320h0M446 323h0M444 320h0M443 322h0M474 315h0M475 314h0M478 312h0M474 330h0M473 318h0M476 317h0M466 325h0M475 322h0M471 328h0M466 321h0M476 319h0M468 330h0M469 329h0M474 329h0M494 320h0M493 318h0M489 310h0M496 315h0M489 310h0M490 322h0M491 322h0M495 322h0M337 297h0M340 305h0M343 298h0M338 297h0M345 301h0M349 302h0M387 282h0M387 282h0M369 307h0M397 293h0M408 300h0M417 302h0M409 296h0M413 266h0M550 218h0M605 204h0M599 209h0M609 207h0M602 210h0M572 175h0M568 172h0M569 170h0M569 166h0M563 178h0M567 170h0M574 179h0M564 172h0M589 174h0M359 297h0M359 295h0M365 294h0M356 293h0M356 293h0M556 170h0M581 182h0M582 183h0M584 172h0M578 178h0M582 176h0M581 181h0M573 180h0M580 176h0M587 178h0M610 183h0M620 182h0M617 177h0M616 179h0M617 180h0M640 182h0M640 176h0M641 182h0M640 178h0M637 185h0M547 165h0M547 165h0M590 210h0M614 221h0M612 220h0M609 228h0M612 227h0M624 230h0M629 227h0M599 218h0M600 217h0M393 333h0M388 335h0M390 332h0M420 346h0M420 339h0M415 344h0M415 340h0M421 341h0M436 353h0M439 349h0M464 357h0M454 364h0M461 357h0M459 361h0M452 360h0M462 361h0M457 359h0M484 361h0M485 365h0M492 359h0M489 364h0M512 353h0M520 352h0M510 355h0M406 226h0M403 226h0M408 223h0M409 225h0M406 228h0M408 230h0M430 241h0M428 240h0M459 226h0M459 227h0" stroke="#0ca4c8" stroke-width="2"/>
<path d="M314 247h0M314 247h0M348 269h0M352 266h0M323 259h0M328 258h0M365 265h0M363 258h0M370 262h0M372 261h0M366 263h0M371 262h0M369 266h0M362 264h0M369 265h0M370 258h0M370 266h0M369 265h0M383 224h0M374 231h0M376 231h0M380 234h0M398 230h0M391 234h0M397 270h0M389 270h0M403 222h0M394 216h0M402 216h0M388 230h0M396 225h0M391 229h0M400 225h0M416 229h0M419 227h0M427 228h0M422 225h0M415 232h0M416 232h0M408 240h0M458 215h0M437 242h0M436 238h0M447 236h0M455 239h0M451 234h0M483 183h0M478 183h0M481 189h0M582 166h0M577 166h0M557 165h0M551 168h0M606 173h0M598 172h0M619 177h0M620 172h0M621 172h0M640 169h0M650 172h0M650 173h0M690 183h0M688 184h0M698 206h0M704 209h0M658 201h0M651 199h0M648 217h0M655 221h0M648 215h0M645 215h0M656 220h0M658 214h0M656 217h0M777 252h0M780 254h0M780 251h0M770 252h0M769 249h0M770 253h0M764 251h0M769 249h0M781 255h0M643 244h0M659 253h0M686 286h0M629 294h0M632 292h0M629 288h0M638 287h0M639 284h0M630 288h0M540 264h0M549 261h0M543 265h0M551 265h0M548 257h0M555 296h0M560 297h0M560 293h0M566 288h0M585 323h0M586 324h0M585 320h0M567 246h0M580 238h0M571 248h0M617 256h0M617 256h0M502 269h0M497 271h0M518 273h0M521 272h0M504 275h0M502 277h0M500 278h0M507 270h0M504 277h0M459 252h0M460 250h0M465 250h0M466 251h0M482 291h0M486 281h0M477 288h0M484 282h0M489 293h0M504 295h0M526 287h0M527 280h0M529 288h0M523 287h0M528 279h0M528 279h0M519 281h0M479 303h0M478 313h0M486 312h0M488 305h0M478 306h0M466 320h0M456 316h0M455 311h0M464 313h0M463 318h0M452 316h0M430 264h0M426 266h0M421 267h0M542 253h0M544 257h0M542 256h0M539 259h0M539 258h0M544 258h0M536 260h0M408 340h0M417 344h0M415 340h0M418 343h0M405 334h0M408 345h0M414 339h0M407 336h0M413 333h0M435 344h0M426 343h0M433 344h0M427 345h0M433 344h0M446 351h0M450 351h0M438 355h0M444 351h0M443 349h0M448 355h0M452 355h0M466 355h0M464 355h0M476 355h0M471 360h0M469 356h0M465 362h0M475 366h0M475 354h0M465 356h0M464 360h0M480 358h0M481 357h0M500 356h0M498 352h0M497 353h0M446 320h0M452 322h0M446 321h0M471 310h0M480 324h0M478 319h0M466 318h0M481 321h0M466 320h0M481 319h0M473 313h0M470 323h0M485 324h0M485 318h0M485 321h0M497 318h0M498 320h0M494 319h0M344 300h0M349 296h0M346 296h0M343 301h0M338 302h0M390 282h0M377 300h0M366 305h0M395 291h0M406 295h0M407 296h0M404 291h0M408 291h0M409 292h0M397 294h0M414 296h0M413 299h0M414 298h0M408 260h0M403 265h0M417 263h0M545 215h0M546 219h0M605 207h0M609 204h0M602 211h0M610 205h0M572 173h0M571 174h0M569 166h0M576 171h0M577 172h0M569 175h0M566 170h0M594 175h0M591 171h0M592 168h0M589 169h0M356 295h0M360 292h0M360 294h0M357 293h0M358 293h0M561 171h0M565 176h0M561 174h0M574 179h0M585 184h0M574 174h0M577 183h0M583 179h0M610 181h0M619 187h0M617 185h0M612 181h0M641 180h0M641 177h0M609 226h0M609 228h0M626 232h0M630 225h0M630 224h0M629 231h0M630 228h0M595 217h0M592 215h0M602 216h0M396 333h0M414 341h0M419 342h0M420 346h0M417 343h0M417 347h0M435 356h0M433 348h0M442 352h0M434 348h0M441 349h0M460 357h0M454 359h0M464 357h0M456 357h0M455 357h0M462 357h0M454 360h0M481 364h0M481 365h0M491 359h0M492 358h0M511 352h0M518 356h0M517 352h0M428 221h0M404 230h0M408 230h0M433 236h0M426 241h0M427 242h0M429 238h0" stroke="#0ca4c8" stroke-width="3"/>
<path d="M296 256h0M314 247h0M363 265h0M364 264h0M365 270h0M367 262h0M367 262h0M371 259h0M360 263h0M365 259h0M364 260h0M373 266h0M378 221h0M380 225h0M373 236h0M381 236h0M397 223h0M397 224h0M396 220h0M396 223h0M398 232h0M392 267h0M394 267h0M393 265h0M387 271h0M395 218h0M400 216h0M397 227h0M394 223h0M396 233h0M398 235h0M424 221h0M415 229h0M467 210h0M444 237h0M441 240h0M437 241h0M608 172h0M593 175h0M623 177h0M624 173h0M623 176h0M649 174h0M689 185h0M709 206h0M707 203h0M699 204h0M655 200h0M651 197h0M735 221h0M736 221h0M653 219h0M656 216h0M781 250h0M770 245h0M767 245h0M760 244h0M655 253h0M654 252h0M545 258h0M550 259h0M552 256h0M543 265h0M553 258h0M545 260h0M561 293h0M554 290h0M557 295h0M561 292h0M585 322h0M572 244h0M574 244h0M581 250h0M500 271h0M508 270h0M512 273h0M509 273h0M504 275h0M500 271h0M507 271h0M458 249h0M487 283h0M486 282h0M524 285h0M518 279h0M517 289h0M479 308h0M485 311h0M460 314h0M419 267h0M420 270h0M537 255h0M539 250h0M415 333h0M402 340h0M410 342h0M409 338h0M431 346h0M446 360h0M447 348h0M444 358h0M445 358h0M443 347h0M471 370h0M466 353h0M473 367h0M467 361h0M476 356h0M476 356h0M479 359h0M504 357h0M495 357h0M497 354h0M469 331h0M477 316h0M469 324h0M477 317h0M479 319h0M470 324h0M484 316h0M486 321h0M485 320h0M338 299h0M344 296h0M373 302h0M404 297h0M417 298h0M410 264h0M414 263h0M543 223h0M595 175h0M591 178h0M597 169h0M596 177h0M592 180h0M588 176h0M361 290h0M560 168h0M583 171h0M576 180h0M574 177h0M617 177h0M617 187h0M605 225h0M612 220h0M610 225h0M605 223h0M616 224h0M597 219h0M426 347h0M419 338h0M425 341h0M440 353h0M442 351h0M435 354h0M466 355h0M464 360h0M464 358h0M488 364h0M479 364h0M490 364h0M490 361h0M515 346h0M513 352h0M406 227h0M403 230h0M399 227h0M459 227h0M459 228h0" stroke="#0ca4c8" stroke-width="4"/>
<path d="M296 258h0M293 250h0M291 255h0M299 256h0M293 259h0M316 243h0M315 247h0M316 245h0M326 251h0M328 253h0M325 252h0M353 267h0M347 265h0M346 264h0M352 266h0M355 265h0M323 256h0M324 257h0M345 272h0M350 268h0M368 257h0M366 259h0M367 257h0M364 257h0M359 253h0M361 256h0M368 258h0M368 262h0M367 265h0M366 261h0M383 219h0M382 231h0M379 225h0M380 230h0M396 227h0M397 220h0M402 221h0M385 266h0M395 271h0M407 224h0M398 221h0M395 220h0M401 219h0M399 213h0M394 217h0M392 227h0M397 230h0M397 225h0M423 230h0M418 219h0M427 228h0M425 228h0M424 228h0M417 218h0M414 229h0M425 224h0M416 222h0M425 226h0M406 231h0M418 238h0M463 215h0M460 211h0M461 211h0M456 213h0M463 209h0M460 211h0M435 236h0M447 232h0M440 231h0M434 234h0M443 232h0M458 233h0M453 232h0M460 236h0M480 187h0M483 186h0M582 166h0M550 161h0M552 164h0M559 164h0M594 172h0M599 180h0M595 172h0M599 176h0M599 177h0M593 170h0M599 172h0M613 174h0M623 169h0M641 170h0M646 172h0M658 173h0M667 169h0M665 169h0M666 203h0M685 182h0M688 182h0M698 205h0M708 204h0M702 205h0M702 210h0M699 207h0M655 197h0M655 195h0M647 198h0M692 231h0M739 223h0M737 224h0M653 222h0M650 217h0M782 248h0M773 252h0M772 249h0M768 253h0M771 249h0M769 250h0M770 250h0M656 249h0M657 254h0M659 245h0M663 247h0M657 255h0M683 286h0M630 290h0M633 283h0M630 286h0M700 234h0M704 232h0M705 232h0M552 255h0M543 259h0M545 256h0M552 295h0M564 284h0M566 289h0M564 293h0M561 289h0M559 292h0M555 293h0M563 292h0M557 289h0M565 288h0M590 325h0M588 324h0M592 317h0M587 322h0M575 245h0M578 239h0M577 241h0M615 246h0M617 248h0M608 254h0M611 251h0M501 267h0M502 269h0M523 267h0M523 267h0M518 273h0M518 264h0M511 271h0M518 263h0M509 265h0M508 273h0M504 271h0M464 249h0M481 288h0M491 290h0M492 289h0M502 292h0M516 285h0M525 284h0M524 282h0M477 309h0M480 304h0M475 307h0M464 309h0M463 316h0M468 313h0M456 316h0M453 316h0M456 310h0M459 315h0M454 310h0M546 257h0M540 254h0M545 252h0M410 338h0M412 339h0M411 331h0M410 337h0M403 341h0M414 342h0M405 334h0M415 340h0M448 347h0M448 353h0M440 348h0M465 358h0M474 357h0M476 355h0M475 356h0M474 355h0M480 361h0M477 358h0M475 357h0M475 355h0M482 354h0M480 359h0M477 360h0M498 348h0M494 357h0M502 352h0M502 351h0M500 350h0M494 355h0M464 327h0M474 322h0M469 312h0M467 324h0M475 319h0M466 325h0M487 312h0M486 318h0M343 302h0M343 296h0M348 301h0M385 280h0M384 281h0M372 307h0M371 302h0M378 304h0M366 303h0M401 294h0M404 296h0M400 290h0M402 285h0M405 287h0M406 287h0M408 295h0M407 286h0M400 299h0M410 299h0M411 295h0M410 260h0M549 220h0M547 219h0M544 220h0M611 203h0M604 208h0M607 211h0M604 206h0M572 168h0M573 167h0M584 166h0M591 173h0M583 176h0M358 293h0M361 297h0M359 294h0M560 176h0M564 173h0M560 176h0M565 175h0M565 173h0M567 169h0M579 184h0M572 177h0M587 180h0M582 171h0M580 173h0M584 172h0M587 177h0M581 181h0M610 178h0M614 185h0M615 179h0M636 172h0M635 181h0M642 179h0M632 181h0M549 164h0M607 227h0M605 219h0M609 228h0M603 224h0M605 223h0M621 228h0M624 221h0M629 226h0M624 231h0M623 223h0M620 229h0M629 227h0M627 223h0M602 216h0M601 219h0M425 345h0M417 343h0M419 341h0M415 344h0M441 351h0M439 347h0M435 349h0M459 357h0M466 361h0M489 361h0M520 349h0M511 351h0M516 347h0M517 352h0M408 223h0M399 226h0M401 227h0M403 228h0M426 240h0" stroke="#06a7c3" stroke-width="2"/>
<path d="M297 256h0M292 258h0M325 252h0M325 253h0M346 261h0M349 268h0M348 270h0M321 257h0M351 269h0M346 273h0M346 272h0M371 255h0M366 259h0M364 265h0M365 259h0M361 261h0M369 268h0M372 266h0M366 264h0M367 256h0M369 261h0M365 263h0M360 258h0M382 222h0M379 223h0M382 224h0M379 220h0M384 230h0M394 222h0M397 228h0M397 229h0M394 224h0M390 226h0M399 222h0M391 227h0M396 229h0M392 266h0M391 267h0M390 274h0M390 266h0M385 266h0M394 268h0M397 213h0M396 217h0M400 220h0M404 217h0M396 224h0M395 227h0M393 225h0M428 225h0M464 207h0M432 235h0M440 233h0M433 232h0M439 238h0M448 236h0M433 234h0M433 233h0M441 238h0M480 185h0M477 186h0M580 166h0M573 169h0M570 166h0M554 159h0M606 170h0M595 173h0M607 177h0M595 169h0M599 172h0M606 171h0M605 172h0M616 171h0M620 172h0M646 166h0M643 173h0M657 171h0M665 171h0M664 172h0M688 184h0M689 182h0M703 200h0M702 210h0M707 207h0M655 200h0M652 201h0M651 199h0M651 192h0M656 197h0M701 229h0M738 220h0M650 211h0M649 220h0M651 221h0M647 213h0M649 212h0M658 217h0M775 255h0M780 253h0M774 254h0M770 246h0M771 253h0M768 251h0M765 245h0M763 251h0M773 249h0M765 244h0M640 243h0M648 241h0M658 246h0M664 249h0M686 286h0M630 289h0M641 290h0M637 288h0M544 256h0M548 254h0M561 289h0M553 292h0M592 322h0M590 316h0M584 320h0M566 247h0M572 240h0M577 237h0M571 240h0M574 237h0M570 244h0M570 240h0M612 247h0M614 251h0M493 268h0M502 270h0M513 267h0M511 275h0M509 264h0M518 265h0M510 267h0M508 266h0M465 249h0M485 288h0M479 285h0M484 285h0M493 286h0M488 288h0M483 285h0M526 287h0M520 283h0M475 305h0M485 306h0M481 311h0M474 310h0M483 303h0M476 310h0M477 305h0M462 309h0M456 310h0M459 316h0M460 310h0M546 251h0M537 255h0M544 253h0M538 251h0M535 251h0M414 332h0M417 335h0M415 340h0M440 349h0M447 351h0M438 352h0M440 349h0M462 362h0M471 358h0M468 357h0M465 361h0M474 362h0M474 356h0M484 354h0M477 361h0M481 357h0M475 358h0M505 356h0M479 326h0M476 312h0M459 320h0M473 320h0M462 326h0M468 323h0M477 319h0M479 322h0M469 321h0M477 322h0M493 310h0M499 318h0M485 317h0M494 313h0M486 316h0M342 304h0M343 301h0M337 301h0M341 301h0M383 281h0M393 282h0M389 280h0M393 278h0M375 301h0M409 288h0M408 291h0M407 289h0M400 289h0M409 292h0M408 289h0M401 297h0M550 220h0M546 218h0M541 216h0M542 219h0M604 211h0M602 199h0M599 204h0M605 206h0M609 207h0M607 204h0M602 200h0M574 172h0M577 169h0M572 175h0M577 168h0M573 172h0M569 172h0M576 171h0M573 164h0M588 166h0M588 170h0M583 176h0M587 167h0M593 172h0M594 168h0M585 178h0M596 176h0M594 167h0M403 286h0M358 297h0M362 290h0M363 295h0M355 289h0M355 293h0M358 296h0M561 177h0M565 167h0M560 175h0M567 169h0M559 170h0M583 179h0M575 178h0M583 176h0M588 177h0M578 171h0M583 177h0M615 181h0M615 183h0M621 180h0M613 178h0M609 184h0M608 181h0M636 184h0M638 180h0M636 172h0M635 184h0M635 176h0M638 174h0M597 210h0M592 209h0M617 222h0M609 221h0M617 224h0M614 216h0M614 221h0M616 222h0M626 227h0M624 231h0M623 223h0M601 217h0M600 218h0M415 340h0M423 338h0M439 352h0M437 346h0M462 360h0M467 358h0M487 363h0M493 362h0M420 221h0M421 220h0M398 222h0M402 221h0M401 230h0M398 225h0M404 230h0M405 220h0M400 220h0M429 235h0M457 227h0M458 226h0" stroke="#06a7c3" stroke-width="3"/>
<path d="M297 260h0M291 257h0M291 256h0M295 256h0M348 269h0M349 270h0M350 273h0M352 270h0M362 259h0M362 252h0M360 263h0M366 259h0M358 262h0M359 259h0M362 255h0M368 266h0M367 259h0M368 263h0M361 263h0M379 222h0M376 230h0M394 229h0M395 265h0M395 266h0M405 215h0M403 219h0M401 218h0M391 233h0M400 227h0M417 231h0M425 220h0M413 221h0M465 218h0M465 216h0M439 239h0M448 237h0M443 237h0M435 241h0M453 234h0M457 233h0M451 232h0M576 169h0M568 164h0M575 166h0M552 165h0M554 165h0M600 172h0M601 178h0M598 173h0M598 170h0M625 171h0M644 172h0M647 169h0M649 169h0M706 203h0M703 209h0M702 207h0M698 203h0M656 197h0M657 192h0M650 194h0M646 197h0M657 201h0M738 223h0M734 218h0M654 213h0M655 220h0M645 217h0M653 210h0M775 252h0M773 252h0M771 254h0M643 244h0M658 256h0M659 253h0M545 265h0M575 245h0M581 244h0M569 242h0M571 242h0M607 253h0M493 267h0M492 269h0M498 267h0M518 265h0M519 268h0M506 270h0M507 275h0M464 249h0M471 250h0M483 288h0M491 292h0M481 282h0M493 293h0M522 284h0M531 284h0M526 278h0M456 318h0M414 341h0M404 341h0M429 341h0M453 357h0M437 353h0M442 349h0M470 359h0M463 361h0M474 358h0M479 319h0M468 323h0M473 314h0M472 320h0M469 324h0M479 325h0M471 318h0M466 312h0M462 328h0M472 322h0M476 327h0M490 320h0M487 310h0M497 317h0M484 320h0M385 282h0M368 301h0M377 305h0M374 305h0M398 292h0M604 204h0M611 203h0M603 206h0M586 197h0M592 200h0M570 164h0M577 176h0M569 174h0M571 173h0M565 175h0M593 179h0M588 171h0M586 171h0M589 177h0M359 288h0M357 295h0M558 164h0M565 171h0M556 173h0M576 174h0M578 177h0M576 179h0M585 184h0M581 171h0M613 181h0M612 185h0M619 181h0M616 185h0M640 173h0M608 219h0M608 225h0M628 225h0M630 224h0M602 218h0M425 339h0M456 356h0M488 356h0M488 357h0M491 356h0M512 349h0M407 221h0M428 240h0" stroke="#06a7c3" stroke-width="4"/>
<path d="M303 249h0M301 251h0M296 256h0M298 255h0M291 256h0M298 257h0M318 244h0M315 244h0M333 250h0M328 253h0M350 263h0M347 268h0M354 263h0M350 264h0M347 267h0M351 267h0M345 267h0M346 271h0M353 270h0M346 265h0M338 271h0M344 272h0M370 259h0M367 250h0M368 255h0M370 262h0M364 264h0M365 260h0M365 257h0M361 259h0M370 256h0M380 223h0M399 219h0M397 217h0M395 220h0M396 220h0M396 222h0M401 227h0M396 268h0M388 270h0M413 223h0M413 222h0M400 213h0M402 214h0M396 222h0M403 221h0M401 226h0M422 228h0M420 221h0M417 225h0M423 221h0M416 221h0M423 228h0M422 224h0M426 225h0M467 214h0M462 209h0M463 217h0M465 216h0M456 215h0M433 235h0M439 234h0M432 234h0M438 235h0M438 240h0M441 230h0M447 236h0M446 235h0M482 184h0M484 185h0M574 168h0M580 164h0M567 161h0M555 159h0M559 161h0M599 182h0M601 176h0M601 176h0M607 178h0M597 176h0M595 175h0M592 176h0M620 172h0M650 167h0M644 174h0M647 170h0M642 169h0M648 165h0M662 170h0M660 199h0M663 202h0M705 198h0M701 204h0M701 206h0M703 196h0M703 197h0M699 204h0M656 197h0M648 197h0M649 202h0M645 198h0M656 198h0M647 199h0M699 230h0M699 229h0M701 228h0M733 218h0M739 216h0M738 224h0M651 213h0M652 210h0M657 220h0M775 249h0M780 245h0M778 251h0M775 253h0M780 245h0M765 252h0M764 243h0M764 242h0M640 242h0M648 243h0M639 242h0M662 248h0M658 251h0M657 246h0M672 293h0M668 294h0M640 285h0M708 231h0M652 287h0M552 258h0M561 287h0M562 287h0M560 285h0M560 286h0M555 287h0M593 322h0M585 320h0M587 317h0M587 321h0M568 243h0M572 240h0M578 242h0M571 239h0M614 247h0M496 267h0M502 265h0M497 265h0M509 273h0M513 265h0M511 269h0M514 273h0M505 273h0M499 275h0M468 249h0M481 282h0M520 280h0M487 307h0M485 303h0M478 305h0M544 250h0M413 336h0M418 339h0M416 334h0M437 350h0M446 348h0M449 349h0M473 354h0M478 351h0M479 353h0M506 352h0M471 311h0M462 325h0M466 319h0M460 316h0M476 316h0M478 317h0M463 322h0M461 321h0M468 319h0M486 311h0M488 311h0M484 315h0M496 314h0M343 302h0M348 299h0M345 304h0M346 294h0M339 296h0M338 303h0M394 280h0M369 303h0M400 295h0M401 286h0M401 285h0M398 294h0M410 291h0M400 285h0M403 287h0M410 294h0M414 296h0M412 295h0M411 297h0M555 219h0M546 217h0M549 217h0M545 216h0M600 204h0M601 208h0M602 210h0M606 201h0M601 206h0M576 166h0M576 170h0M570 165h0M566 166h0M563 172h0M582 175h0M582 174h0M587 173h0M585 172h0M594 168h0M584 167h0M402 283h0M362 295h0M359 294h0M357 297h0M361 296h0M565 167h0M557 176h0M562 175h0M556 167h0M555 172h0M557 165h0M584 178h0M577 178h0M583 180h0M579 177h0M573 177h0M581 173h0M583 178h0M584 175h0M620 183h0M620 181h0M612 177h0M616 181h0M637 174h0M632 173h0M633 177h0M635 182h0M641 175h0M544 163h0M547 163h0M601 208h0M593 208h0M596 212h0M595 208h0M617 220h0M614 226h0M616 224h0M606 223h0M610 226h0M622 227h0M623 227h0M629 228h0M622 229h0M621 222h0M597 215h0M431 350h0M438 350h0M465 356h0M457 355h0M493 355h0M422 216h0M405 222h0M408 221h0M402 228h0M426 236h0M459 225h0M456 228h0M464 223h0" stroke="#07a8bd" stroke-width="2"/>
<path d="M300 249h0M302 250h0M347 267h0M347 269h0M340 272h0M349 267h0M337 267h0M340 268h0M371 263h0M357 256h0M373 261h0M362 264h0M368 264h0M364 263h0M370 262h0M371 265h0M366 263h0M370 256h0M368 262h0M364 258h0M366 259h0M367 256h0M367 259h0M385 220h0M393 229h0M393 222h0M401 222h0M393 225h0M393 227h0M389 268h0M390 264h0M385 269h0M384 264h0M392 263h0M385 265h0M388 270h0M406 222h0M395 219h0M397 224h0M423 223h0M419 222h0M422 226h0M461 211h0M462 210h0M463 212h0M460 214h0M457 214h0M462 214h0M439 236h0M439 238h0M435 237h0M439 231h0M434 232h0M453 231h0M459 232h0M631 169h0M577 166h0M581 162h0M573 169h0M570 168h0M601 178h0M599 175h0M600 170h0M597 166h0M594 171h0M594 172h0M600 171h0M597 179h0M596 179h0M621 171h0M624 170h0M621 173h0M643 172h0M640 172h0M647 174h0M646 175h0M644 171h0M642 165h0M645 165h0M655 171h0M662 168h0M668 172h0M668 200h0M669 199h0M701 202h0M647 194h0M649 194h0M691 230h0M698 230h0M691 226h0M690 227h0M691 231h0M696 231h0M689 229h0M735 222h0M735 218h0M738 221h0M653 218h0M657 220h0M651 212h0M655 220h0M656 219h0M652 210h0M654 210h0M651 210h0M649 217h0M773 246h0M773 250h0M778 244h0M774 249h0M652 249h0M658 250h0M659 244h0M662 252h0M654 249h0M657 250h0M660 251h0M663 291h0M673 292h0M686 286h0M679 282h0M638 288h0M637 285h0M637 286h0M705 231h0M656 287h0M544 256h0M587 315h0M589 318h0M587 320h0M591 319h0M591 319h0M580 237h0M573 236h0M609 248h0M610 246h0M496 265h0M493 270h0M503 262h0M520 274h0M521 267h0M510 268h0M513 265h0M514 272h0M515 273h0M514 262h0M504 270h0M466 244h0M523 280h0M526 282h0M480 304h0M476 304h0M461 308h0M540 249h0M407 334h0M447 349h0M448 353h0M452 354h0M450 350h0M448 352h0M466 354h0M461 359h0M479 361h0M478 356h0M478 351h0M482 356h0M475 358h0M481 353h0M478 357h0M501 348h0M470 322h0M467 316h0M464 314h0M462 324h0M465 312h0M478 325h0M466 314h0M472 324h0M474 312h0M462 313h0M487 311h0M491 310h0M491 310h0M492 312h0M344 295h0M338 297h0M338 297h0M350 300h0M342 303h0M383 280h0M383 278h0M393 276h0M390 279h0M366 302h0M374 299h0M396 295h0M396 293h0M397 296h0M402 287h0M408 296h0M406 297h0M409 297h0M599 203h0M607 204h0M604 201h0M603 209h0M607 201h0M605 204h0M600 200h0M586 198h0M588 200h0M589 198h0M619 216h0M561 171h0M570 166h0M564 170h0M571 166h0M573 165h0M566 167h0M575 168h0M567 169h0M590 179h0M594 176h0M583 176h0M594 165h0M593 180h0M582 171h0M586 175h0M394 284h0M362 297h0M554 170h0M568 171h0M552 167h0M558 174h0M566 165h0M561 166h0M564 165h0M554 171h0M567 174h0M578 171h0M579 175h0M579 171h0M577 178h0M580 179h0M576 173h0M583 177h0M616 179h0M615 178h0M617 180h0M614 180h0M638 177h0M639 180h0M629 179h0M636 171h0M545 165h0M595 209h0M593 210h0M600 210h0M613 226h0M616 222h0M629 225h0M621 225h0M626 221h0M599 214h0M424 339h0M415 343h0M424 338h0M432 350h0M432 347h0M465 354h0M456 357h0M461 353h0M488 362h0M494 356h0M487 363h0M490 358h0M498 361h0M425 222h0M422 221h0M411 225h0M404 224h0M406 225h0M429 236h0M453 223h0" stroke="#07a8bd" stroke-width="3"/>
<path d="M296 249h0M295 257h0M315 247h0M324 249h0M342 267h0M349 260h0M346 262h0M350 267h0M365 258h0M365 252h0M360 259h0M368 258h0M380 224h0M384 225h0M391 223h0M394 221h0M396 222h0M402 224h0M383 270h0M385 265h0M387 269h0M398 226h0M395 223h0M413 224h0M423 226h0M412 225h0M458 210h0M462 213h0M463 214h0M441 242h0M441 231h0M435 234h0M455 232h0M575 164h0M569 167h0M593 177h0M604 168h0M621 174h0M619 172h0M645 169h0M640 169h0M549 158h0M662 169h0M654 170h0M661 169h0M662 169h0M710 205h0M706 203h0M702 207h0M696 204h0M703 208h0M698 203h0M657 195h0M647 196h0M737 224h0M737 219h0M732 220h0M653 215h0M654 219h0M774 250h0M779 245h0M765 248h0M643 239h0M648 245h0M659 250h0M656 245h0M657 251h0M669 293h0M684 287h0M631 285h0M633 284h0M656 288h0M552 257h0M545 255h0M551 290h0M592 317h0M585 323h0M593 321h0M589 324h0M592 320h0M577 240h0M581 239h0M614 247h0M496 271h0M514 274h0M514 272h0M511 262h0M519 271h0M518 272h0M467 246h0M485 285h0M486 286h0M488 282h0M461 312h0M543 251h0M416 335h0M407 335h0M448 347h0M471 358h0M479 354h0M481 351h0M506 353h0M476 315h0M464 323h0M496 313h0M342 294h0M347 296h0M380 276h0M399 286h0M404 298h0M396 293h0M400 298h0M401 287h0M413 296h0M410 297h0M411 296h0M610 201h0M606 208h0M589 196h0M590 197h0M588 167h0M399 284h0M365 288h0M365 295h0M365 290h0M555 176h0M557 163h0M561 168h0M615 181h0M552 161h0M545 163h0M545 163h0M589 207h0M615 221h0M606 222h0M609 218h0M625 220h0M601 214h0M435 349h0M492 355h0M512 349h0M427 220h0M429 219h0M408 222h0M412 226h0M403 228h0M429 238h0M463 224h0" stroke="#07a8bd" stroke-width="4"/>
<path d="M302 249h0M303 248h0M299 252h0M318 246h0M314 243h0M316 243h0M314 246h0M329 252h0M340 265h0M352 262h0M346 269h0M337 268h0M352 262h0M353 264h0M339 267h0M363 253h0M373 257h0M366 256h0M365 260h0M402 215h0M404 214h0M395 216h0M402 224h0M392 220h0M393 222h0M397 222h0M393 263h0M395 269h0M392 270h0M395 268h0M393 272h0M412 219h0M417 221h0M396 218h0M415 220h0M418 220h0M426 227h0M460 213h0M440 230h0M437 232h0M432 232h0M445 234h0M443 238h0M436 235h0M569 163h0M580 160h0M576 158h0M599 167h0M594 176h0M599 170h0M593 174h0M594 175h0M646 165h0M646 167h0M651 170h0M556 161h0M653 169h0M654 167h0M664 167h0M667 197h0M670 199h0M663 200h0M709 201h0M709 207h0M651 198h0M655 192h0M655 193h0M702 227h0M700 224h0M698 227h0M700 223h0M699 229h0M695 229h0M697 228h0M735 220h0M650 213h0M654 210h0M756 231h0M757 231h0M771 247h0M780 247h0M778 245h0M780 247h0M775 251h0M772 246h0M764 240h0M757 240h0M764 243h0M763 238h0M639 236h0M647 244h0M645 239h0M647 242h0M649 243h0M646 244h0M642 241h0M645 238h0M661 249h0M670 290h0M667 290h0M668 294h0M680 283h0M702 229h0M706 233h0M652 286h0M652 287h0M589 323h0M587 316h0M592 319h0M594 320h0M587 321h0M590 317h0M571 237h0M497 267h0M506 259h0M493 265h0M493 270h0M497 271h0M507 263h0M501 270h0M498 260h0M504 260h0M497 268h0M502 265h0M505 262h0M518 266h0M511 261h0M525 279h0M542 250h0M472 355h0M479 355h0M481 354h0M480 356h0M468 319h0M472 314h0M469 311h0M471 319h0M488 310h0M345 295h0M394 277h0M385 278h0M391 278h0M388 281h0M389 274h0M395 280h0M404 288h0M397 290h0M395 294h0M411 290h0M402 287h0M559 219h0M553 219h0M611 203h0M608 200h0M606 208h0M607 205h0M602 205h0M594 197h0M589 176h0M594 176h0M587 168h0M586 171h0M318 244h0M319 244h0M397 284h0M555 174h0M558 165h0M561 174h0M563 174h0M587 178h0M585 175h0M577 172h0M579 171h0M581 178h0M618 182h0M614 177h0M638 179h0M635 177h0M631 178h0M628 179h0M634 174h0M635 172h0M633 179h0M544 162h0M552 163h0M592 209h0M594 206h0M590 210h0M592 211h0M606 224h0M608 220h0M613 222h0M607 220h0M626 228h0M627 224h0M629 228h0M626 224h0M622 228h0M491 355h0M489 357h0M516 347h0M430 215h0M418 215h0M422 217h0M423 216h0M431 216h0M421 220h0M421 214h0M411 227h0M409 227h0M411 224h0M403 225h0M407 224h0M403 226h0" stroke="#0fabb8" stroke-width="2"/>
<path d="M297 248h0M299 255h0M298 254h0M297 254h0M291 252h0M296 250h0M297 255h0M311 243h0M314 241h0M322 250h0M326 245h0M325 252h0M327 251h0M325 247h0M331 251h0M350 267h0M346 264h0M348 267h0M347 265h0M347 264h0M339 269h0M344 272h0M339 267h0M360 259h0M370 259h0M369 261h0M371 258h0M366 255h0M366 254h0M365 256h0M363 261h0M360 262h0M380 220h0M384 220h0M397 214h0M395 222h0M392 224h0M396 221h0M397 219h0M384 269h0M390 270h0M397 214h0M400 220h0M396 217h0M398 213h0M419 218h0M419 219h0M426 221h0M448 219h0M442 217h0M444 238h0M439 238h0M583 161h0M577 166h0M571 165h0M575 166h0M572 160h0M579 157h0M576 168h0M570 166h0M554 159h0M602 173h0M602 171h0M594 172h0M601 173h0M595 171h0M648 173h0M639 169h0M643 168h0M551 156h0M664 168h0M663 198h0M658 198h0M661 200h0M699 198h0M702 201h0M700 197h0M655 199h0M650 200h0M645 199h0M694 227h0M695 227h0M696 223h0M699 231h0M690 224h0M740 216h0M733 221h0M653 212h0M655 217h0M653 214h0M653 209h0M656 214h0M778 249h0M772 247h0M783 248h0M764 249h0M770 250h0M766 250h0M770 248h0M761 243h0M636 237h0M643 245h0M646 244h0M640 242h0M651 243h0M643 241h0M647 245h0M661 250h0M661 252h0M657 248h0M678 282h0M684 285h0M681 287h0M681 284h0M701 232h0M705 228h0M550 256h0M560 285h0M594 320h0M609 247h0M496 268h0M501 263h0M491 262h0M504 266h0M497 270h0M504 270h0M521 265h0M515 268h0M516 262h0M510 268h0M508 264h0M465 245h0M441 349h0M478 352h0M478 319h0M473 319h0M467 316h0M461 319h0M475 310h0M471 314h0M465 317h0M479 321h0M460 321h0M385 282h0M383 272h0M409 288h0M403 291h0M604 201h0M604 203h0M605 201h0M605 209h0M610 200h0M608 206h0M588 197h0M586 193h0M585 198h0M593 196h0M596 195h0M589 164h0M401 282h0M402 286h0M396 285h0M402 282h0M366 290h0M356 287h0M356 294h0M562 162h0M564 172h0M560 172h0M583 175h0M579 172h0M579 177h0M638 176h0M637 179h0M630 180h0M637 179h0M642 178h0M630 180h0M549 164h0M552 160h0M549 162h0M548 163h0M551 163h0M595 203h0M601 207h0M595 210h0M592 206h0M599 206h0M602 206h0M615 224h0M604 220h0M625 222h0M496 360h0M496 358h0M494 358h0M420 214h0M419 215h0M427 214h0M425 221h0M425 219h0M424 217h0M407 220h0M409 222h0M458 222h0M455 227h0M455 223h0M455 227h0M458 222h0" stroke="#0fabb8" stroke-width="3"/>
<path d="M296 257h0M347 262h0M350 270h0M335 265h0M364 259h0M363 256h0M364 255h0M357 261h0M372 254h0M365 258h0M363 256h0M361 263h0M382 220h0M396 217h0M399 217h0M386 268h0M386 270h0M408 219h0M405 217h0M401 212h0M460 213h0M435 230h0M441 233h0M443 231h0M437 234h0M443 231h0M637 166h0M568 162h0M568 166h0M581 161h0M602 170h0M645 169h0M658 173h0M660 171h0M663 166h0M667 171h0M667 199h0M667 200h0M663 201h0M662 201h0M698 199h0M701 197h0M697 207h0M647 199h0M658 194h0M689 228h0M693 230h0M655 211h0M647 219h0M656 251h0M669 293h0M699 227h0M589 322h0M591 317h0M587 314h0M499 269h0M499 265h0M500 264h0M515 266h0M515 262h0M478 353h0M477 317h0M474 310h0M472 310h0M469 311h0M474 314h0M384 276h0M388 280h0M404 292h0M412 295h0M609 199h0M607 205h0M594 193h0M593 170h0M585 170h0M593 171h0M582 172h0M401 287h0M397 286h0M355 291h0M362 292h0M362 290h0M552 170h0M562 168h0M562 171h0M566 168h0M566 171h0M562 167h0M586 176h0M611 181h0M630 174h0M640 175h0M551 165h0M599 204h0M591 204h0M616 225h0M606 222h0M613 224h0M628 221h0M619 227h0M439 346h0M424 212h0M461 224h0" stroke="#0fabb8" stroke-width="4"/>
<path d="M293 251h0M332 253h0M331 250h0M332 251h0M328 249h0M330 247h0M344 265h0M351 263h0M351 262h0M352 263h0M354 264h0M347 263h0M345 261h0M336 261h0M345 259h0M341 260h0M350 269h0M345 269h0M364 253h0M366 254h0M373 257h0M369 258h0M358 258h0M367 253h0M359 260h0M373 258h0M365 252h0M359 257h0M367 261h0M359 260h0M379 220h0M384 219h0M400 218h0M399 212h0M403 213h0M392 221h0M392 263h0M389 265h0M387 267h0M391 262h0M416 211h0M416 220h0M412 216h0M408 224h0M407 219h0M409 216h0M417 220h0M405 218h0M409 217h0M404 217h0M426 221h0M421 218h0M422 221h0M461 208h0M435 235h0M443 232h0M440 232h0M436 232h0M445 229h0M437 229h0M617 158h0M631 164h0M635 164h0M571 155h0M570 161h0M567 156h0M577 159h0M568 154h0M566 157h0M570 159h0M577 158h0M572 157h0M570 164h0M567 155h0M568 167h0M578 163h0M597 169h0M643 170h0M642 168h0M546 157h0M562 163h0M557 159h0M660 171h0M665 197h0M668 201h0M663 195h0M662 195h0M664 198h0M665 195h0M698 199h0M700 197h0M708 199h0M701 196h0M702 199h0M648 194h0M657 193h0M652 193h0M724 218h0M696 223h0M689 223h0M692 228h0M698 225h0M701 222h0M741 219h0M738 217h0M777 246h0M772 246h0M768 244h0M762 240h0M764 238h0M630 232h0M634 234h0M649 236h0M645 235h0M640 237h0M645 236h0M647 243h0M649 238h0M644 234h0M649 239h0M650 237h0M658 245h0M658 245h0M671 292h0M674 288h0M672 288h0M663 291h0M685 282h0M687 285h0M680 278h0M633 284h0M707 227h0M702 225h0M702 228h0M698 230h0M704 225h0M698 226h0M707 226h0M704 228h0M659 285h0M654 286h0M588 279h0M585 320h0M594 320h0M501 256h0M497 263h0M503 255h0M497 254h0M494 259h0M505 266h0M503 268h0M493 262h0M498 267h0M500 259h0M493 264h0M519 263h0M510 267h0M507 269h0M510 270h0M480 354h0M466 310h0M475 314h0M468 311h0M469 314h0M474 311h0M476 315h0M472 313h0M462 312h0M384 282h0M383 273h0M393 272h0M382 279h0M383 274h0M376 302h0M377 302h0M377 302h0M398 288h0M400 287h0M399 289h0M398 285h0M405 288h0M397 292h0M396 288h0M547 215h0M548 214h0M552 218h0M555 213h0M545 214h0M607 206h0M598 205h0M588 193h0M588 192h0M595 192h0M594 192h0M589 197h0M618 215h0M616 212h0M593 167h0M591 172h0M583 167h0M593 165h0M400 277h0M396 279h0M360 286h0M563 170h0M564 171h0M554 170h0M556 167h0M557 166h0M582 173h0M611 178h0M637 178h0M548 162h0M550 157h0M544 163h0M543 163h0M552 161h0M546 163h0M600 202h0M590 209h0M593 209h0M594 198h0M626 210h0M625 209h0M606 221h0M608 218h0M615 219h0M622 222h0M488 357h0M491 357h0M489 356h0M420 210h0M408 221h0M403 225h0M405 226h0M400 225h0M457 225h0" stroke="#1badb2" stroke-width="2"/>
<path d="M300 246h0M298 252h0M313 244h0M332 246h0M326 246h0M330 253h0M328 247h0M343 264h0M351 259h0M352 259h0M340 265h0M351 258h0M348 263h0M348 270h0M349 270h0M338 262h0M345 273h0M364 250h0M371 258h0M367 255h0M361 255h0M370 253h0M369 261h0M371 260h0M380 221h0M380 222h0M402 219h0M401 219h0M398 213h0M404 215h0M390 265h0M396 264h0M390 269h0M386 265h0M390 266h0M404 219h0M416 220h0M407 218h0M409 222h0M444 217h0M447 220h0M450 216h0M449 217h0M459 210h0M464 213h0M446 235h0M443 230h0M629 165h0M571 159h0M566 164h0M576 155h0M582 162h0M569 153h0M568 157h0M600 174h0M607 174h0M644 168h0M644 168h0M562 164h0M563 160h0M565 160h0M556 159h0M655 169h0M668 166h0M670 170h0M666 193h0M668 201h0M669 199h0M667 200h0M664 193h0M660 194h0M709 200h0M703 196h0M649 192h0M649 196h0M649 198h0M653 192h0M648 196h0M651 194h0M693 232h0M699 227h0M696 224h0M697 227h0M741 219h0M656 210h0M649 212h0M646 212h0M773 247h0M768 247h0M773 248h0M766 246h0M779 246h0M777 250h0M770 247h0M764 244h0M763 241h0M764 244h0M761 237h0M642 233h0M635 236h0M648 232h0M647 237h0M649 232h0M648 244h0M642 240h0M658 244h0M661 246h0M659 245h0M669 290h0M666 288h0M687 281h0M687 283h0M683 286h0M689 283h0M682 283h0M646 284h0M698 231h0M702 222h0M708 228h0M706 225h0M702 229h0M651 285h0M652 285h0M585 280h0M588 319h0M587 318h0M585 316h0M491 263h0M495 269h0M492 260h0M501 267h0M489 263h0M503 257h0M505 263h0M496 271h0M493 260h0M513 262h0M509 263h0M514 266h0M517 260h0M465 311h0M462 315h0M354 297h0M350 300h0M343 295h0M343 294h0M392 278h0M382 276h0M386 279h0M382 279h0M387 276h0M375 301h0M376 301h0M398 290h0M408 291h0M398 287h0M552 217h0M554 219h0M551 216h0M601 201h0M592 197h0M584 170h0M594 167h0M582 169h0M593 169h0M594 165h0M585 173h0M405 284h0M397 279h0M400 286h0M397 284h0M399 286h0M395 279h0M557 166h0M586 173h0M579 176h0M613 177h0M615 177h0M621 178h0M616 178h0M620 178h0M546 157h0M549 163h0M592 204h0M593 208h0M594 211h0M601 206h0M599 203h0M596 200h0M631 211h0M630 211h0M608 216h0M611 217h0M606 222h0M614 217h0M626 226h0M627 222h0M492 354h0M428 220h0M423 213h0M426 219h0M427 208h0M426 212h0M428 218h0M426 218h0M425 217h0M424 221h0M430 214h0M403 224h0M405 220h0M407 221h0M404 225h0M402 219h0M403 223h0M401 225h0M459 226h0M452 221h0M459 221h0M462 227h0M463 219h0M460 216h0M453 221h0" stroke="#1badb2" stroke-width="3"/>
<path d="M338 265h0M339 263h0M349 261h0M343 271h0M351 268h0M347 268h0M338 265h0M342 274h0M365 257h0M360 258h0M365 253h0M368 254h0M400 213h0M386 270h0M415 212h0M403 214h0M400 214h0M423 218h0M425 220h0M414 219h0M467 212h0M467 215h0M461 211h0M433 233h0M434 234h0M567 161h0M550 155h0M555 161h0M559 159h0M558 161h0M669 166h0M667 196h0M665 198h0M663 196h0M665 197h0M694 200h0M701 202h0M704 196h0M706 197h0M656 198h0M691 226h0M701 221h0M739 216h0M647 210h0M758 232h0M775 245h0M769 246h0M770 245h0M761 244h0M647 238h0M658 247h0M656 245h0M672 289h0M685 287h0M681 286h0M702 227h0M700 230h0M704 227h0M589 319h0M491 261h0M494 257h0M514 265h0M503 311h0M480 351h0M473 314h0M468 316h0M465 315h0M341 297h0M345 300h0M340 296h0M384 281h0M394 280h0M380 276h0M389 281h0M373 298h0M409 289h0M558 217h0M552 217h0M563 214h0M559 216h0M605 200h0M623 215h0M589 169h0M316 243h0M404 283h0M400 281h0M559 170h0M613 178h0M633 175h0M636 176h0M543 157h0M592 211h0M599 206h0M634 210h0M498 358h0M421 210h0M427 214h0M426 208h0M400 225h0M412 227h0M462 222h0" stroke="#1badb2" stroke-width="4"/>
<path d="M300 249h0M297 248h0M340 249h0M342 263h0M344 266h0M348 265h0M337 261h0M341 263h0M339 264h0M343 269h0M343 266h0M354 263h0M350 271h0M339 271h0M350 267h0M359 255h0M368 251h0M372 251h0M363 252h0M366 251h0M360 259h0M370 257h0M388 266h0M415 220h0M420 215h0M414 224h0M417 222h0M406 223h0M397 217h0M447 214h0M443 216h0M467 209h0M460 209h0M436 229h0M635 162h0M627 166h0M580 152h0M573 158h0M576 152h0M573 153h0M573 165h0M571 167h0M570 160h0M594 169h0M606 169h0M647 166h0M644 166h0M544 157h0M548 158h0M553 153h0M547 157h0M550 152h0M563 157h0M554 159h0M556 161h0M557 163h0M646 159h0M661 164h0M657 169h0M663 169h0M659 165h0M662 167h0M669 168h0M663 165h0M667 168h0M670 166h0M662 196h0M662 199h0M699 200h0M696 200h0M700 196h0M704 200h0M703 199h0M658 194h0M700 223h0M688 226h0M696 219h0M695 221h0M691 229h0M694 220h0M739 216h0M654 208h0M648 210h0M655 209h0M755 228h0M761 230h0M757 231h0M778 246h0M777 245h0M777 248h0M762 239h0M758 239h0M641 231h0M638 237h0M641 242h0M639 241h0M647 236h0M651 236h0M643 236h0M656 244h0M664 246h0M656 246h0M658 244h0M665 286h0M666 290h0M675 290h0M688 287h0M638 287h0M641 282h0M705 228h0M702 229h0M660 284h0M653 287h0M656 288h0M586 276h0M591 277h0M494 255h0M506 258h0M499 259h0M497 266h0M504 262h0M504 260h0M512 261h0M514 260h0M395 274h0M384 278h0M385 271h0M395 276h0M385 271h0M397 291h0M562 211h0M552 216h0M547 212h0M543 211h0M608 204h0M595 192h0M592 192h0M594 194h0M587 195h0M619 212h0M595 166h0M586 171h0M584 168h0M320 241h0M397 277h0M398 278h0M398 283h0M362 287h0M566 164h0M558 163h0M637 175h0M637 172h0M588 208h0M594 202h0M600 202h0M592 209h0M594 201h0M590 210h0M594 210h0M600 207h0M632 209h0M632 208h0M611 217h0M607 219h0M606 218h0M627 220h0M423 209h0M419 217h0M430 219h0M400 222h0M458 225h0M463 225h0M456 222h0M454 226h0" stroke="#25afab" stroke-width="2"/>
<path d="M299 246h0M304 248h0M292 251h0M317 242h0M334 250h0M334 246h0M331 252h0M328 251h0M330 244h0M343 262h0M345 267h0M345 261h0M346 261h0M345 266h0M348 260h0M339 261h0M341 269h0M336 266h0M344 268h0M339 258h0M346 264h0M337 266h0M352 271h0M347 264h0M365 253h0M363 252h0M362 252h0M363 254h0M364 253h0M368 254h0M396 266h0M386 265h0M414 218h0M405 215h0M410 223h0M407 215h0M406 220h0M455 214h0M445 215h0M452 214h0M464 209h0M439 230h0M439 228h0M615 156h0M637 164h0M626 167h0M577 166h0M573 152h0M579 163h0M566 161h0M599 168h0M600 166h0M647 164h0M543 153h0M556 162h0M556 162h0M557 159h0M565 160h0M644 159h0M656 169h0M660 165h0M658 169h0M666 168h0M663 163h0M664 192h0M658 199h0M699 199h0M699 197h0M698 197h0M657 194h0M653 193h0M707 223h0M725 219h0M725 217h0M689 227h0M695 227h0M696 223h0M738 218h0M651 211h0M652 208h0M768 244h0M761 237h0M759 237h0M757 239h0M760 239h0M636 230h0M639 235h0M632 236h0M637 236h0M642 234h0M642 240h0M639 234h0M649 233h0M658 247h0M658 244h0M661 245h0M672 291h0M661 287h0M669 290h0M663 286h0M665 289h0M687 278h0M687 286h0M678 281h0M684 276h0M640 282h0M641 281h0M634 283h0M642 280h0M708 226h0M702 232h0M651 284h0M658 287h0M654 286h0M588 275h0M582 276h0M591 315h0M489 265h0M501 266h0M496 254h0M500 258h0M502 265h0M508 266h0M514 261h0M518 261h0M499 308h0M499 308h0M393 276h0M382 281h0M378 300h0M404 286h0M396 291h0M554 214h0M558 219h0M559 215h0M600 198h0M608 201h0M592 191h0M586 195h0M584 196h0M621 213h0M588 166h0M591 164h0M315 241h0M397 278h0M396 280h0M401 279h0M402 277h0M404 282h0M400 277h0M406 281h0M359 288h0M361 290h0M362 289h0M554 167h0M555 166h0M563 164h0M636 175h0M632 173h0M638 175h0M631 173h0M548 159h0M550 162h0M547 157h0M550 158h0M597 209h0M590 201h0M592 201h0M595 205h0M633 209h0M630 210h0M629 209h0M422 219h0M422 214h0M424 217h0M424 214h0M431 215h0M420 217h0M460 217h0M457 224h0" stroke="#25afab" stroke-width="3"/>
<path d="M298 247h0M301 250h0M324 243h0M327 246h0M345 260h0M343 266h0M350 263h0M349 264h0M347 263h0M346 260h0M343 262h0M350 258h0M349 257h0M367 252h0M364 257h0M404 211h0M398 214h0M401 214h0M398 216h0M397 213h0M395 265h0M407 215h0M402 214h0M418 217h0M461 207h0M443 232h0M613 156h0M572 155h0M579 165h0M575 154h0M577 164h0M597 168h0M603 170h0M600 169h0M644 166h0M544 156h0M563 161h0M560 160h0M657 166h0M661 165h0M661 165h0M696 198h0M697 200h0M703 198h0M702 200h0M706 224h0M694 221h0M759 230h0M757 230h0M758 229h0M775 245h0M643 234h0M643 240h0M649 232h0M671 292h0M669 294h0M663 288h0M664 290h0M668 292h0M662 283h0M686 283h0M685 278h0M682 281h0M682 280h0M639 285h0M638 286h0M707 225h0M707 228h0M654 282h0M589 277h0M583 278h0M504 265h0M497 257h0M505 258h0M499 262h0M497 308h0M481 350h0M382 271h0M394 275h0M388 272h0M384 278h0M381 277h0M381 298h0M379 299h0M389 297h0M402 285h0M559 216h0M602 199h0M592 194h0M587 200h0M593 197h0M616 214h0M616 213h0M619 212h0M587 167h0M585 170h0M317 242h0M359 287h0M555 166h0M561 166h0M560 165h0M561 169h0M640 174h0M548 156h0M547 163h0M598 206h0M590 208h0M627 223h0M426 216h0M429 215h0" stroke="#25afab" stroke-width="4"/>
<path d="M325 240h0M334 247h0M333 246h0M333 248h0M327 248h0M340 249h0M343 261h0M340 265h0M338 260h0M340 266h0M347 264h0M341 257h0M350 259h0M339 263h0M341 266h0M342 264h0M351 265h0M354 264h0M338 260h0M351 267h0M341 256h0M349 262h0M341 264h0M366 251h0M371 250h0M368 256h0M393 262h0M414 209h0M420 207h0M418 216h0M416 208h0M420 220h0M414 221h0M404 222h0M405 209h0M401 217h0M445 209h0M448 216h0M450 217h0M448 219h0M455 212h0M446 210h0M617 156h0M628 164h0M635 166h0M636 160h0M633 161h0M633 165h0M573 157h0M582 162h0M569 157h0M567 157h0M572 153h0M583 158h0M579 157h0M584 163h0M542 150h0M548 158h0M565 159h0M556 160h0M559 160h0M648 158h0M654 166h0M656 169h0M662 165h0M668 163h0M659 195h0M661 193h0M702 199h0M691 195h0M692 197h0M706 197h0M673 212h0M649 191h0M706 223h0M729 219h0M724 215h0M696 220h0M700 223h0M699 222h0M771 246h0M768 245h0M775 242h0M769 245h0M763 241h0M759 241h0M640 234h0M639 235h0M636 234h0M639 227h0M633 230h0M635 229h0M645 238h0M647 240h0M665 244h0M673 287h0M663 283h0M669 293h0M670 290h0M679 283h0M686 281h0M681 280h0M684 278h0M639 288h0M640 287h0M644 282h0M697 228h0M708 229h0M658 279h0M660 283h0M651 286h0M657 282h0M657 283h0M585 276h0M585 275h0M589 277h0M496 254h0M492 256h0M497 307h0M507 307h0M342 294h0M355 296h0M388 278h0M382 272h0M395 275h0M383 270h0M392 273h0M388 273h0M396 278h0M388 274h0M392 276h0M383 268h0M388 299h0M377 300h0M389 296h0M377 300h0M389 295h0M377 297h0M555 214h0M553 217h0M548 216h0M564 210h0M554 218h0M548 208h0M556 218h0M601 193h0M589 193h0M595 195h0M585 197h0M586 195h0M590 193h0M621 212h0M623 213h0M616 210h0M623 212h0M317 240h0M313 241h0M318 244h0M313 242h0M405 283h0M397 276h0M635 172h0M543 160h0M547 161h0M546 160h0M547 161h0M591 204h0M597 202h0M597 199h0M594 199h0M631 206h0M636 206h0M426 214h0M427 209h0M421 209h0M455 225h0M458 219h0M464 220h0M452 223h0M459 217h0M452 224h0" stroke="#2bb3a5" stroke-width="2"/>
<path d="M297 249h0M322 240h0M327 249h0M339 248h0M340 250h0M349 259h0M342 264h0M342 261h0M351 263h0M348 265h0M336 265h0M336 261h0M373 252h0M399 213h0M398 212h0M404 216h0M408 213h0M415 214h0M414 210h0M410 208h0M412 216h0M417 220h0M409 216h0M402 212h0M408 209h0M452 217h0M450 210h0M443 218h0M445 213h0M611 156h0M615 154h0M626 168h0M626 167h0M632 162h0M633 161h0M569 157h0M580 157h0M567 156h0M566 159h0M576 162h0M582 158h0M604 167h0M551 153h0M551 157h0M550 157h0M550 154h0M548 156h0M558 162h0M566 158h0M563 157h0M647 156h0M658 169h0M662 168h0M656 166h0M654 165h0M663 164h0M667 167h0M657 194h0M660 194h0M662 194h0M659 197h0M659 199h0M697 197h0M697 197h0M693 196h0M703 223h0M733 218h0M727 216h0M729 219h0M726 219h0M702 223h0M698 219h0M693 225h0M690 221h0M699 220h0M736 214h0M735 213h0M755 228h0M768 248h0M778 242h0M635 233h0M639 233h0M640 234h0M640 227h0M636 232h0M633 236h0M641 228h0M633 237h0M630 232h0M644 236h0M642 239h0M660 245h0M671 280h0M663 289h0M666 289h0M667 284h0M675 286h0M679 284h0M682 285h0M681 282h0M634 283h0M634 278h0M641 278h0M643 288h0M643 286h0M633 283h0M640 278h0M699 224h0M703 223h0M709 228h0M703 224h0M654 279h0M659 283h0M653 282h0M659 283h0M585 281h0M589 278h0M595 275h0M586 275h0M496 261h0M491 262h0M502 260h0M499 261h0M494 257h0M505 265h0M500 307h0M498 308h0M506 307h0M348 294h0M354 297h0M345 299h0M346 299h0M384 276h0M387 276h0M396 273h0M386 278h0M382 273h0M389 275h0M391 275h0M386 272h0M396 292h0M388 293h0M375 300h0M388 293h0M385 297h0M388 297h0M371 294h0M375 301h0M384 294h0M372 295h0M370 295h0M560 209h0M563 216h0M554 214h0M564 209h0M541 211h0M541 211h0M593 192h0M591 191h0M624 213h0M622 213h0M626 210h0M619 210h0M623 215h0M319 244h0M323 242h0M316 238h0M400 276h0M398 283h0M403 278h0M395 279h0M404 280h0M553 156h0M546 154h0M546 160h0M590 208h0M599 205h0M597 202h0M591 203h0M629 207h0M626 207h0M623 220h0M420 212h0M423 213h0M429 211h0M420 217h0M463 219h0M460 219h0" stroke="#2bb3a5" stroke-width="3"/>
<path d="M334 247h0M332 245h0M341 249h0M346 262h0M351 263h0M342 265h0M366 250h0M364 251h0M402 211h0M397 211h0M399 211h0M421 211h0M409 214h0M417 215h0M409 214h0M414 221h0M402 214h0M462 207h0M464 207h0M616 154h0M610 155h0M620 155h0M626 166h0M633 162h0M575 157h0M566 162h0M584 161h0M566 162h0M568 164h0M544 149h0M550 155h0M648 157h0M644 156h0M661 164h0M660 164h0M661 170h0M658 194h0M661 196h0M669 196h0M665 194h0M663 195h0M678 213h0M702 221h0M705 222h0M733 217h0M725 216h0M725 216h0M726 217h0M694 225h0M697 224h0M694 225h0M735 214h0M760 228h0M759 236h0M760 241h0M640 233h0M638 233h0M638 239h0M652 239h0M666 245h0M665 241h0M657 245h0M656 243h0M667 280h0M673 285h0M634 285h0M642 280h0M704 227h0M660 282h0M650 285h0M658 287h0M594 276h0M582 278h0M584 274h0M590 314h0M492 264h0M341 296h0M344 299h0M348 294h0M347 298h0M388 270h0M383 273h0M384 271h0M381 276h0M387 278h0M374 295h0M387 300h0M402 286h0M561 208h0M561 210h0M550 212h0M546 211h0M621 212h0M316 241h0M636 171h0M542 160h0M549 157h0M459 224h0M456 221h0M462 220h0M463 221h0" stroke="#2bb3a5" stroke-width="4"/>
<path d="M300 246h0M298 249h0M303 248h0M303 245h0M321 240h0M325 239h0M331 245h0M338 249h0M339 258h0M342 261h0M338 262h0M343 263h0M340 255h0M339 261h0M342 259h0M363 254h0M371 247h0M366 251h0M366 255h0M364 255h0M367 250h0M402 213h0M418 207h0M411 204h0M407 207h0M409 219h0M407 220h0M403 213h0M406 210h0M401 216h0M402 217h0M412 217h0M403 216h0M446 214h0M452 209h0M452 216h0M449 215h0M448 208h0M450 212h0M447 214h0M441 232h0M451 231h0M619 156h0M630 166h0M633 163h0M637 161h0M626 165h0M634 167h0M633 162h0M631 159h0M579 159h0M567 160h0M579 158h0M568 159h0M581 159h0M574 157h0M579 153h0M549 155h0M551 154h0M545 151h0M553 149h0M563 158h0M563 158h0M558 163h0M565 158h0M562 162h0M565 155h0M661 164h0M667 167h0M667 163h0M670 197h0M665 196h0M697 191h0M676 214h0M676 209h0M677 211h0M675 210h0M708 221h0M700 222h0M699 224h0M694 223h0M734 212h0M738 213h0M758 228h0M778 246h0M774 244h0M772 245h0M773 240h0M769 236h0M762 237h0M635 229h0M635 232h0M636 230h0M641 226h0M633 233h0M638 224h0M639 237h0M651 237h0M648 239h0M646 234h0M665 244h0M659 247h0M664 242h0M666 241h0M672 289h0M674 286h0M674 285h0M670 283h0M674 289h0M678 279h0M680 280h0M687 282h0M679 283h0M682 277h0M644 283h0M641 273h0M648 278h0M639 288h0M643 276h0M639 282h0M636 281h0M640 280h0M644 275h0M647 280h0M638 277h0M640 277h0M698 227h0M703 224h0M707 226h0M703 225h0M699 226h0M651 284h0M659 284h0M654 280h0M587 280h0M585 280h0M586 275h0M494 262h0M494 261h0M492 260h0M498 260h0M498 263h0M502 309h0M496 305h0M500 309h0M349 292h0M348 292h0M354 296h0M344 292h0M342 297h0M347 293h0M385 268h0M386 273h0M393 274h0M385 274h0M393 269h0M398 290h0M382 299h0M380 299h0M383 291h0M380 302h0M388 293h0M552 214h0M554 212h0M560 216h0M559 215h0M546 214h0M554 201h0M551 216h0M547 205h0M563 214h0M554 209h0M546 208h0M540 213h0M539 210h0M544 208h0M594 192h0M619 210h0M620 206h0M621 210h0M617 212h0M317 240h0M319 237h0M401 281h0M404 279h0M394 282h0M397 280h0M608 165h0M547 157h0M546 158h0M597 204h0M595 203h0M598 201h0M598 201h0M629 210h0M628 210h0M626 205h0M632 205h0M428 211h0M422 209h0M419 211h0M426 213h0M430 215h0M428 213h0M426 211h0" stroke="#30b59e" stroke-width="2"/>
<path d="M324 244h0M328 246h0M330 245h0M329 249h0M324 244h0M330 247h0M343 255h0M339 266h0M349 263h0M345 259h0M339 263h0M344 260h0M337 263h0M347 266h0M336 262h0M340 259h0M346 257h0M365 247h0M368 254h0M368 248h0M369 245h0M400 212h0M396 212h0M405 214h0M423 206h0M411 208h0M418 209h0M414 210h0M409 217h0M415 208h0M413 215h0M405 209h0M413 211h0M418 219h0M413 215h0M416 217h0M414 220h0M406 212h0M412 212h0M454 208h0M453 217h0M442 212h0M443 209h0M454 212h0M447 208h0M448 231h0M451 230h0M449 231h0M449 232h0M618 156h0M636 162h0M631 160h0M635 163h0M633 167h0M634 159h0M631 164h0M635 166h0M625 163h0M626 161h0M624 162h0M628 161h0M624 159h0M630 158h0M576 156h0M578 154h0M573 159h0M573 157h0M584 159h0M545 150h0M548 158h0M562 155h0M555 152h0M560 162h0M646 158h0M657 165h0M667 165h0M689 192h0M691 193h0M693 199h0M697 195h0M699 199h0M667 213h0M674 213h0M699 221h0M733 214h0M699 221h0M693 221h0M692 219h0M738 214h0M739 212h0M757 227h0M766 240h0M769 243h0M778 246h0M773 241h0M779 238h0M769 244h0M766 241h0M767 243h0M770 248h0M757 239h0M765 239h0M759 238h0M762 239h0M634 226h0M631 227h0M649 234h0M645 237h0M647 239h0M649 236h0M659 247h0M662 240h0M665 243h0M665 292h0M662 286h0M670 291h0M682 274h0M680 279h0M647 284h0M639 281h0M646 282h0M642 274h0M647 276h0M641 281h0M644 283h0M638 278h0M642 286h0M636 281h0M650 283h0M588 278h0M594 272h0M586 280h0M497 255h0M502 258h0M493 260h0M491 261h0M505 261h0M503 308h0M498 305h0M342 296h0M342 291h0M347 293h0M355 290h0M344 291h0M345 300h0M348 298h0M396 276h0M383 269h0M389 290h0M387 291h0M394 291h0M388 291h0M386 297h0M375 295h0M385 291h0M380 297h0M563 210h0M554 208h0M552 212h0M557 211h0M548 207h0M563 210h0M556 208h0M547 208h0M543 210h0M543 208h0M547 212h0M541 209h0M604 195h0M598 193h0M593 194h0M590 191h0M618 212h0M617 214h0M619 204h0M621 213h0M616 206h0M622 214h0M618 209h0M320 244h0M316 236h0M317 242h0M403 277h0M403 280h0M613 168h0M609 166h0M552 160h0M544 157h0M597 199h0M588 204h0M629 210h0M627 206h0M420 215h0M421 211h0M458 219h0" stroke="#30b59e" stroke-width="3"/>
<path d="M324 248h0M327 246h0M332 243h0M343 247h0M340 256h0M345 263h0M338 259h0M344 264h0M348 256h0M351 266h0M342 257h0M373 254h0M374 248h0M396 211h0M399 212h0M417 206h0M421 206h0M418 219h0M420 215h0M405 221h0M403 213h0M445 211h0M453 212h0M442 231h0M446 232h0M614 154h0M579 162h0M566 161h0M578 151h0M570 158h0M582 154h0M552 151h0M559 155h0M558 154h0M643 156h0M657 165h0M658 193h0M661 195h0M665 198h0M669 193h0M694 191h0M695 192h0M709 220h0M710 221h0M723 213h0M729 220h0M730 217h0M759 229h0M765 238h0M763 239h0M770 239h0M777 239h0M774 240h0M635 235h0M640 234h0M638 236h0M646 232h0M654 241h0M655 241h0M658 240h0M662 291h0M687 281h0M633 285h0M635 282h0M639 276h0M645 284h0M646 279h0M644 281h0M709 226h0M700 228h0M699 229h0M586 272h0M582 272h0M589 278h0M503 261h0M498 254h0M499 262h0M491 256h0M501 303h0M341 297h0M348 290h0M344 292h0M383 295h0M378 293h0M371 291h0M385 301h0M388 290h0M379 301h0M381 295h0M379 294h0M555 212h0M587 193h0M585 195h0M594 191h0M620 207h0M615 215h0M623 213h0M322 239h0M319 236h0M398 279h0M395 282h0M609 167h0M614 167h0M553 158h0M553 158h0M598 206h0M592 200h0M626 207h0M626 207h0M636 205h0" stroke="#30b59e" stroke-width="4"/>
<path d="M298 245h0M301 246h0M318 237h0M318 236h0M326 239h0M330 241h0M331 243h0M326 243h0M341 247h0M336 248h0M333 248h0M344 257h0M343 259h0M347 255h0M347 257h0M366 245h0M364 253h0M371 248h0M362 249h0M418 209h0M412 204h0M419 211h0M416 216h0M410 210h0M419 219h0M412 216h0M411 212h0M419 214h0M409 206h0M445 215h0M450 216h0M450 209h0M449 206h0M443 212h0M441 211h0M448 231h0M442 233h0M622 152h0M622 152h0M618 156h0M628 162h0M633 165h0M623 165h0M573 153h0M580 152h0M584 156h0M570 153h0M571 156h0M575 151h0M545 149h0M554 153h0M547 155h0M560 158h0M561 153h0M553 155h0M553 159h0M566 155h0M644 158h0M647 157h0M647 158h0M662 165h0M668 163h0M668 165h0M667 163h0M665 164h0M657 194h0M662 190h0M666 191h0M694 195h0M696 199h0M693 196h0M704 191h0M702 197h0M692 194h0M668 212h0M672 211h0M678 211h0M668 214h0M677 211h0M673 209h0M707 222h0M706 223h0M699 220h0M699 222h0M731 213h0M733 217h0M728 219h0M727 212h0M724 218h0M733 218h0M725 212h0M698 220h0M700 224h0M761 228h0M758 227h0M760 229h0M765 238h0M772 245h0M772 237h0M770 239h0M769 242h0M771 246h0M772 238h0M779 244h0M775 238h0M772 246h0M640 234h0M643 230h0M634 228h0M641 230h0M634 224h0M644 234h0M665 239h0M662 236h0M670 281h0M662 287h0M661 289h0M667 283h0M663 285h0M669 280h0M640 281h0M639 282h0M634 275h0M636 282h0M643 284h0M641 284h0M638 272h0M712 230h0M708 224h0M653 278h0M595 271h0M584 275h0M589 278h0M581 277h0M582 278h0M589 278h0M592 273h0M590 273h0M579 271h0M594 268h0M493 255h0M502 257h0M500 254h0M493 257h0M498 305h0M501 303h0M499 305h0M508 302h0M344 289h0M346 287h0M343 296h0M351 292h0M344 298h0M353 296h0M345 287h0M343 296h0M346 296h0M349 298h0M343 295h0M356 290h0M383 269h0M393 271h0M388 291h0M395 288h0M388 290h0M372 292h0M378 289h0M375 295h0M377 299h0M386 299h0M382 295h0M379 297h0M372 290h0M372 290h0M545 212h0M559 213h0M550 204h0M561 210h0M546 208h0M546 209h0M550 211h0M549 202h0M538 208h0M544 207h0M600 194h0M597 195h0M604 197h0M601 196h0M597 191h0M599 186h0M588 193h0M588 193h0M594 192h0M591 190h0M622 212h0M620 214h0M620 206h0M319 240h0M320 241h0M314 241h0M396 278h0M646 156h0M616 164h0M617 165h0M549 155h0M544 155h0M549 154h0M620 217h0M623 217h0M632 210h0M628 206h0M630 204h0M627 208h0M453 220h0" stroke="#35b797" stroke-width="2"/>
<path d="M338 248h0M346 262h0M340 263h0M347 257h0M349 262h0M347 263h0M343 257h0M335 257h0M347 260h0M343 260h0M368 246h0M366 251h0M371 245h0M362 249h0M414 206h0M411 206h0M411 206h0M414 203h0M411 217h0M420 215h0M406 212h0M412 213h0M416 216h0M419 217h0M451 210h0M451 210h0M453 209h0M448 206h0M443 213h0M442 216h0M445 209h0M446 215h0M447 215h0M446 205h0M446 230h0M442 231h0M617 152h0M621 151h0M627 164h0M633 158h0M635 165h0M624 165h0M577 154h0M572 155h0M554 151h0M550 151h0M552 150h0M559 161h0M559 151h0M560 154h0M559 150h0M651 155h0M650 156h0M646 156h0M657 166h0M655 192h0M704 194h0M701 195h0M694 190h0M700 195h0M691 188h0M675 213h0M672 209h0M697 220h0M711 220h0M728 212h0M727 215h0M723 214h0M731 209h0M732 215h0M724 219h0M722 214h0M692 219h0M696 222h0M691 220h0M743 211h0M739 215h0M735 214h0M733 212h0M764 238h0M761 238h0M773 245h0M770 235h0M773 237h0M778 243h0M768 236h0M766 245h0M778 240h0M777 239h0M776 239h0M766 246h0M772 239h0M775 240h0M776 241h0M762 235h0M632 233h0M630 233h0M634 233h0M639 224h0M637 226h0M648 235h0M643 234h0M647 231h0M663 240h0M660 246h0M655 237h0M659 238h0M661 244h0M661 244h0M664 243h0M659 240h0M673 285h0M663 289h0M668 285h0M668 288h0M684 274h0M688 273h0M682 273h0M685 279h0M684 280h0M683 278h0M636 274h0M644 279h0M640 274h0M708 225h0M591 265h0M588 267h0M589 279h0M586 279h0M592 277h0M489 261h0M498 255h0M493 257h0M495 258h0M497 303h0M343 293h0M343 294h0M348 286h0M346 296h0M345 292h0M349 287h0M347 289h0M392 272h0M391 290h0M395 287h0M384 290h0M386 293h0M382 289h0M383 287h0M381 299h0M389 290h0M379 293h0M382 296h0M389 292h0M389 296h0M563 207h0M556 215h0M563 215h0M556 202h0M559 204h0M549 208h0M553 211h0M549 215h0M549 215h0M600 192h0M598 187h0M594 191h0M598 189h0M587 194h0M615 208h0M623 209h0M617 208h0M315 237h0M320 242h0M616 165h0M619 164h0M551 158h0M596 200h0M623 217h0M634 206h0M628 208h0M419 213h0M424 212h0M458 216h0M458 216h0M461 217h0M457 217h0" stroke="#35b797" stroke-width="3"/>
<path d="M323 237h0M322 240h0M347 262h0M337 262h0M338 261h0M349 262h0M342 262h0M365 246h0M398 212h0M419 202h0M420 205h0M420 208h0M414 212h0M404 219h0M414 213h0M599 165h0M601 166h0M615 152h0M611 152h0M625 157h0M630 158h0M574 155h0M548 146h0M549 153h0M560 154h0M582 158h0M663 192h0M657 191h0M696 191h0M690 195h0M698 197h0M678 213h0M676 208h0M708 220h0M705 221h0M728 220h0M724 209h0M759 226h0M765 240h0M772 244h0M774 241h0M775 242h0M763 236h0M636 223h0M640 232h0M630 230h0M638 225h0M655 239h0M656 242h0M656 243h0M660 240h0M670 281h0M635 279h0M633 283h0M634 278h0M646 282h0M676 279h0M593 273h0M586 278h0M588 268h0M492 256h0M498 302h0M506 310h0M500 305h0M503 306h0M345 299h0M344 291h0M343 292h0M355 293h0M352 299h0M351 291h0M394 270h0M398 287h0M376 301h0M376 299h0M375 297h0M547 210h0M546 211h0M549 213h0M551 203h0M548 208h0M564 212h0M598 192h0M593 190h0M619 209h0M618 204h0M402 276h0M398 278h0M597 198h0M636 204h0M431 212h0M421 214h0" stroke="#35b797" stroke-width="4"/>
<path d="M323 241h0M323 240h0M347 260h0M346 262h0M345 262h0M344 262h0M338 259h0M342 256h0M348 256h0M372 247h0M362 251h0M368 246h0M371 247h0M414 203h0M422 209h0M419 200h0M421 207h0M412 203h0M417 202h0M420 208h0M419 205h0M416 210h0M417 214h0M449 205h0M451 207h0M448 209h0M445 226h0M443 231h0M438 229h0M449 231h0M593 162h0M592 165h0M593 164h0M620 150h0M637 163h0M635 164h0M630 157h0M625 160h0M548 146h0M544 154h0M550 148h0M546 149h0M551 150h0M546 148h0M567 158h0M557 158h0M561 159h0M566 152h0M563 157h0M561 160h0M563 155h0M553 155h0M586 156h0M578 155h0M635 159h0M642 156h0M648 156h0M647 151h0M640 152h0M646 152h0M665 193h0M657 191h0M711 196h0M700 188h0M702 190h0M699 189h0M698 188h0M698 195h0M663 205h0M667 210h0M668 210h0M674 211h0M701 222h0M703 223h0M696 216h0M699 223h0M697 214h0M704 217h0M730 210h0M726 217h0M734 216h0M724 212h0M722 214h0M736 215h0M736 208h0M758 224h0M757 227h0M774 243h0M769 240h0M766 238h0M771 238h0M760 236h0M630 228h0M638 232h0M635 229h0M664 236h0M661 245h0M660 233h0M664 242h0M655 238h0M654 241h0M668 283h0M670 286h0M673 285h0M685 273h0M684 274h0M687 272h0M684 276h0M636 273h0M640 274h0M643 273h0M706 230h0M711 230h0M702 227h0M705 225h0M678 278h0M658 278h0M659 281h0M657 280h0M656 277h0M660 279h0M588 271h0M592 278h0M584 275h0M586 266h0M588 271h0M583 276h0M500 253h0M496 253h0M499 303h0M503 308h0M497 304h0M498 309h0M347 284h0M349 290h0M355 292h0M391 268h0M388 292h0M395 287h0M387 283h0M398 286h0M392 288h0M387 293h0M376 296h0M382 286h0M378 287h0M379 291h0M385 294h0M557 203h0M557 208h0M563 209h0M557 202h0M562 210h0M551 210h0M550 201h0M562 207h0M554 210h0M552 212h0M549 210h0M555 210h0M548 208h0M540 206h0M543 209h0M547 206h0M605 191h0M599 189h0M605 192h0M602 191h0M604 192h0M599 194h0M588 190h0M625 211h0M317 237h0M319 238h0M314 239h0M646 156h0M551 156h0M547 154h0M632 208h0M635 206h0M633 202h0M625 206h0M634 201h0" stroke="#3cba8f" stroke-width="2"/>
<path d="M323 241h0M324 239h0M322 236h0M324 235h0M323 240h0M336 249h0M338 250h0M338 254h0M344 259h0M369 249h0M371 248h0M365 244h0M367 252h0M368 249h0M365 252h0M413 207h0M414 205h0M420 206h0M423 206h0M419 200h0M406 208h0M410 215h0M402 214h0M410 207h0M414 211h0M414 207h0M451 211h0M451 210h0M444 208h0M448 233h0M447 228h0M598 163h0M617 151h0M610 156h0M614 153h0M619 150h0M622 152h0M623 160h0M635 162h0M626 157h0M632 156h0M631 159h0M625 159h0M551 150h0M549 149h0M544 150h0M560 157h0M561 155h0M556 155h0M566 157h0M588 156h0M637 159h0M637 160h0M651 154h0M657 192h0M661 189h0M654 191h0M711 196h0M711 197h0M694 195h0M693 190h0M696 191h0M691 192h0M702 195h0M681 206h0M673 210h0M676 208h0M677 209h0M670 211h0M680 207h0M706 219h0M723 215h0M726 212h0M725 213h0M729 213h0M724 212h0M742 212h0M737 209h0M767 237h0M765 236h0M767 236h0M777 237h0M774 235h0M775 242h0M767 242h0M762 236h0M639 225h0M639 225h0M632 228h0M659 242h0M658 234h0M662 234h0M656 237h0M658 234h0M661 287h0M684 272h0M643 275h0M645 280h0M638 278h0M644 279h0M634 281h0M705 228h0M701 223h0M678 277h0M676 279h0M657 282h0M661 282h0M654 277h0M657 284h0M653 283h0M589 267h0M586 268h0M585 270h0M585 278h0M590 273h0M588 276h0M588 264h0M591 269h0M500 305h0M501 306h0M503 302h0M351 292h0M345 287h0M349 296h0M353 297h0M392 270h0M392 284h0M386 286h0M383 287h0M396 287h0M387 285h0M377 291h0M385 288h0M389 291h0M374 290h0M381 294h0M384 287h0M385 292h0M382 290h0M382 288h0M375 297h0M388 292h0M383 288h0M386 292h0M548 204h0M557 208h0M553 203h0M557 205h0M558 204h0M545 212h0M559 210h0M548 207h0M548 210h0M541 210h0M541 209h0M545 208h0M598 191h0M605 193h0M604 190h0M604 194h0M598 187h0M597 194h0M605 193h0M603 190h0M589 191h0M617 205h0M626 211h0M622 204h0M623 209h0M615 211h0M353 253h0M318 239h0M320 238h0M397 277h0M608 162h0M611 166h0M613 167h0M549 154h0M595 199h0M619 219h0M624 215h0M616 217h0M631 201h0M631 200h0M634 202h0M628 204h0M625 206h0M626 209h0M627 203h0" stroke="#3cba8f" stroke-width="3"/>
<path d="M321 237h0M323 241h0M334 244h0M332 246h0M367 247h0M366 249h0M415 201h0M418 208h0M404 216h0M413 211h0M419 214h0M445 209h0M441 227h0M616 154h0M550 154h0M548 154h0M565 159h0M562 158h0M562 154h0M644 153h0M663 192h0M661 190h0M704 193h0M698 192h0M676 212h0M669 210h0M676 207h0M698 217h0M705 217h0M701 223h0M707 223h0M733 217h0M733 212h0M760 226h0M764 240h0M764 239h0M773 241h0M766 237h0M643 229h0M655 236h0M655 242h0M658 238h0M673 282h0M667 285h0M662 286h0M668 283h0M685 273h0M640 276h0M636 275h0M639 277h0M641 272h0M652 278h0M581 272h0M581 268h0M591 276h0M586 272h0M584 266h0M588 277h0M498 302h0M506 307h0M353 285h0M348 286h0M351 292h0M383 270h0M395 290h0M377 298h0M386 297h0M379 290h0M375 299h0M557 204h0M551 206h0M551 205h0M552 205h0M542 210h0M598 188h0M599 186h0M621 207h0M349 254h0M319 236h0M313 239h0M615 165h0M614 165h0M612 164h0M553 153h0M618 218h0M635 206h0M424 208h0" stroke="#3cba8f" stroke-width="4"/>
<path d="M317 235h0M325 234h0M327 239h0M335 241h0M337 241h0M340 242h0M338 259h0M366 244h0M364 246h0M422 207h0M416 203h0M422 209h0M414 206h0M417 209h0M402 213h0M406 209h0M413 208h0M415 210h0M450 210h0M451 212h0M450 210h0M448 208h0M447 225h0M442 229h0M440 228h0M590 163h0M601 160h0M602 160h0M599 162h0M597 162h0M607 151h0M608 153h0M618 153h0M616 152h0M616 154h0M634 159h0M629 161h0M631 156h0M634 156h0M628 156h0M546 149h0M554 157h0M561 153h0M563 155h0M588 155h0M628 156h0M641 156h0M645 152h0M646 151h0M651 153h0M645 151h0M646 158h0M659 192h0M667 189h0M707 198h0M705 196h0M698 191h0M704 195h0M690 195h0M673 207h0M682 202h0M677 206h0M668 210h0M674 207h0M666 206h0M708 222h0M700 218h0M708 217h0M709 221h0M704 213h0M706 220h0M708 216h0M735 206h0M733 209h0M733 212h0M645 228h0M761 227h0M764 238h0M762 234h0M769 237h0M777 243h0M641 227h0M632 225h0M662 240h0M656 240h0M665 238h0M656 236h0M666 281h0M639 277h0M639 275h0M637 279h0M641 273h0M711 229h0M708 223h0M702 222h0M716 225h0M711 230h0M705 223h0M709 229h0M661 281h0M653 277h0M584 272h0M594 269h0M586 273h0M590 269h0M506 300h0M501 306h0M348 288h0M354 292h0M355 294h0M344 287h0M388 283h0M399 285h0M385 286h0M396 290h0M397 286h0M387 289h0M383 288h0M394 284h0M395 288h0M397 287h0M391 285h0M395 285h0M390 291h0M376 287h0M375 287h0M386 290h0M382 284h0M383 296h0M375 295h0M373 289h0M547 207h0M558 205h0M550 212h0M543 209h0M544 206h0M606 185h0M596 187h0M603 188h0M623 205h0M336 246h0M644 155h0M644 154h0M645 156h0M643 156h0M610 161h0M616 164h0M615 159h0M554 155h0M548 153h0M551 155h0M623 215h0M627 206h0M629 207h0M634 207h0" stroke="#46bb86" stroke-width="2"/>
<path d="M321 238h0M320 231h0M325 238h0M341 244h0M336 248h0M333 246h0M343 245h0M346 260h0M347 258h0M335 260h0M345 254h0M362 249h0M370 247h0M423 207h0M419 205h0M407 213h0M412 211h0M409 209h0M403 211h0M414 208h0M410 214h0M450 208h0M452 207h0M453 211h0M451 209h0M451 229h0M438 226h0M443 228h0M604 150h0M603 163h0M598 162h0M601 166h0M593 160h0M612 150h0M609 149h0M607 149h0M616 156h0M634 156h0M628 159h0M630 161h0M547 146h0M549 150h0M562 154h0M562 155h0M556 153h0M638 157h0M638 159h0M645 156h0M643 152h0M647 150h0M656 187h0M656 190h0M656 194h0M709 197h0M706 195h0M704 195h0M695 193h0M701 188h0M702 189h0M703 189h0M701 192h0M673 213h0M669 202h0M676 205h0M671 211h0M672 212h0M706 218h0M698 221h0M704 218h0M705 219h0M708 223h0M729 208h0M742 212h0M740 207h0M641 228h0M769 239h0M763 237h0M778 243h0M639 226h0M657 243h0M660 239h0M659 240h0M664 242h0M665 237h0M683 271h0M682 271h0M679 269h0M687 270h0M644 277h0M640 280h0M636 276h0M636 276h0M642 273h0M642 277h0M643 273h0M638 272h0M713 226h0M710 226h0M677 277h0M671 277h0M654 276h0M659 279h0M655 281h0M583 270h0M592 272h0M592 267h0M581 268h0M594 268h0M506 307h0M499 305h0M503 299h0M353 295h0M352 287h0M347 286h0M350 292h0M351 284h0M357 292h0M354 286h0M396 291h0M399 285h0M384 284h0M389 291h0M376 296h0M383 287h0M388 293h0M371 296h0M385 294h0M373 293h0M384 287h0M377 290h0M375 287h0M381 287h0M557 207h0M560 203h0M549 206h0M558 203h0M554 209h0M560 203h0M546 207h0M547 211h0M546 210h0M543 208h0M606 189h0M598 189h0M598 191h0M601 190h0M596 189h0M599 187h0M614 207h0M339 245h0M330 242h0M319 238h0M319 236h0M645 154h0M647 156h0M606 160h0M617 160h0M607 161h0M615 167h0M606 161h0M608 161h0M548 153h0M550 152h0M616 212h0M616 211h0M622 216h0M622 212h0M624 205h0M635 201h0M630 201h0" stroke="#46bb86" stroke-width="3"/>
<path d="M322 240h0M325 239h0M323 237h0M339 242h0M335 242h0M339 244h0M347 255h0M344 253h0M419 206h0M420 207h0M418 210h0M449 211h0M445 209h0M453 206h0M442 232h0M440 224h0M598 160h0M618 148h0M617 151h0M618 154h0M625 160h0M543 150h0M549 152h0M547 147h0M629 156h0M640 154h0M650 152h0M648 149h0M661 189h0M661 191h0M706 197h0M691 195h0M693 190h0M692 194h0M681 207h0M674 211h0M666 212h0M682 204h0M678 206h0M670 202h0M703 219h0M704 210h0M699 213h0M731 211h0M756 225h0M767 235h0M770 236h0M770 236h0M629 229h0M665 234h0M660 241h0M663 241h0M662 237h0M685 274h0M634 275h0M716 223h0M674 278h0M656 281h0M584 273h0M579 269h0M595 270h0M580 273h0M507 300h0M506 300h0M344 290h0M351 284h0M344 286h0M397 288h0M393 291h0M390 285h0M399 284h0M387 289h0M388 283h0M386 281h0M398 287h0M380 285h0M383 285h0M374 288h0M551 202h0M547 208h0M601 186h0M623 208h0M621 209h0M349 254h0M646 156h0M571 155h0M608 165h0M618 165h0M622 213h0M622 212h0" stroke="#46bb86" stroke-width="4"/>
<path d="M325 234h0M335 239h0M334 245h0M341 246h0M337 238h0M337 257h0M340 256h0M371 246h0M414 206h0M414 203h0M451 210h0M453 208h0M447 206h0M450 205h0M449 208h0M447 230h0M450 227h0M441 221h0M605 159h0M593 158h0M605 158h0M588 160h0M604 162h0M618 147h0M613 148h0M616 152h0M610 144h0M617 151h0M614 154h0M610 148h0M616 154h0M622 151h0M617 154h0M610 153h0M610 152h0M629 156h0M627 156h0M550 148h0M560 152h0M581 157h0M580 154h0M582 159h0M634 158h0M651 153h0M642 151h0M640 156h0M649 151h0M649 156h0M657 188h0M658 185h0M666 188h0M663 194h0M660 190h0M664 186h0M664 193h0M657 188h0M667 189h0M706 192h0M703 195h0M699 186h0M701 189h0M690 193h0M700 189h0M701 193h0M694 191h0M692 193h0M678 198h0M674 206h0M672 212h0M671 210h0M676 199h0M683 205h0M669 207h0M664 206h0M679 212h0M670 208h0M667 205h0M675 212h0M675 201h0M674 211h0M681 205h0M678 202h0M705 214h0M705 217h0M712 217h0M700 217h0M701 220h0M698 219h0M706 218h0M704 217h0M728 212h0M726 209h0M728 211h0M736 212h0M740 209h0M642 227h0M756 224h0M758 231h0M767 237h0M771 236h0M635 224h0M636 223h0M635 223h0M641 228h0M637 228h0M633 226h0M661 234h0M684 270h0M683 268h0M678 270h0M640 272h0M706 226h0M714 219h0M712 220h0M711 222h0M718 223h0M705 226h0M709 228h0M673 274h0M655 276h0M581 271h0M501 306h0M502 304h0M500 303h0M499 299h0M504 301h0M356 290h0M351 286h0M384 285h0M387 279h0M390 288h0M383 285h0M392 289h0M390 289h0M398 286h0M391 280h0M383 286h0M374 288h0M388 292h0M385 284h0M376 286h0M560 206h0M558 201h0M558 206h0M561 204h0M599 187h0M333 242h0M337 241h0M319 238h0M642 154h0M568 153h0M592 150h0M611 163h0M608 164h0M608 161h0M611 164h0M555 151h0M624 210h0M619 214h0M620 213h0M613 209h0M613 209h0M621 216h0M620 216h0" stroke="#52bd7d" stroke-width="2"/>
<path d="M318 235h0M317 237h0M326 237h0M330 239h0M342 241h0M337 245h0M343 240h0M336 239h0M334 242h0M342 240h0M342 241h0M343 246h0M347 259h0M345 254h0M339 256h0M340 255h0M370 244h0M419 200h0M419 200h0M418 204h0M412 207h0M405 208h0M412 206h0M453 206h0M448 207h0M446 209h0M446 206h0M439 229h0M446 230h0M442 221h0M451 227h0M441 230h0M451 230h0M442 229h0M443 224h0M605 148h0M599 161h0M604 163h0M604 159h0M613 145h0M614 154h0M618 154h0M618 153h0M614 146h0M622 151h0M612 151h0M614 151h0M632 160h0M630 155h0M636 159h0M553 149h0M559 155h0M561 152h0M558 153h0M557 154h0M580 154h0M583 158h0M585 155h0M583 158h0M581 157h0M636 155h0M635 158h0M647 150h0M640 153h0M650 149h0M642 148h0M662 186h0M660 190h0M653 185h0M661 187h0M708 194h0M710 194h0M703 193h0M713 195h0M700 186h0M691 188h0M704 191h0M675 201h0M678 202h0M672 201h0M674 210h0M667 206h0M670 210h0M663 206h0M669 197h0M666 207h0M669 200h0M671 198h0M682 201h0M669 198h0M668 198h0M710 217h0M700 217h0M704 211h0M734 213h0M730 210h0M739 213h0M740 206h0M641 228h0M760 230h0M770 237h0M767 235h0M764 236h0M765 241h0M771 236h0M633 224h0M639 225h0M657 233h0M667 236h0M657 235h0M669 280h0M662 281h0M667 280h0M665 281h0M685 269h0M680 271h0M686 268h0M682 273h0M684 272h0M687 270h0M679 271h0M644 277h0M639 278h0M710 222h0M716 220h0M709 219h0M703 223h0M707 223h0M709 223h0M712 227h0M675 277h0M659 278h0M653 279h0M584 266h0M593 272h0M588 267h0M587 271h0M590 270h0M505 304h0M505 301h0M505 300h0M354 292h0M341 291h0M348 289h0M348 286h0M349 290h0M386 291h0M394 281h0M395 279h0M387 281h0M398 280h0M394 283h0M387 293h0M378 288h0M554 207h0M553 206h0M554 203h0M543 206h0M542 206h0M605 186h0M595 190h0M595 191h0M619 204h0M336 242h0M334 246h0M332 245h0M348 251h0M350 250h0M315 237h0M645 153h0M641 155h0M571 155h0M579 153h0M578 153h0M595 149h0M608 158h0M553 150h0M544 152h0M619 212h0M618 216h0M622 216h0M616 212h0M624 214h0M620 214h0M619 211h0M621 216h0M615 213h0M634 202h0" stroke="#52bd7d" stroke-width="3"/>
<path d="M331 242h0M334 241h0M343 245h0M343 245h0M349 259h0M369 247h0M418 201h0M454 206h0M443 210h0M444 208h0M452 223h0M446 227h0M445 230h0M447 224h0M443 228h0M442 229h0M597 159h0M617 145h0M612 144h0M618 146h0M626 158h0M588 154h0M639 155h0M638 158h0M633 158h0M643 151h0M710 193h0M713 195h0M681 210h0M677 208h0M672 204h0M681 209h0M674 208h0M670 206h0M667 210h0M701 214h0M709 214h0M727 210h0M740 210h0M742 212h0M737 209h0M758 224h0M765 239h0M770 236h0M662 237h0M656 234h0M666 237h0M688 270h0M645 277h0M647 278h0M709 221h0M715 222h0M710 224h0M659 279h0M586 271h0M596 271h0M507 303h0M501 300h0M342 290h0M389 289h0M394 286h0M396 285h0M391 288h0M386 287h0M564 208h0M544 209h0M602 188h0M578 155h0M552 152h0M546 152h0M620 122h0M623 217h0M617 214h0M625 215h0M615 217h0M636 206h0" stroke="#52bd7d" stroke-width="4"/>
<path d="M319 237h0M328 237h0M328 241h0M339 241h0M336 245h0M348 258h0M348 259h0M340 257h0M348 258h0M347 259h0M344 260h0M343 254h0M412 203h0M457 208h0M451 205h0M441 222h0M443 219h0M445 222h0M439 228h0M440 228h0M447 222h0M445 225h0M440 227h0M600 148h0M603 163h0M595 159h0M593 159h0M594 159h0M618 147h0M607 152h0M613 151h0M610 151h0M583 151h0M586 157h0M581 155h0M585 157h0M650 152h0M646 149h0M666 187h0M653 188h0M666 182h0M660 185h0M716 194h0M707 192h0M709 197h0M713 194h0M711 191h0M707 197h0M710 190h0M692 190h0M669 202h0M673 202h0M677 198h0M663 201h0M670 202h0M669 198h0M669 196h0M673 200h0M706 214h0M711 220h0M706 215h0M727 212h0M737 209h0M737 207h0M762 230h0M771 234h0M768 239h0M770 231h0M770 229h0M762 234h0M663 234h0M660 234h0M663 234h0M660 268h0M669 281h0M660 281h0M669 280h0M682 266h0M690 269h0M683 266h0M684 272h0M639 272h0M716 226h0M720 220h0M709 225h0M712 219h0M702 221h0M674 279h0M677 275h0M682 274h0M680 275h0M682 274h0M680 276h0M678 277h0M587 268h0M594 269h0M582 267h0M582 269h0M581 268h0M587 268h0M585 271h0M507 303h0M499 301h0M503 300h0M348 289h0M341 287h0M349 286h0M347 288h0M343 287h0M346 287h0M388 285h0M384 286h0M392 279h0M388 281h0M396 281h0M398 284h0M373 286h0M372 289h0M377 290h0M377 287h0M556 204h0M545 207h0M598 187h0M604 188h0M596 189h0M598 190h0M596 189h0M605 190h0M624 206h0M332 246h0M331 244h0M332 240h0M333 241h0M356 251h0M351 254h0M356 251h0M348 249h0M351 249h0M353 254h0M349 250h0M318 235h0M641 153h0M651 151h0M648 153h0M570 154h0M601 148h0M617 163h0M610 161h0M547 152h0M552 151h0M553 152h0M551 151h0M553 151h0M551 155h0M549 156h0M622 122h0M620 124h0M619 122h0M625 212h0M619 218h0M613 206h0M618 215h0" stroke="#5ebe73" stroke-width="2"/>
<path d="M318 237h0M327 236h0M332 236h0M328 240h0M336 238h0M329 238h0M324 237h0M337 238h0M331 245h0M339 238h0M332 242h0M347 257h0M345 257h0M345 259h0M418 202h0M412 202h0M417 200h0M449 204h0M446 206h0M447 219h0M451 228h0M445 222h0M439 228h0M443 228h0M605 148h0M610 147h0M606 145h0M590 156h0M604 161h0M591 160h0M596 160h0M602 162h0M615 143h0M621 145h0M611 149h0M612 149h0M559 151h0M588 155h0M586 157h0M587 154h0M632 155h0M629 153h0M632 153h0M633 155h0M634 159h0M645 150h0M653 184h0M656 189h0M662 182h0M655 188h0M655 193h0M706 190h0M703 193h0M711 191h0M708 194h0M707 191h0M697 187h0M693 192h0M673 208h0M672 201h0M677 200h0M704 214h0M701 217h0M710 217h0M705 217h0M726 208h0M731 213h0M761 229h0M764 231h0M772 231h0M766 238h0M766 238h0M761 232h0M760 231h0M643 228h0M632 225h0M664 237h0M664 235h0M656 239h0M664 281h0M663 281h0M667 279h0M662 281h0M678 271h0M682 272h0M720 221h0M713 216h0M708 223h0M717 223h0M706 219h0M709 226h0M715 219h0M714 225h0M705 226h0M717 226h0M711 223h0M678 274h0M582 265h0M589 267h0M586 267h0M497 304h0M502 304h0M350 288h0M342 289h0M344 287h0M397 287h0M395 285h0M398 286h0M396 280h0M391 280h0M390 284h0M392 278h0M387 286h0M399 289h0M383 288h0M377 284h0M385 289h0M552 201h0M548 208h0M602 183h0M331 243h0M335 238h0M337 239h0M338 240h0M337 245h0M347 250h0M356 250h0M633 147h0M612 161h0M613 158h0M617 157h0M609 157h0M615 164h0M608 158h0M609 155h0M619 157h0M546 148h0M547 153h0M612 212h0M624 215h0M619 212h0M623 211h0M617 217h0M615 211h0M616 215h0M613 208h0M629 204h0" stroke="#5ebe73" stroke-width="3"/>
<path d="M319 236h0M327 237h0M327 240h0M340 240h0M340 253h0M447 206h0M458 204h0M449 205h0M450 228h0M442 225h0M444 221h0M599 162h0M597 155h0M583 151h0M583 152h0M581 158h0M632 158h0M635 154h0M649 149h0M661 181h0M667 186h0M654 185h0M665 191h0M700 189h0M680 208h0M669 209h0M706 215h0M710 215h0M705 215h0M738 211h0M738 207h0M733 208h0M767 237h0M760 236h0M766 231h0M685 271h0M716 228h0M716 226h0M354 289h0M388 282h0M391 287h0M547 206h0M543 204h0M608 184h0M602 190h0M329 242h0M336 245h0M602 130h0M646 151h0M609 159h0M610 155h0M616 213h0M610 213h0M624 216h0M616 210h0M614 207h0M626 201h0M629 203h0" stroke="#5ebe73" stroke-width="4"/>
<path d="M323 235h0M332 241h0M334 237h0M324 235h0M324 237h0M340 242h0M340 243h0M342 259h0M343 255h0M346 255h0M341 256h0M455 202h0M443 223h0M446 227h0M443 226h0M441 226h0M447 222h0M585 149h0M582 150h0M588 151h0M601 146h0M605 146h0M599 148h0M606 149h0M634 151h0M600 158h0M603 161h0M603 156h0M598 162h0M596 153h0M592 161h0M618 149h0M615 150h0M616 149h0M604 185h0M578 151h0M587 148h0M586 154h0M578 154h0M615 145h0M618 146h0M624 144h0M620 145h0M634 155h0M633 150h0M640 152h0M637 158h0M637 151h0M646 148h0M639 152h0M641 150h0M660 191h0M665 183h0M656 186h0M666 185h0M707 189h0M705 188h0M671 205h0M671 199h0M670 199h0M664 201h0M669 201h0M668 198h0M681 205h0M675 201h0M702 212h0M700 215h0M725 209h0M736 207h0M644 228h0M757 229h0M759 231h0M769 232h0M641 226h0M637 226h0M666 279h0M680 271h0M679 272h0M683 264h0M681 270h0M684 265h0M682 265h0M711 215h0M709 220h0M701 221h0M700 220h0M714 221h0M717 222h0M719 222h0M711 215h0M705 219h0M672 271h0M681 273h0M681 275h0M590 267h0M591 266h0M350 285h0M388 282h0M395 282h0M375 286h0M376 284h0M545 205h0M546 205h0M606 182h0M600 188h0M599 187h0M330 244h0M341 238h0M336 237h0M347 249h0M358 248h0M641 153h0M569 153h0M577 154h0M575 152h0M572 156h0M578 155h0M570 153h0M620 162h0M613 159h0M616 156h0M556 148h0M552 153h0M553 154h0M548 148h0M620 208h0" stroke="#6bbf69" stroke-width="2"/>
<path d="M318 235h0M320 235h0M329 236h0M333 235h0M333 238h0M336 243h0M346 256h0M347 258h0M446 205h0M450 222h0M444 224h0M447 226h0M608 133h0M591 150h0M583 151h0M589 152h0M585 149h0M603 149h0M610 147h0M598 144h0M594 162h0M596 159h0M588 160h0M597 158h0M599 152h0M589 156h0M590 154h0M592 161h0M578 155h0M620 145h0M619 145h0M620 146h0M622 146h0M630 157h0M635 157h0M631 158h0M642 153h0M640 152h0M658 188h0M664 190h0M656 182h0M668 187h0M663 190h0M663 180h0M713 195h0M709 195h0M715 190h0M717 190h0M703 189h0M713 194h0M712 192h0M676 196h0M666 198h0M664 203h0M676 196h0M682 202h0M669 196h0M677 196h0M717 218h0M711 217h0M702 211h0M700 212h0M740 209h0M737 206h0M741 208h0M741 208h0M637 224h0M765 227h0M765 234h0M766 231h0M769 236h0M664 278h0M670 276h0M683 269h0M683 268h0M686 271h0M642 275h0M645 274h0M643 274h0M709 217h0M706 219h0M712 219h0M710 214h0M705 224h0M716 217h0M715 227h0M720 222h0M706 225h0M719 216h0M720 220h0M713 224h0M710 222h0M708 225h0M673 277h0M677 272h0M680 276h0M681 275h0M680 273h0M675 273h0M587 268h0M506 302h0M350 288h0M393 277h0M392 278h0M397 281h0M388 285h0M381 285h0M606 184h0M603 182h0M608 184h0M604 183h0M599 186h0M338 242h0M333 235h0M333 236h0M333 237h0M334 237h0M359 248h0M350 249h0M355 249h0M648 156h0M647 154h0M651 148h0M640 154h0M571 151h0M578 155h0M593 146h0M615 154h0M608 154h0M616 161h0M607 157h0M612 156h0M611 152h0M546 155h0M551 147h0M624 122h0M613 216h0M625 214h0M617 213h0M614 206h0M619 206h0M631 200h0M633 200h0" stroke="#6bbf69" stroke-width="3"/>
<path d="M322 232h0M324 232h0M335 239h0M345 257h0M349 255h0M417 201h0M448 208h0M447 225h0M453 225h0M443 222h0M591 149h0M598 144h0M603 149h0M606 146h0M602 163h0M595 162h0M591 164h0M616 149h0M613 147h0M612 143h0M651 153h0M644 147h0M664 181h0M655 187h0M663 180h0M659 179h0M701 191h0M708 189h0M712 193h0M712 190h0M693 186h0M698 186h0M676 198h0M667 204h0M668 204h0M675 198h0M723 217h0M708 211h0M638 226h0M644 229h0M763 230h0M663 233h0M664 278h0M717 222h0M675 275h0M677 277h0M593 267h0M383 282h0M604 184h0M600 189h0M336 236h0M330 242h0M335 237h0M334 244h0M336 238h0M341 241h0M337 244h0M354 252h0M356 253h0M641 153h0M576 156h0M573 155h0M612 160h0M608 160h0M618 159h0M546 154h0M550 152h0M620 209h0M621 206h0M622 214h0" stroke="#6bbf69" stroke-width="4"/>
<path d="M326 235h0M336 236h0M330 235h0M334 240h0M341 241h0M347 257h0M456 202h0M452 206h0M447 208h0M448 208h0M457 205h0M448 208h0M440 221h0M446 221h0M553 150h0M550 150h0M570 143h0M568 144h0M611 131h0M610 129h0M601 147h0M598 146h0M603 149h0M599 147h0M600 148h0M644 150h0M634 151h0M635 151h0M595 161h0M602 151h0M602 159h0M595 151h0M590 162h0M591 162h0M601 159h0M615 143h0M612 147h0M608 184h0M602 185h0M584 154h0M584 146h0M583 147h0M585 150h0M614 145h0M632 155h0M641 150h0M635 157h0M629 150h0M646 147h0M666 186h0M659 188h0M656 184h0M717 192h0M715 186h0M707 192h0M709 194h0M704 193h0M714 192h0M707 191h0M716 190h0M680 202h0M671 199h0M674 202h0M721 216h0M718 219h0M708 213h0M740 206h0M740 206h0M644 225h0M641 225h0M643 224h0M756 227h0M764 233h0M762 235h0M761 233h0M769 231h0M645 227h0M639 228h0M672 276h0M663 277h0M681 266h0M645 273h0M640 272h0M648 272h0M716 217h0M706 212h0M719 223h0M717 216h0M709 223h0M719 224h0M714 223h0M707 218h0M716 215h0M706 222h0M713 219h0M711 214h0M673 271h0M670 272h0M681 269h0M670 273h0M683 272h0M346 283h0M386 284h0M377 284h0M605 184h0M606 184h0M605 183h0M333 243h0M336 237h0M342 240h0M329 239h0M359 249h0M354 246h0M559 145h0M555 144h0M597 129h0M615 135h0M649 149h0M649 153h0M574 149h0M576 152h0M575 153h0M572 150h0M582 151h0M595 146h0M592 148h0M615 156h0M612 153h0M607 160h0M610 162h0M546 149h0M548 152h0M617 205h0" stroke="#79bf5f" stroke-width="2"/>
<path d="M331 231h0M331 238h0M330 232h0M326 239h0M332 236h0M336 240h0M337 239h0M336 241h0M337 242h0M447 206h0M448 201h0M456 207h0M447 203h0M447 225h0M442 224h0M445 220h0M564 151h0M608 129h0M608 132h0M582 149h0M586 149h0M587 150h0M608 145h0M603 150h0M604 147h0M611 143h0M601 146h0M601 144h0M598 146h0M629 139h0M622 140h0M638 149h0M641 153h0M600 153h0M606 155h0M593 161h0M593 160h0M600 157h0M614 145h0M607 187h0M607 183h0M604 184h0M582 147h0M581 154h0M584 149h0M579 154h0M585 150h0M585 154h0M616 146h0M622 144h0M630 157h0M632 153h0M639 157h0M631 149h0M642 149h0M654 185h0M659 188h0M657 184h0M665 186h0M707 192h0M702 191h0M716 194h0M710 195h0M671 201h0M670 200h0M673 201h0M682 201h0M670 199h0M679 199h0M699 214h0M704 214h0M701 210h0M738 207h0M642 228h0M641 225h0M761 228h0M772 234h0M760 233h0M761 231h0M764 231h0M644 226h0M638 225h0M647 226h0M668 279h0M680 271h0M688 266h0M642 274h0M644 271h0M639 273h0M713 222h0M713 219h0M716 219h0M718 216h0M716 213h0M709 214h0M711 211h0M715 219h0M675 276h0M677 273h0M389 278h0M391 278h0M609 183h0M608 182h0M603 181h0M609 183h0M609 182h0M335 234h0M340 236h0M334 241h0M330 243h0M352 249h0M353 252h0M356 247h0M357 252h0M354 252h0M632 145h0M647 147h0M649 152h0M648 151h0M598 146h0M599 147h0M591 146h0M590 148h0M617 158h0M546 145h0M546 147h0M545 150h0M619 119h0M616 119h0M623 122h0M617 209h0M613 212h0M621 211h0M611 210h0M621 207h0" stroke="#79bf5f" stroke-width="3"/>
<path d="M319 233h0M326 233h0M319 233h0M329 235h0M350 257h0M449 204h0M453 201h0M454 205h0M611 130h0M611 131h0M613 128h0M605 132h0M598 144h0M630 141h0M622 141h0M648 150h0M636 152h0M604 153h0M606 160h0M621 147h0M610 184h0M605 187h0M588 151h0M579 147h0M615 144h0M617 146h0M629 156h0M651 151h0M664 182h0M706 186h0M676 200h0M673 201h0M674 200h0M713 216h0M713 217h0M706 213h0M645 223h0M760 227h0M759 226h0M768 231h0M761 231h0M642 226h0M683 270h0M681 268h0M648 272h0M646 272h0M638 273h0M716 225h0M714 216h0M705 221h0M710 224h0M708 211h0M704 219h0M701 221h0M701 222h0M703 213h0M714 213h0M714 222h0M672 276h0M676 268h0M680 271h0M608 184h0M340 236h0M335 241h0M354 247h0M618 134h0M646 153h0M640 148h0M646 151h0M638 149h0M571 152h0M581 150h0M580 150h0M590 146h0M607 154h0M614 159h0M613 159h0M556 153h0M620 121h0M618 120h0M614 208h0M622 210h0M617 204h0" stroke="#79bf5f" stroke-width="4"/>
<path d="M331 233h0M332 234h0M326 231h0M333 236h0M347 256h0M353 253h0M450 205h0M457 204h0M450 207h0M456 201h0M457 203h0M443 219h0M547 147h0M547 149h0M547 149h0M561 149h0M561 150h0M560 151h0M558 152h0M561 151h0M571 142h0M606 127h0M605 129h0M586 148h0M582 149h0M599 148h0M603 149h0M599 143h0M630 137h0M619 137h0M644 150h0M644 149h0M642 152h0M635 152h0M637 151h0M641 149h0M633 150h0M600 153h0M595 154h0M599 161h0M604 154h0M610 183h0M608 183h0M608 183h0M585 150h0M588 153h0M583 150h0M588 153h0M578 148h0M584 150h0M616 145h0M628 149h0M631 155h0M633 149h0M647 148h0M663 185h0M656 182h0M710 186h0M709 183h0M711 186h0M703 187h0M714 190h0M710 190h0M675 201h0M715 214h0M720 215h0M715 217h0M721 218h0M711 214h0M715 218h0M706 212h0M647 222h0M761 225h0M766 232h0M640 228h0M676 266h0M658 267h0M663 265h0M663 264h0M661 274h0M662 281h0M667 273h0M664 277h0M659 278h0M660 275h0M672 276h0M660 275h0M661 278h0M688 265h0M685 268h0M637 273h0M643 271h0M643 271h0M646 270h0M637 271h0M711 221h0M718 216h0M716 212h0M705 215h0M701 220h0M718 214h0M704 222h0M704 219h0M717 218h0M677 270h0M670 271h0M675 268h0M393 278h0M389 279h0M386 280h0M609 183h0M606 182h0M603 181h0M337 240h0M330 241h0M351 247h0M346 245h0M348 247h0M356 243h0M351 248h0M570 133h0M557 142h0M600 128h0M599 130h0M594 127h0M600 130h0M604 130h0M613 133h0M627 142h0M630 145h0M644 145h0M638 149h0M640 152h0M650 150h0M640 150h0M641 146h0M574 148h0M581 149h0M573 145h0M597 148h0M598 149h0M595 150h0M590 144h0M598 149h0M608 154h0M545 146h0M548 147h0M547 149h0M546 148h0M554 151h0M548 144h0M548 151h0M623 117h0M619 123h0M623 119h0M616 121h0M617 211h0M617 206h0" stroke="#86be54" stroke-width="2"/>
<path d="M334 239h0M344 253h0M350 256h0M348 251h0M343 251h0M457 200h0M450 201h0M451 205h0M458 206h0M450 221h0M443 222h0M551 148h0M552 150h0M562 154h0M562 150h0M575 142h0M589 136h0M609 129h0M602 128h0M608 130h0M603 129h0M606 129h0M590 147h0M607 141h0M596 142h0M597 140h0M627 140h0M645 148h0M632 149h0M636 150h0M599 155h0M601 160h0M597 153h0M598 156h0M617 144h0M578 153h0M587 151h0M588 148h0M582 151h0M624 142h0M633 145h0M633 154h0M634 146h0M640 155h0M629 153h0M638 146h0M643 147h0M665 181h0M662 180h0M661 182h0M657 182h0M654 183h0M659 181h0M658 184h0M706 190h0M715 186h0M715 189h0M707 185h0M711 192h0M673 195h0M666 198h0M666 199h0M718 218h0M709 214h0M709 217h0M718 215h0M720 214h0M716 214h0M715 213h0M723 215h0M709 216h0M706 211h0M646 223h0M760 226h0M762 230h0M761 229h0M765 231h0M761 232h0M638 226h0M639 225h0M673 275h0M663 275h0M683 267h0M682 266h0M683 269h0M689 264h0M640 273h0M649 270h0M637 272h0M712 217h0M713 220h0M716 221h0M708 212h0M701 216h0M703 217h0M702 218h0M678 269h0M674 266h0M677 273h0M675 272h0M393 279h0M332 236h0M331 241h0M335 241h0M334 237h0M336 240h0M351 246h0M348 249h0M559 133h0M569 134h0M618 134h0M627 143h0M648 151h0M647 148h0M647 146h0M643 144h0M645 153h0M575 147h0M579 148h0M570 148h0M577 154h0M594 149h0M591 147h0M597 148h0M608 153h0M609 158h0M553 147h0M545 146h0M553 147h0M553 146h0M624 118h0M618 204h0M619 208h0M617 204h0M624 210h0" stroke="#86be54" stroke-width="3"/>
<path d="M328 237h0M340 239h0M346 256h0M339 251h0M455 202h0M450 206h0M439 222h0M547 149h0M563 151h0M611 131h0M606 130h0M592 149h0M582 149h0M583 147h0M583 150h0M633 151h0M641 147h0M603 156h0M594 153h0M588 159h0M589 154h0M593 152h0M586 153h0M581 148h0M629 153h0M662 179h0M708 189h0M679 197h0M672 196h0M720 217h0M717 220h0M721 215h0M761 229h0M757 225h0M659 265h0M663 267h0M661 279h0M659 278h0M669 276h0M661 275h0M671 275h0M680 266h0M679 266h0M701 222h0M703 214h0M678 267h0M679 272h0M392 277h0M392 278h0M391 276h0M602 179h0M359 247h0M350 245h0M353 250h0M597 129h0M634 144h0M647 144h0M573 151h0M568 151h0M597 149h0M587 143h0M589 146h0M594 149h0M601 146h0M607 154h0M605 158h0M609 159h0M608 154h0M613 160h0M556 148h0M549 148h0M621 118h0" stroke="#86be54" stroke-width="4"/>
<path d="M328 234h0M335 233h0M328 233h0M330 228h0M327 232h0M345 253h0M351 253h0M349 252h0M339 252h0M346 252h0M448 203h0M450 206h0M546 147h0M560 153h0M576 142h0M572 142h0M589 119h0M602 130h0M590 150h0M600 141h0M605 138h0M623 140h0M630 138h0M626 137h0M639 153h0M635 148h0M632 147h0M648 145h0M644 151h0M643 149h0M604 155h0M601 150h0M605 156h0M597 153h0M597 150h0M599 158h0M605 155h0M606 184h0M605 181h0M582 151h0M586 149h0M617 145h0M613 140h0M640 151h0M634 146h0M628 149h0M627 152h0M627 152h0M657 182h0M711 186h0M711 183h0M710 193h0M710 185h0M711 185h0M714 217h0M715 218h0M724 212h0M717 214h0M717 215h0M642 217h0M641 220h0M650 221h0M642 225h0M758 228h0M761 226h0M755 224h0M763 222h0M757 228h0M764 231h0M764 229h0M640 223h0M640 223h0M635 225h0M672 265h0M662 267h0M656 265h0M659 265h0M660 263h0M658 279h0M664 272h0M670 274h0M658 274h0M662 279h0M658 276h0M688 265h0M641 271h0M648 269h0M642 273h0M647 273h0M643 274h0M711 212h0M705 212h0M675 268h0M669 274h0M669 272h0M679 271h0M606 183h0M336 238h0M330 238h0M333 238h0M355 247h0M350 247h0M562 132h0M561 136h0M564 134h0M563 136h0M561 144h0M558 142h0M599 128h0M599 128h0M614 133h0M632 144h0M632 145h0M647 148h0M645 144h0M579 152h0M571 149h0M570 153h0M579 152h0M571 144h0M581 147h0M572 152h0M602 143h0M593 142h0M615 156h0M610 156h0M607 156h0M612 156h0M554 147h0M620 121h0M618 117h0M616 120h0M617 120h0M618 118h0M611 208h0M620 207h0" stroke="#93bd4a" stroke-width="2"/>
<path d="M332 233h0M327 234h0M333 236h0M327 234h0M328 234h0M331 230h0M349 257h0M341 256h0M338 255h0M340 251h0M348 253h0M340 256h0M345 249h0M342 257h0M347 254h0M450 202h0M456 199h0M450 205h0M450 199h0M560 152h0M577 132h0M565 141h0M594 118h0M606 130h0M585 145h0M589 145h0M588 150h0M583 149h0M605 139h0M612 140h0M597 147h0M609 141h0M610 141h0M611 146h0M608 147h0M625 137h0M623 137h0M630 137h0M629 137h0M627 137h0M626 141h0M620 137h0M639 152h0M641 152h0M638 151h0M641 147h0M598 152h0M600 150h0M600 151h0M605 155h0M594 151h0M591 155h0M608 182h0M607 185h0M580 151h0M614 140h0M622 142h0M612 140h0M624 142h0M639 147h0M640 146h0M633 149h0M640 146h0M629 152h0M628 151h0M659 180h0M716 187h0M707 192h0M714 187h0M710 184h0M709 213h0M715 212h0M719 217h0M724 213h0M734 205h0M733 206h0M646 223h0M646 221h0M644 226h0M646 225h0M759 226h0M761 225h0M761 225h0M769 230h0M765 233h0M767 227h0M634 225h0M645 226h0M659 267h0M665 266h0M665 276h0M659 276h0M664 273h0M666 279h0M681 266h0M680 266h0M680 265h0M708 218h0M710 211h0M718 216h0M713 215h0M680 269h0M387 278h0M388 278h0M605 182h0M605 184h0M603 178h0M333 235h0M333 235h0M332 235h0M331 239h0M334 234h0M333 238h0M357 243h0M351 248h0M355 244h0M352 247h0M566 134h0M557 144h0M560 141h0M558 144h0M582 125h0M601 126h0M636 144h0M635 142h0M637 142h0M643 147h0M639 152h0M576 148h0M570 150h0M575 153h0M570 151h0M569 149h0M601 143h0M596 147h0M599 148h0M591 143h0M592 141h0M611 156h0M608 153h0M609 156h0M611 152h0M609 156h0M614 158h0M547 149h0M553 147h0M620 120h0M622 206h0M625 208h0M612 207h0M620 206h0" stroke="#93bd4a" stroke-width="3"/>
<path d="M330 231h0M334 233h0M346 255h0M341 251h0M448 205h0M450 203h0M442 219h0M552 148h0M561 149h0M561 150h0M594 119h0M593 118h0M592 137h0M611 130h0M613 128h0M612 127h0M588 146h0M631 139h0M625 141h0M645 147h0M642 147h0M647 150h0M600 155h0M595 150h0M590 157h0M588 156h0M595 156h0M606 181h0M586 147h0M614 144h0M621 144h0M617 143h0M616 144h0M670 189h0M705 184h0M713 189h0M721 212h0M714 212h0M734 206h0M645 220h0M639 223h0M765 225h0M758 227h0M766 231h0M646 223h0M671 264h0M675 266h0M664 279h0M661 279h0M640 272h0M640 271h0M704 218h0M702 216h0M706 217h0M711 212h0M670 272h0M387 277h0M608 179h0M609 177h0M345 249h0M351 245h0M348 244h0M604 127h0M598 126h0M601 130h0M638 143h0M630 145h0M649 150h0M576 151h0M576 148h0M570 151h0M594 146h0M594 149h0M608 154h0M549 148h0M625 116h0M624 208h0" stroke="#93bd4a" stroke-width="4"/>
<path d="M349 255h0M349 253h0M451 203h0M452 201h0M445 203h0M445 203h0M556 143h0M568 147h0M560 149h0M564 149h0M566 147h0M573 130h0M573 132h0M571 138h0M571 141h0M570 138h0M577 138h0M570 139h0M596 135h0M605 129h0M606 129h0M601 130h0M606 130h0M602 123h0M593 147h0M590 148h0M586 148h0M581 145h0M589 146h0M595 143h0M605 144h0M596 144h0M603 145h0M600 139h0M599 145h0M623 140h0M623 134h0M635 151h0M641 150h0M638 148h0M644 148h0M638 148h0M639 148h0M646 144h0M591 155h0M590 154h0M598 155h0M600 182h0M600 183h0M588 149h0M588 149h0M586 149h0M624 144h0M615 142h0M640 149h0M638 146h0M640 153h0M631 147h0M629 150h0M672 191h0M679 187h0M658 182h0M709 184h0M714 187h0M718 211h0M722 217h0M718 213h0M719 214h0M722 213h0M724 212h0M735 205h0M641 222h0M648 218h0M646 220h0M648 222h0M643 220h0M636 220h0M641 224h0M637 225h0M646 224h0M668 264h0M672 265h0M661 264h0M659 266h0M661 269h0M662 263h0M665 269h0M660 271h0M686 265h0M686 264h0M637 271h0M647 272h0M643 268h0M637 271h0M716 218h0M713 215h0M673 268h0M681 271h0M609 179h0M607 183h0M353 244h0M347 248h0M353 247h0M349 246h0M348 246h0M354 247h0M351 242h0M565 136h0M565 130h0M566 134h0M570 135h0M559 142h0M554 143h0M561 142h0M552 142h0M581 125h0M581 123h0M612 134h0M613 132h0M614 132h0M618 130h0M617 133h0M634 145h0M630 142h0M628 143h0M634 146h0M648 148h0M650 146h0M645 146h0M646 146h0M569 150h0M575 144h0M579 150h0M568 147h0M573 150h0M593 140h0M589 146h0M602 145h0M590 148h0M592 147h0M596 142h0M598 139h0M600 149h0M591 144h0M550 147h0M547 146h0M619 121h0" stroke="#a1bc40" stroke-width="2"/>
<path d="M333 231h0M326 232h0M325 231h0M345 251h0M339 252h0M346 250h0M344 249h0M349 249h0M346 251h0M340 252h0M353 256h0M351 246h0M345 253h0M342 250h0M451 199h0M445 202h0M448 204h0M451 199h0M550 148h0M544 144h0M552 146h0M559 144h0M549 146h0M546 146h0M565 153h0M560 151h0M579 132h0M575 132h0M569 138h0M563 140h0M591 119h0M596 135h0M602 128h0M606 126h0M602 125h0M591 141h0M594 142h0M591 148h0M587 144h0M593 145h0M587 149h0M579 143h0M587 143h0M590 143h0M608 136h0M612 144h0M608 142h0M600 141h0M597 143h0M610 145h0M611 137h0M602 141h0M631 137h0M618 135h0M630 136h0M620 134h0M625 136h0M631 140h0M638 149h0M637 149h0M643 149h0M642 147h0M638 145h0M636 148h0M637 146h0M595 154h0M610 181h0M603 181h0M601 184h0M606 182h0M581 148h0M588 148h0M612 141h0M612 139h0M634 145h0M635 150h0M638 145h0M639 151h0M670 189h0M670 190h0M713 189h0M710 215h0M721 210h0M719 217h0M712 213h0M640 218h0M639 222h0M649 222h0M649 220h0M646 224h0M640 220h0M647 222h0M757 228h0M756 227h0M762 226h0M644 221h0M636 220h0M641 225h0M648 225h0M633 221h0M675 265h0M668 262h0M673 263h0M657 264h0M663 267h0M659 274h0M659 277h0M669 278h0M661 271h0M661 272h0M682 263h0M682 262h0M645 275h0M639 270h0M646 269h0M648 271h0M636 267h0M644 271h0M707 215h0M710 211h0M705 216h0M713 212h0M678 271h0M608 178h0M610 181h0M340 238h0M333 235h0M564 133h0M567 136h0M567 131h0M562 132h0M561 142h0M562 142h0M581 125h0M600 127h0M603 124h0M603 129h0M621 129h0M614 130h0M613 131h0M610 132h0M633 144h0M641 149h0M650 147h0M646 147h0M642 147h0M646 146h0M647 144h0M570 147h0M567 149h0M568 150h0M572 144h0M576 148h0M595 147h0M595 144h0M608 153h0M620 118h0M623 115h0" stroke="#a1bc40" stroke-width="3"/>
<path d="M346 252h0M351 253h0M454 201h0M455 200h0M455 202h0M451 202h0M550 149h0M568 147h0M560 152h0M577 133h0M575 130h0M570 144h0M607 129h0M590 145h0M587 148h0M589 149h0M591 149h0M606 138h0M611 145h0M603 135h0M610 140h0M610 143h0M631 134h0M596 153h0M592 155h0M600 150h0M600 152h0M600 180h0M580 150h0M618 141h0M640 150h0M630 147h0M629 149h0M678 190h0M677 187h0M714 189h0M716 210h0M709 211h0M713 212h0M721 215h0M736 204h0M761 228h0M760 226h0M763 224h0M644 221h0M644 224h0M663 266h0M658 264h0M657 262h0M662 268h0M666 275h0M670 271h0M672 278h0M645 270h0M676 266h0M682 271h0M676 271h0M679 270h0M671 272h0M610 182h0M611 180h0M350 243h0M565 134h0M569 136h0M556 143h0M557 140h0M557 143h0M564 141h0M560 141h0M603 125h0M595 129h0M595 127h0M614 133h0M617 133h0M635 141h0M580 144h0M577 141h0M598 143h0M589 141h0M611 154h0M552 148h0M555 147h0M616 118h0M616 120h0M615 205h0M621 205h0" stroke="#a1bc40" stroke-width="4"/>
<path d="M331 232h0M325 231h0M331 231h0M332 231h0M351 248h0M352 251h0M545 142h0M549 144h0M546 143h0M554 147h0M550 147h0M544 143h0M554 144h0M559 149h0M569 145h0M562 152h0M563 149h0M563 150h0M567 148h0M582 130h0M570 140h0M572 143h0M569 138h0M578 138h0M563 136h0M566 141h0M565 142h0M592 118h0M608 128h0M613 124h0M605 127h0M605 129h0M606 127h0M589 141h0M594 148h0M583 149h0M585 143h0M588 145h0M599 140h0M599 138h0M599 139h0M608 137h0M626 141h0M630 132h0M639 149h0M643 150h0M638 148h0M596 153h0M598 149h0M603 152h0M598 149h0M604 178h0M620 136h0M614 138h0M622 142h0M638 146h0M633 148h0M633 146h0M635 146h0M636 145h0M640 146h0M676 187h0M675 187h0M674 189h0M703 187h0M707 184h0M716 189h0M708 185h0M714 211h0M709 216h0M724 210h0M715 214h0M637 221h0M639 222h0M647 220h0M642 221h0M635 224h0M647 221h0M638 222h0M641 223h0M648 224h0M670 264h0M674 262h0M666 265h0M659 262h0M660 268h0M672 276h0M671 270h0M643 269h0M639 265h0M639 271h0M644 271h0M645 273h0M639 267h0M645 268h0M641 272h0M712 210h0M703 213h0M603 182h0M337 235h0M352 242h0M349 242h0M358 245h0M571 133h0M560 144h0M558 138h0M586 125h0M587 124h0M600 123h0M599 123h0M621 128h0M617 131h0M625 142h0M629 144h0M635 139h0M633 139h0M630 140h0M643 148h0M575 145h0M575 141h0M571 146h0M577 148h0M571 146h0M569 149h0M581 143h0M599 141h0M602 138h0M593 143h0M549 144h0M554 145h0M622 118h0M615 120h0M618 113h0M620 116h0M624 116h0" stroke="#aeba38" stroke-width="2"/>
<path d="M325 233h0M330 233h0M328 230h0M341 253h0M342 253h0M353 248h0M343 248h0M456 202h0M455 199h0M549 146h0M564 145h0M565 145h0M564 151h0M574 131h0M570 136h0M573 138h0M570 141h0M592 118h0M594 136h0M595 134h0M591 137h0M607 125h0M613 124h0M601 124h0M595 145h0M592 142h0M590 145h0M585 141h0M595 141h0M590 142h0M593 148h0M583 143h0M591 137h0M600 137h0M600 137h0M605 141h0M604 135h0M607 136h0M634 132h0M632 134h0M622 136h0M633 137h0M617 134h0M644 142h0M643 145h0M645 150h0M636 150h0M646 151h0M595 151h0M595 151h0M592 151h0M601 178h0M610 179h0M609 181h0M619 139h0M624 141h0M624 143h0M619 143h0M636 149h0M632 149h0M630 150h0M635 146h0M671 185h0M677 187h0M705 188h0M709 187h0M712 211h0M711 212h0M712 211h0M710 211h0M717 210h0M733 203h0M734 206h0M643 223h0M643 216h0M647 217h0M644 220h0M756 223h0M762 226h0M758 221h0M649 223h0M643 220h0M649 219h0M638 223h0M668 265h0M660 264h0M659 261h0M666 267h0M673 273h0M647 270h0M645 264h0M710 213h0M675 269h0M610 177h0M608 178h0M605 178h0M606 181h0M608 180h0M356 246h0M352 242h0M566 129h0M560 128h0M564 131h0M560 142h0M560 143h0M560 141h0M558 139h0M553 138h0M585 121h0M597 127h0M596 123h0M609 132h0M614 131h0M616 132h0M617 131h0M638 144h0M635 141h0M632 143h0M632 144h0M632 145h0M637 141h0M625 139h0M636 140h0M627 142h0M636 138h0M634 143h0M647 148h0M643 145h0M576 149h0M577 140h0M570 144h0M576 143h0M571 141h0M575 147h0M575 141h0M592 136h0M588 144h0M588 146h0M545 147h0M553 144h0M616 118h0M619 114h0M622 118h0" stroke="#aeba38" stroke-width="3"/>
<path d="M325 233h0M328 230h0M349 248h0M351 251h0M562 147h0M582 130h0M568 137h0M569 142h0M594 133h0M603 121h0M610 125h0M589 141h0M583 139h0M594 142h0M631 137h0M622 136h0M631 144h0M640 151h0M631 142h0M610 179h0M601 184h0M604 180h0M612 137h0M630 148h0M638 150h0M636 146h0M631 147h0M641 150h0M712 213h0M758 222h0M646 220h0M672 264h0M678 262h0M668 275h0M660 270h0M662 271h0M666 271h0M670 269h0M682 263h0M637 266h0M641 267h0M705 214h0M678 265h0M353 245h0M348 246h0M563 134h0M553 141h0M610 129h0M620 130h0M628 141h0M638 139h0M636 142h0M635 144h0M649 146h0M643 148h0M579 144h0M575 141h0M569 148h0M601 144h0M597 137h0M619 117h0M622 119h0M615 119h0" stroke="#aeba38" stroke-width="4"/>
<path d="M351 249h0M339 252h0M339 251h0M349 247h0M546 143h0M548 142h0M552 145h0M545 144h0M554 140h0M547 143h0M559 144h0M569 148h0M561 147h0M580 129h0M582 130h0M583 128h0M581 128h0M569 135h0M568 135h0M564 140h0M588 116h0M588 116h0M587 134h0M608 122h0M586 146h0M580 142h0M581 143h0M584 137h0M589 140h0M602 139h0M599 137h0M605 134h0M606 138h0M600 137h0M631 139h0M627 134h0M634 131h0M618 136h0M628 140h0M637 141h0M645 142h0M643 148h0M646 142h0M605 180h0M608 181h0M603 176h0M620 142h0M619 141h0M621 138h0M622 139h0M617 134h0M615 139h0M667 184h0M676 190h0M677 185h0M676 185h0M676 188h0M715 185h0M718 207h0M722 210h0M708 212h0M645 215h0M647 221h0M647 217h0M638 222h0M761 226h0M640 224h0M638 216h0M634 223h0M648 218h0M667 261h0M673 259h0M674 259h0M671 266h0M667 260h0M665 258h0M661 260h0M663 259h0M659 270h0M649 271h0M646 270h0M643 264h0M634 270h0M649 268h0M677 267h0M601 180h0M569 134h0M569 131h0M565 131h0M564 139h0M562 141h0M557 142h0M556 138h0M583 125h0M586 122h0M580 123h0M605 126h0M598 126h0M603 126h0M603 125h0M602 123h0M620 128h0M615 130h0M621 130h0M634 138h0M628 141h0M637 144h0M625 142h0M631 137h0M638 144h0M635 141h0M599 137h0M594 138h0M593 136h0M601 136h0M601 138h0M596 135h0M591 136h0M596 134h0M620 116h0" stroke="#bab932" stroke-width="2"/>
<path d="M328 229h0M331 230h0M344 248h0M341 247h0M344 248h0M349 245h0M350 252h0M549 148h0M545 142h0M556 140h0M558 144h0M544 145h0M550 145h0M549 146h0M555 142h0M563 151h0M556 145h0M568 144h0M573 129h0M578 128h0M567 139h0M568 139h0M574 139h0M574 138h0M576 137h0M590 135h0M595 135h0M592 136h0M586 132h0M601 128h0M613 125h0M614 124h0M604 123h0M595 145h0M591 145h0M590 146h0M580 144h0M607 140h0M610 138h0M601 136h0M601 134h0M602 137h0M634 132h0M625 130h0M621 133h0M624 134h0M626 130h0M628 134h0M632 131h0M647 141h0M650 145h0M631 140h0M648 143h0M639 142h0M638 141h0M632 146h0M603 176h0M603 183h0M607 181h0M616 140h0M620 141h0M621 142h0M622 135h0M634 146h0M674 183h0M668 183h0M721 209h0M717 207h0M723 213h0M709 212h0M709 214h0M733 205h0M733 202h0M647 219h0M649 221h0M639 217h0M645 219h0M644 222h0M646 218h0M647 215h0M642 221h0M672 261h0M669 265h0M665 258h0M660 262h0M666 261h0M667 273h0M671 271h0M660 272h0M658 273h0M659 273h0M662 275h0M666 273h0M642 265h0M649 270h0M647 262h0M637 264h0M648 269h0M639 265h0M672 267h0M347 244h0M569 127h0M561 130h0M559 129h0M561 132h0M568 129h0M554 140h0M551 139h0M598 124h0M593 122h0M601 127h0M612 132h0M614 133h0M620 128h0M619 133h0M619 130h0M609 129h0M613 130h0M633 141h0M626 141h0M644 143h0M569 144h0M581 146h0M572 142h0M572 142h0M593 144h0M593 136h0M594 134h0M597 135h0M599 144h0M623 115h0" stroke="#bab932" stroke-width="3"/>
<path d="M332 231h0M456 199h0M549 141h0M546 145h0M548 146h0M546 144h0M567 150h0M566 145h0M558 144h0M558 150h0M574 142h0M573 140h0M576 135h0M587 133h0M605 125h0M609 126h0M579 144h0M586 136h0M587 146h0M588 145h0M593 141h0M611 141h0M606 136h0M628 133h0M635 141h0M640 143h0M644 141h0M605 179h0M609 179h0M613 140h0M614 138h0M618 141h0M637 147h0M721 206h0M709 213h0M738 204h0M640 220h0M641 216h0M641 220h0M641 221h0M760 224h0M640 216h0M643 220h0M649 223h0M668 261h0M673 263h0M678 263h0M664 261h0M670 269h0M667 267h0M643 271h0M637 266h0M638 268h0M603 175h0M610 180h0M353 241h0M568 126h0M567 131h0M557 138h0M553 138h0M588 121h0M596 128h0M619 133h0M643 145h0M581 143h0M598 139h0M625 117h0" stroke="#bab932" stroke-width="4"/>
<path d="M328 229h0M341 250h0M339 249h0M346 246h0M545 142h0M557 140h0M547 143h0M552 147h0M549 146h0M558 145h0M551 147h0M546 139h0M545 144h0M548 145h0M556 142h0M563 140h0M563 150h0M562 143h0M580 132h0M574 128h0M574 128h0M579 126h0M576 138h0M575 139h0M567 139h0M575 134h0M591 118h0M595 116h0M592 119h0M594 135h0M592 133h0M587 131h0M596 135h0M603 125h0M604 121h0M613 123h0M592 143h0M583 141h0M582 141h0M592 140h0M609 138h0M604 134h0M607 135h0M617 131h0M632 136h0M627 133h0M618 137h0M633 136h0M626 136h0M622 131h0M632 137h0M627 130h0M647 146h0M644 145h0M637 146h0M641 147h0M642 145h0M639 138h0M633 147h0M644 137h0M605 178h0M623 141h0M638 145h0M669 184h0M674 184h0M722 208h0M721 211h0M722 209h0M719 209h0M719 209h0M731 204h0M732 202h0M731 201h0M641 218h0M646 219h0M760 223h0M760 222h0M634 221h0M636 215h0M637 217h0M638 213h0M634 217h0M641 222h0M668 262h0M678 260h0M675 260h0M661 259h0M657 261h0M662 264h0M663 265h0M664 260h0M667 259h0M665 260h0M670 271h0M664 268h0M666 268h0M669 269h0M636 267h0M641 264h0M604 179h0M566 125h0M563 129h0M560 130h0M565 129h0M552 136h0M581 125h0M601 120h0M596 124h0M600 125h0M598 120h0M616 132h0M637 142h0M636 140h0M590 141h0M598 141h0M624 114h0" stroke="#c6b62e" stroke-width="2"/>
<path d="M344 250h0M345 248h0M339 249h0M543 144h0M553 140h0M551 143h0M555 140h0M561 144h0M566 145h0M564 141h0M557 144h0M556 149h0M560 143h0M559 147h0M584 127h0M572 127h0M576 141h0M577 135h0M565 134h0M565 141h0M563 140h0M570 135h0M569 140h0M593 119h0M590 118h0M589 115h0M598 132h0M586 133h0M596 136h0M594 132h0M612 124h0M603 122h0M609 121h0M611 121h0M589 142h0M589 143h0M603 138h0M600 135h0M610 140h0M598 138h0M631 137h0M617 132h0M632 134h0M616 128h0M621 134h0M620 131h0M621 138h0M639 136h0M645 139h0M639 137h0M631 141h0M649 145h0M639 135h0M644 144h0M611 180h0M603 176h0M603 177h0M609 178h0M614 136h0M622 135h0M620 135h0M675 183h0M668 186h0M677 189h0M710 209h0M711 211h0M711 206h0M710 207h0M736 203h0M733 205h0M641 220h0M644 216h0M638 219h0M645 220h0M758 221h0M764 223h0M756 223h0M647 219h0M647 221h0M646 221h0M635 217h0M671 262h0M671 259h0M656 261h0M663 259h0M661 258h0M663 263h0M658 260h0M665 259h0M672 271h0M663 272h0M641 267h0M638 267h0M609 178h0M569 126h0M561 132h0M563 126h0M567 131h0M563 137h0M552 140h0M553 142h0M580 124h0M601 125h0M598 118h0M602 124h0M610 125h0M609 131h0M628 136h0M626 142h0M574 144h0M577 140h0M577 145h0M578 142h0M595 140h0M594 143h0M596 140h0M592 141h0M594 134h0M620 114h0M623 115h0" stroke="#c6b62e" stroke-width="3"/>
<path d="M345 250h0M565 142h0M572 129h0M581 131h0M575 130h0M572 133h0M592 117h0M592 131h0M612 123h0M611 126h0M590 144h0M580 144h0M604 138h0M625 128h0M631 136h0M630 130h0M624 133h0M646 141h0M603 177h0M607 180h0M677 187h0M676 185h0M676 188h0M712 212h0M713 211h0M732 204h0M643 219h0M645 219h0M641 219h0M648 218h0M644 220h0M649 222h0M642 214h0M656 263h0M663 262h0M660 268h0M660 269h0M668 269h0M660 270h0M669 270h0M664 268h0M635 264h0M649 268h0M637 262h0M564 131h0M564 126h0M565 124h0M568 131h0M569 130h0M554 142h0M551 136h0M561 136h0M554 135h0M583 125h0M583 123h0M607 125h0M617 127h0M633 138h0M629 134h0M631 135h0M575 141h0M591 135h0M597 143h0M590 142h0M596 142h0" stroke="#c6b62e" stroke-width="4"/>
<path d="M352 248h0M341 247h0M552 140h0M555 137h0M566 141h0M555 147h0M564 141h0M564 141h0M574 124h0M571 125h0M575 136h0M565 132h0M569 138h0M571 136h0M591 115h0M594 117h0M591 134h0M595 132h0M605 122h0M601 124h0M602 123h0M584 138h0M588 141h0M583 141h0M581 142h0M588 136h0M604 135h0M620 136h0M625 127h0M637 140h0M633 146h0M637 143h0M633 137h0M638 144h0M601 180h0M620 138h0M613 139h0M612 139h0M672 183h0M671 184h0M682 186h0M667 185h0M671 187h0M668 186h0M713 211h0M716 206h0M723 212h0M734 204h0M737 200h0M646 217h0M644 216h0M758 223h0M758 221h0M759 221h0M645 218h0M648 219h0M645 213h0M644 217h0M635 220h0M646 215h0M639 217h0M666 262h0M677 256h0M679 261h0M677 260h0M669 258h0M675 258h0M678 258h0M661 256h0M665 258h0M668 259h0M662 262h0M666 261h0M662 267h0M668 267h0M642 266h0M649 266h0M648 269h0M648 262h0M606 177h0M567 125h0M564 125h0M568 128h0M559 127h0M564 125h0M568 124h0M562 140h0M559 139h0M551 137h0M557 133h0M554 139h0M582 121h0M597 125h0M605 122h0M593 123h0M596 125h0M594 121h0M601 122h0M597 125h0M612 126h0M609 127h0M635 135h0M633 136h0M628 138h0M636 135h0M569 143h0M572 142h0M572 141h0M595 137h0M600 141h0M593 140h0M597 136h0M621 115h0M618 115h0" stroke="#d1b530" stroke-width="2"/>
<path d="M339 249h0M547 141h0M551 141h0M550 134h0M549 137h0M548 137h0M556 137h0M560 144h0M566 144h0M566 143h0M557 147h0M556 144h0M576 129h0M563 133h0M563 133h0M570 135h0M572 136h0M566 137h0M578 138h0M566 137h0M589 114h0M590 117h0M588 115h0M588 129h0M588 135h0M609 124h0M608 122h0M590 140h0M606 135h0M623 125h0M633 126h0M620 125h0M626 135h0M634 135h0M627 128h0M626 125h0M624 135h0M618 126h0M634 146h0M647 144h0M635 142h0M634 139h0M637 143h0M641 142h0M644 145h0M639 138h0M607 179h0M624 140h0M669 183h0M678 185h0M668 183h0M682 181h0M667 185h0M667 183h0M715 206h0M710 209h0M724 210h0M713 209h0M719 206h0M735 203h0M641 218h0M757 222h0M642 217h0M649 220h0M645 214h0M677 261h0M678 261h0M670 262h0M672 259h0M674 263h0M676 263h0M677 254h0M667 262h0M662 262h0M656 261h0M667 258h0M658 258h0M659 262h0M660 268h0M668 269h0M646 264h0M646 262h0M635 269h0M646 261h0M639 261h0M637 261h0M638 264h0M640 265h0M637 264h0M641 268h0M609 176h0M567 127h0M566 130h0M564 129h0M554 138h0M561 138h0M565 138h0M554 134h0M586 124h0M584 121h0M581 119h0M582 120h0M600 119h0M600 118h0M598 119h0M595 119h0M609 125h0M620 127h0M616 128h0M628 135h0M634 142h0M628 136h0M597 137h0M595 137h0M599 137h0M588 140h0M621 114h0" stroke="#d1b530" stroke-width="3"/>
<path d="M349 246h0M552 139h0M546 136h0M544 144h0M565 148h0M584 125h0M579 125h0M563 139h0M563 136h0M573 135h0M567 132h0M592 117h0M589 133h0M607 121h0M627 131h0M618 132h0M628 134h0M629 132h0M640 135h0M634 141h0M646 139h0M642 137h0M647 138h0M620 138h0M620 134h0M671 186h0M673 179h0M674 181h0M668 188h0M681 182h0M667 184h0M645 218h0M640 213h0M647 217h0M644 217h0M658 257h0M668 261h0M669 263h0M660 271h0M667 269h0M567 126h0M562 124h0M569 131h0M564 139h0M556 136h0M584 122h0M602 124h0M600 119h0M598 123h0M617 121h0M578 143h0M597 141h0M602 139h0M598 135h0" stroke="#d1b530" stroke-width="4"/>
<path d="M344 245h0M346 246h0M344 246h0M550 138h0M559 144h0M548 141h0M544 142h0M558 143h0M549 143h0M565 143h0M571 125h0M573 128h0M571 126h0M584 125h0M599 130h0M594 129h0M592 129h0M592 131h0M591 127h0M605 123h0M605 119h0M583 140h0M592 137h0M632 125h0M626 125h0M619 133h0M616 128h0M623 132h0M627 131h0M620 127h0M626 128h0M639 138h0M636 140h0M607 178h0M618 134h0M669 183h0M678 185h0M738 202h0M736 198h0M731 200h0M732 203h0M645 218h0M641 214h0M642 216h0M638 213h0M639 216h0M671 257h0M676 256h0M668 256h0M676 256h0M668 253h0M675 261h0M658 261h0M635 263h0M636 261h0M637 260h0M639 260h0M560 130h0M564 126h0M566 126h0M560 133h0M562 138h0M557 134h0M555 138h0M579 116h0M585 118h0M579 116h0M582 115h0M585 121h0M579 123h0M602 119h0M615 126h0M621 128h0M632 138h0M628 139h0M627 139h0M630 138h0M627 139h0M573 141h0M601 138h0M596 137h0M593 138h0M595 135h0" stroke="#dbb433" stroke-width="2"/>
<path d="M343 246h0M555 142h0M545 139h0M546 138h0M543 140h0M544 140h0M564 146h0M562 145h0M560 147h0M566 144h0M579 128h0M573 125h0M584 128h0M578 124h0M567 128h0M567 133h0M591 114h0M588 114h0M585 129h0M589 128h0M595 128h0M594 128h0M594 132h0M594 133h0M609 123h0M607 119h0M606 120h0M587 141h0M591 140h0M587 137h0M592 139h0M620 124h0M632 127h0M625 126h0M628 128h0M644 138h0M633 142h0M643 138h0M641 141h0M622 138h0M621 136h0M619 133h0M624 136h0M668 178h0M670 187h0M682 185h0M673 180h0M666 181h0M681 184h0M717 207h0M720 208h0M719 206h0M717 204h0M735 200h0M739 202h0M642 218h0M665 260h0M672 260h0M676 257h0M665 256h0M664 260h0M660 261h0M657 258h0M644 263h0M642 259h0M571 127h0M571 128h0M570 128h0M564 135h0M557 138h0M555 137h0M582 118h0M601 121h0M597 123h0M600 121h0M599 121h0M603 119h0M609 128h0M613 129h0M620 125h0M616 123h0M630 134h0M634 140h0M630 137h0" stroke="#dbb433" stroke-width="3"/>
<path d="M343 246h0M549 139h0M569 146h0M576 129h0M579 122h0M575 130h0M575 133h0M592 132h0M608 124h0M611 120h0M622 125h0M629 127h0M637 142h0M635 136h0M634 142h0M603 176h0M622 135h0M615 135h0M674 179h0M667 178h0M680 184h0M681 181h0M672 184h0M666 180h0M735 203h0M731 201h0M733 203h0M646 218h0M671 261h0M679 255h0M677 262h0M679 254h0M673 259h0M667 260h0M558 128h0M568 125h0M560 138h0M555 133h0M579 121h0M588 120h0M615 127h0M619 126h0M616 128h0M614 125h0M590 138h0" stroke="#dbb433" stroke-width="4"/>
<path d="M548 137h0M558 141h0M546 137h0M554 142h0M557 138h0M563 142h0M581 124h0M573 128h0M570 127h0M578 122h0M572 135h0M568 136h0M569 131h0M578 135h0M595 115h0M599 129h0M599 130h0M594 126h0M592 129h0M587 138h0M585 138h0M633 128h0M631 132h0M630 129h0M631 125h0M629 131h0M621 130h0M640 135h0M639 140h0M642 136h0M614 136h0M675 182h0M670 185h0M668 185h0M668 183h0M672 177h0M671 177h0M715 205h0M720 205h0M717 205h0M739 202h0M647 215h0M646 214h0M680 257h0M677 256h0M668 259h0M675 256h0M671 260h0M674 256h0M669 254h0M644 260h0M643 262h0M560 137h0M560 133h0M562 134h0M580 122h0M584 121h0M583 116h0M579 119h0M580 116h0M585 120h0M599 117h0M611 122h0M616 126h0M631 136h0" stroke="#e6b43b" stroke-width="2"/>
<path d="M546 136h0M549 140h0M554 140h0M567 143h0M556 144h0M574 124h0M575 127h0M576 123h0M571 129h0M578 127h0M582 121h0M572 130h0M574 130h0M568 133h0M569 128h0M576 132h0M568 134h0M597 125h0M596 129h0M588 125h0M592 127h0M591 129h0M586 127h0M594 124h0M592 139h0M624 129h0M621 124h0M628 125h0M630 129h0M624 131h0M632 132h0M622 130h0M623 125h0M632 131h0M625 131h0M631 140h0M646 139h0M643 137h0M637 137h0M621 134h0M618 135h0M711 207h0M736 200h0M645 214h0M640 217h0M643 213h0M643 216h0M674 258h0M680 259h0M669 252h0M677 253h0M678 258h0M661 257h0M660 258h0M662 257h0M644 265h0M647 260h0M640 263h0M562 132h0M579 121h0M580 117h0M583 120h0M579 119h0M597 120h0M601 119h0M604 118h0M595 121h0M605 121h0M611 122h0M610 126h0M611 125h0M614 128h0M609 125h0M621 125h0M598 134h0" stroke="#e6b43b" stroke-width="3"/>
<path d="M554 136h0M549 136h0M563 141h0M573 127h0M579 125h0M574 127h0M572 135h0M574 134h0M574 130h0M587 114h0M589 113h0M588 113h0M593 132h0M592 126h0M636 138h0M644 139h0M641 138h0M673 182h0M668 185h0M680 183h0M636 217h0M636 215h0M648 217h0M637 216h0M647 216h0M673 250h0M660 257h0M641 261h0M555 133h0M565 137h0M598 121h0M604 119h0M616 123h0M609 125h0M619 127h0M594 135h0" stroke="#e6b43b" stroke-width="4"/>
<path d="M581 125h0M577 127h0M581 123h0M584 125h0M571 127h0M573 133h0M564 133h0M572 130h0M588 114h0M587 125h0M587 127h0M639 140h0M633 138h0M675 175h0M679 181h0M675 176h0M674 177h0M669 183h0M680 181h0M676 176h0M737 201h0M637 216h0M681 257h0M667 256h0M668 258h0M680 257h0M658 258h0M663 256h0M662 258h0M564 127h0M568 125h0M567 124h0M579 119h0M603 118h0M619 126h0M630 133h0" stroke="#eeb441" stroke-width="2"/>
<path d="M554 137h0M556 138h0M560 143h0M576 124h0M578 119h0M574 133h0M568 128h0M577 135h0M570 133h0M569 129h0M564 133h0M574 133h0M564 133h0M596 131h0M618 127h0M631 127h0M618 127h0M624 125h0M618 126h0M641 137h0M641 135h0M681 179h0M670 183h0M678 178h0M672 176h0M675 184h0M733 200h0M676 258h0M674 251h0M675 252h0M672 253h0M659 257h0M661 256h0M645 259h0M641 263h0M569 125h0M564 124h0M570 125h0M566 124h0M560 134h0M579 118h0M583 118h0M601 118h0M602 117h0M613 124h0M633 135h0" stroke="#eeb441" stroke-width="3"/>
<path d="M558 137h0M564 141h0M575 130h0M590 114h0M593 115h0M590 129h0M589 126h0M628 127h0M630 127h0M632 139h0M645 137h0M668 179h0M678 178h0M676 257h0M671 254h0M675 253h0M679 253h0M641 261h0M580 117h0M581 116h0M617 123h0" stroke="#eeb441" stroke-width="4"/>
<path d="M551 137h0M555 135h0M572 122h0M574 120h0M571 122h0M572 131h0M571 132h0M572 129h0M587 128h0M589 124h0M595 126h0M628 127h0M622 126h0M633 126h0M631 125h0M668 179h0M670 181h0M673 181h0M666 256h0M675 254h0M666 257h0M674 256h0M681 257h0M676 255h0M555 134h0M584 118h0M611 122h0M620 124h0" stroke="#f5b840" stroke-width="2"/>
<path d="M576 125h0M572 132h0M569 129h0M592 124h0M588 129h0M622 126h0M679 179h0M671 176h0M668 180h0M554 134h0" stroke="#f5b840" stroke-width="3"/>
<path d="M551 138h0M583 125h0M592 113h0M595 129h0M620 124h0M618 127h0M626 127h0M644 135h0M670 181h0M641 212h0M560 133h0M598 118h0" stroke="#f5b840" stroke-width="4"/>
<path d="M580 120h0M583 124h0M565 129h0M623 125h0M619 124h0M672 177h0M680 180h0M677 175h0M679 179h0M674 253h0M615 123h0" stroke="#f5be3c" stroke-width="2"/>
<path d="M551 135h0M581 123h0M576 122h0M592 125h0M598 127h0M677 178h0M674 180h0M678 178h0M673 178h0M667 253h0M673 250h0M670 251h0M680 253h0M672 250h0M586 117h0M584 115h0M613 123h0" stroke="#f5be3c" stroke-width="3"/>
<path d="M577 122h0M581 122h0M590 124h0M593 126h0M668 179h0M670 250h0M586 117h0" stroke="#f5be3c" stroke-width="4"/>
<path d="M590 124h0M671 175h0M674 250h0M584 114h0" stroke="#f5c338" stroke-width="2"/>
<path d="M576 121h0M590 125h0M590 124h0M596 126h0M676 177h0M670 250h0" stroke="#f5c338" stroke-width="3"/>
<path d="M582 121h0" stroke="#f4c934" stroke-width="2"/>
<path d="M593 124h0" stroke="#f4c934" stroke-width="4"/>
</g>
<path d="M282.5 232.0V277.5L458.0 392.5L783.0 269.0" fill="none" stroke="#c9c3ac" stroke-width="1.1"/>
<path d="M282.5 271.5l-7.5 -4.8" stroke="#c9c3ac" stroke-width="1.1"/>
<path d="M282.5 254.3l-7.5 -4.8" stroke="#c9c3ac" stroke-width="1.1"/>
<path d="M282.5 237.2l-7.5 -4.8" stroke="#c9c3ac" stroke-width="1.1"/>
<path d="M291.0 283.1l-8 3" stroke="#c9c3ac" stroke-width="1.1"/>
<path d="M322.1 303.4l-8 3" stroke="#c9c3ac" stroke-width="1.1"/>
<path d="M353.2 323.8l-8 3" stroke="#c9c3ac" stroke-width="1.1"/>
<path d="M384.3 344.2l-8 3" stroke="#c9c3ac" stroke-width="1.1"/>
<path d="M415.4 364.6l-8 3" stroke="#c9c3ac" stroke-width="1.1"/>
<path d="M446.5 385.0l-8 3" stroke="#c9c3ac" stroke-width="1.1"/>
<path d="M502.5 375.6l7.5 4.8" stroke="#c9c3ac" stroke-width="1.1"/>
<path d="M543.1 360.1l7.5 4.8" stroke="#c9c3ac" stroke-width="1.1"/>
<path d="M583.8 344.7l7.5 4.8" stroke="#c9c3ac" stroke-width="1.1"/>
<path d="M624.5 329.2l7.5 4.8" stroke="#c9c3ac" stroke-width="1.1"/>
<path d="M665.1 313.8l7.5 4.8" stroke="#c9c3ac" stroke-width="1.1"/>
<path d="M705.8 298.4l7.5 4.8" stroke="#c9c3ac" stroke-width="1.1"/>
<path d="M746.4 282.9l7.5 4.8" stroke="#c9c3ac" stroke-width="1.1"/>
<text x="270.5" y="236.0" font-size="10" fill="#d2d2d2" text-anchor="end">120</text>
<text x="270.5" y="253.0" font-size="10" fill="#d2d2d2" text-anchor="end">100</text>
<text x="270.5" y="271.3" font-size="10" fill="#d2d2d2" text-anchor="end">80</text>
<text x="277.5" y="300.5" font-size="10" fill="#d2d2d2" text-anchor="end">3.6801</text>
<text x="310.5" y="320.5" font-size="10" fill="#d2d2d2" text-anchor="end">3.68005</text>
<text x="342.5" y="341.0" font-size="10" fill="#d2d2d2" text-anchor="end">3.68</text>
<text x="372.5" y="361.0" font-size="10" fill="#d2d2d2" text-anchor="end">3.67995</text>
<text x="403.5" y="382.0" font-size="10" fill="#d2d2d2" text-anchor="end">3.6799</text>
<text x="513.0" y="394.0" font-size="10" fill="#d2d2d2" text-anchor="start">4.298</text>
<text x="554.0" y="381.0" font-size="10" fill="#d2d2d2" text-anchor="start">4.2985</text>
<text x="595.0" y="363.0" font-size="10" fill="#d2d2d2" text-anchor="start">4.299</text>
<text x="635.0" y="349.0" font-size="10" fill="#d2d2d2" text-anchor="start">4.2995</text>
<text x="676.0" y="333.0" font-size="10" fill="#d2d2d2" text-anchor="start">4.3</text>
<text x="716.0" y="319.0" font-size="10" fill="#d2d2d2" text-anchor="start">4.3005</text>
<text x="757.0" y="302.0" font-size="10" fill="#d2d2d2" text-anchor="start">4.301</text>
<text x="246.5" y="343" font-size="10" fill="#d2d2d2">&#215;10<tspan font-size="7.5" dy="-4">6</tspan></text>
<text x="754" y="336" font-size="10" fill="#d2d2d2">&#215;10<tspan font-size="7.5" dy="-4">5</tspan></text>
</svg>
</div>

<!-- PLAYBACK -->
<div class="a" style="left:178px;top:394px;width:704px;height:17px;background:#f8f8f8;border-bottom:1px solid #dcdcdc"></div>
<div class="p" style="left:184px;top:396px">Playback Slider</div>
<div class="a" style="left:178px;top:411px;width:704px;height:67px;background:#f0f0f0"></div>
<div class="a" style="left:192px;top:427px;width:675px;height:2px;background:#6a6a6a"></div>
<svg class="a" style="left:861px;top:421px" width="10" height="12"><path d="M1 1H9V7L5 11L1 7Z" fill="#fafafa" stroke="#7a7a7a" stroke-width="1"/></svg>
<svg class="a" style="left:497px;top:440px" width="19" height="18" viewBox="0 0 19 18"><rect x="0.5" y="0.5" width="18" height="17" rx="3" fill="#f0f0f0" stroke="#d6d6d6" stroke-width="1"/><rect x="3.5" y="3.5" width="12" height="11" fill="none" stroke="#cfcfcf" stroke-width="1"/><path d="M5 5V13" stroke="#b5b5b5" stroke-width="1.3"/><path d="M10 5L6 9L10 13Z M14 5L10 9L14 13Z" fill="#b5b5b5"/></svg>
<svg class="a" style="left:519.5px;top:440px" width="19" height="18" viewBox="0 0 19 18"><rect x="0.5" y="0.5" width="18" height="17" rx="3" fill="#f0f0f0" stroke="#d6d6d6" stroke-width="1"/><rect x="3.5" y="3.5" width="12" height="11" fill="none" stroke="#cfcfcf" stroke-width="1"/><path d="M6 5V13" stroke="#b5b5b5" stroke-width="1.3"/><path d="M12.5 5L7 9L12.5 13Z" fill="#b5b5b5"/></svg>
<svg class="a" style="left:542px;top:440px" width="19" height="18" viewBox="0 0 19 18"><rect x="0.5" y="0.5" width="18" height="17" rx="3" fill="#f0f0f0" stroke="#d6d6d6" stroke-width="1"/><rect x="3.5" y="3.5" width="12" height="11" fill="none" stroke="#cfcfcf" stroke-width="1"/><path d="M7 5L13 9L7 13Z" fill="#b5b5b5"/></svg>
<svg class="a" style="left:564.5px;top:440px" width="19" height="18" viewBox="0 0 19 18"><rect x="0.5" y="0.5" width="18" height="17" rx="3" fill="#f0f0f0" stroke="#d6d6d6" stroke-width="1"/><rect x="3.5" y="3.5" width="12" height="11" fill="none" stroke="#cfcfcf" stroke-width="1"/><path d="M13 5V13" stroke="#b5b5b5" stroke-width="1.3"/><path d="M6.5 5L12 9L6.5 13Z" fill="#b5b5b5"/></svg>
<svg class="a" style="left:587px;top:440px" width="19" height="18" viewBox="0 0 19 18"><rect x="0.5" y="0.5" width="18" height="17" rx="3" fill="#f0f0f0" stroke="#d6d6d6" stroke-width="1"/><rect x="3.5" y="3.5" width="12" height="11" fill="none" stroke="#cfcfcf" stroke-width="1"/><path d="M14 5V13" stroke="#b5b5b5" stroke-width="1.3"/><path d="M5 5L9 9L5 13Z M9 5L13 9L9 13Z" fill="#b5b5b5"/></svg>

<!-- STATUS -->
<div class="a" style="left:0;top:478px;width:882px;height:18px;background:#e8e8e8;border-top:1px solid #c8c8c8"></div>
<div class="a" style="left:176px;top:478px;width:2px;height:18px;background:#b8b8b8"></div>
<svg class="a" style="left:3px;top:484px" width="10" height="10"><path d="M1.5 1V9" stroke="#8a8a8a" stroke-width="1.2"/><path d="M9 1L3.5 5L9 9Z" fill="#8a8a8a"/></svg>
<svg class="a" style="left:867px;top:484px" width="10" height="10"><path d="M1.5 2L5 6.5L8.5 2Z" fill="#666"/><path d="M1 8.5H9" stroke="#666" stroke-width="1.2"/></svg>

<!-- FILE group -->
<svg class="a" style="left:12px;top:29px" width="18" height="18" viewBox="0 0 18 18">
 <path d="M6.5 1.5H11.5V6.5H16.5V11.5H11.5V16.5H6.5V11.5H1.5V6.5H6.5Z" fill="#f3e4a0" stroke="#b07a2a" stroke-width="1"/>
 <path d="M7 7H11V11H7Z" fill="#efd35a"/><path d="M7.5 11.5H11V16H7.5Z" fill="#e8c530"/>
</svg>
<div class="t c" style="left:1px;top:53px;width:40px">New</div>
<div class="t c" style="left:1px;top:66px;width:40px">Session</div>
<svg class="a" style="left:50px;top:28px" width="18" height="20" viewBox="0 0 18 20">
 <rect x="0.5" y="11.5" width="16" height="7" fill="#f4f4f4" stroke="#333" stroke-width="1"/>
 <rect x="2" y="14" width="13" height="1" fill="#aaa"/>
 <path d="M5 1H12V9H15.5L8.5 16L1.5 9H5Z" fill="#7ed35a" stroke="#4aa83a" stroke-width="0.8"/>
 <rect x="7" y="2" width="3" height="6" fill="#e9f5d0"/>
</svg>
<div class="t c" style="left:38px;top:53px;width:40px">Import</div>
<div class="caret" style="left:56px;top:68px"></div>
<div class="g" style="left:20px;top:80px;width:40px">FILE</div>
<div class="sep" style="left:79px"></div>

<!-- COLOR group -->
<div class="t r" style="left:80px;top:28px;width:68px">Colormap</div>
<div class="t r" style="left:80px;top:46px;width:68px">Colormap Value</div>
<div class="t r" style="left:80px;top:64px;width:68px">Point Size</div>
<div class="t" style="left:165px;top:28px">Parula</div>
<div class="caret" style="left:196px;top:32px"></div>
<div class="t" style="left:155px;top:46px">Z Height</div>
<div class="caret" style="left:196px;top:50px"></div>
<div class="a" style="left:153px;top:62px;width:52px;height:15px;background:#fff;border:1px solid #bdbdbd;border-radius:2px"></div>
<div class="t r" style="left:160px;top:65px;width:28px">6</div>
<div class="a" style="left:188px;top:62px;width:17px;height:15px;border-left:1px solid #c8c8c8"></div>
<svg class="a" style="left:189px;top:63px" width="16" height="14" viewBox="0 0 16 14">
 <path d="M4.5 5.5L8 2L11.5 5.5Z" fill="#222"/>
 <path d="M4.5 8.5L8 12L11.5 8.5Z" fill="#222"/>
 <path d="M1 7H15" stroke="#ddd" stroke-width="1"/>
</svg>
<div class="a" style="left:229px;top:29px;width:12px;height:12px;background:#020230;border:1px solid #cfcfd8"></div>
<div class="t c" style="left:205px;top:47px;width:60px">Background</div>
<div class="t c" style="left:205px;top:59px;width:60px">Color</div>
<div class="g" style="left:152px;top:80px;width:40px">COLOR</div>
<div class="sep" style="left:264px"></div>

<!-- VISUALIZE group -->
<svg class="a" style="left:269px;top:26px" width="14" height="14" viewBox="0 0 14 14">
 <path d="M7 1L13 3.5V10.5L7 13L1 10.5V3.5Z" fill="#9a9a9a"/>
 <path d="M7 6L13 3.5V10.5L7 13Z" fill="#bdbdbd"/>
 <path d="M1 3.5L7 1L13 3.5L7 6Z" fill="#2c7fd0"/>
 <path d="M1 3.5L7 6L13 3.5L13 4.5L7 7L1 4.5Z" fill="#5fbf3f"/>
</svg>
<svg class="a" style="left:269px;top:45px" width="14" height="14" viewBox="0 0 14 14">
 <path d="M7 1L13 3.5V10.5L7 13L1 10.5V3.5Z" fill="#a0a0a0"/>
 <path d="M1 3.5L7 1L13 3.5L7 6Z" fill="#8c8c8c"/>
 <path d="M7 6L13 3.5V10.5L7 13Z" fill="#bdbdbd"/>
 <path d="M1 3.5L7 6V13L1 10.5Z" fill="#2c7fd0"/>
 <path d="M1 9.5L7 12V13L1 10.5Z" fill="#5fbf3f"/>
</svg>
<svg class="a" style="left:269px;top:63px" width="14" height="14" viewBox="0 0 14 14">
 <path d="M7 1L13 3.5V10.5L7 13L1 10.5V3.5Z" fill="#a0a0a0"/>
 <path d="M1 3.5L7 1L13 3.5L7 6Z" fill="#b5b5b5"/>
 <path d="M1 3.5L7 6V13L1 10.5Z" fill="#9a9a9a"/>
 <path d="M7 6L13 3.5V10.5L7 13Z" fill="#2c7fd0"/>
 <path d="M7 12L13 9.5V10.5L7 13Z" fill="#5fbf3f"/>
</svg>
<div class="t" style="left:287px;top:28px">XY View</div>
<div class="t" style="left:287px;top:46px">YZ View</div>
<div class="t" style="left:287px;top:64px">XZ View</div>
<svg class="a" style="left:326px;top:26px" width="12" height="14" viewBox="0 0 12 14">
 <rect x="0.5" y="0.5" width="11" height="13" fill="#555" stroke="#1a1a2a" stroke-width="1"/>
 <rect x="5.5" y="2" width="1" height="2" fill="#ddd"/>
 <rect x="3" y="7" width="6" height="5" fill="#1f6fc0"/><rect x="4.5" y="8.5" width="3" height="2" fill="#bfe0ff"/>
</svg>
<svg class="a" style="left:326px;top:45px" width="13" height="12" viewBox="0 0 13 12">
 <path d="M3 0.5H10L12.5 11.5H0.5Z" fill="#555" stroke="#222" stroke-width="0.8"/>
 <rect x="4" y="5" width="5" height="5" fill="#1f6fc0"/><rect x="5" y="6.5" width="3" height="2" fill="#bfe0ff"/>
</svg>
<svg class="a" style="left:326px;top:63px" width="13" height="12" viewBox="0 0 13 12">
 <rect x="0.5" y="0.5" width="12" height="11" fill="#8fd0f8" stroke="#2a78c8" stroke-width="1"/>
 <path d="M1 11.5L4 6H9L12 11.5Z" fill="#4a8a3a"/>
 <path d="M3.5 11.5L5.5 4.5H7.5L9.5 11.5Z" fill="#555"/><rect x="6.2" y="6" width="0.8" height="4" fill="#eee"/>
</svg>
<div class="t" style="left:343px;top:28px">Bird's Eye View</div>
<div class="t" style="left:343px;top:46px">Chase View</div>
<div class="t" style="left:343px;top:64px">Ego View</div>
<div class="t" style="left:410px;top:38px">Ego Direction</div>
<div class="a" style="left:410px;top:52px;width:52px;height:16px;background:#ececec;border:1px solid #d8d8d8;border-radius:3px"></div>
<div class="t" style="left:413px;top:55px;color:#b8b8b8">+x</div>
<div class="caret" style="left:448px;top:58px;border-top-color:#b0b0b0"></div>
<svg class="a" style="left:482px;top:31px" width="19" height="16" viewBox="0 0 19 16">
 <path d="M5 3H9L10 1.5H13L14 3H16V13H3V3Z" fill="#6e6e6e" stroke="#444" stroke-width="0.6"/>
 <circle cx="9.5" cy="8" r="3.6" fill="#1c2440" stroke="#333" stroke-width="0.6"/>
 <circle cx="8.7" cy="7" r="1" fill="#7a9ac0"/>
 <path d="M13 1.5a4 4 0 0 1 4.5 3.5" fill="none" stroke="#52c43a" stroke-width="1.6"/>
 <path d="M1 9a4 4 0 0 0 4.5 5.5" fill="none" stroke="#52c43a" stroke-width="1.6"/>
</svg>
<div class="t c" style="left:470px;top:52px;width:40px">Custom</div>
<div class="t" style="left:475px;top:64px">Views</div>
<div class="caret" style="left:501px;top:68px"></div>
<svg class="a" style="left:538px;top:28px" width="20" height="20" viewBox="0 0 20 20">
 <path d="M6 4.8A7 7 0 1 1 4 13" fill="none" stroke="#2b6cb0" stroke-width="4.2" stroke-linecap="round"/>
 <path d="M6 4.8A7 7 0 1 1 4 13" fill="none" stroke="#a9d4f5" stroke-width="2.4" stroke-linecap="round"/>
 <path d="M1 2L8.5 2.5L3.5 9Z" fill="#a9d4f5" stroke="#2b6cb0" stroke-width="0.9"/>
</svg>
<div class="t c" style="left:523px;top:52px;width:50px">Restore</div>
<div class="t c" style="left:518px;top:64px;width:60px">Default View</div>
<div class="g" style="left:397px;top:80px;width:50px">VISUALIZE</div>
<div class="sep" style="left:579px"></div>

<!-- EDIT -->
<svg class="a" style="left:600px;top:29px" width="18" height="18" viewBox="0 0 18 18">
 <rect x="0.5" y="0.5" width="17" height="17" fill="#5d97d8" stroke="#3a3a4a" stroke-width="1"/>
 <path d="M1 10Q4 6 7 9T17 9V17H1Z" fill="#5aa83a"/>
 <circle cx="4" cy="8" r="1.6" fill="#e8d83a"/><circle cx="7" cy="10" r="1.4" fill="#e8d83a"/><circle cx="3" cy="12" r="1.2" fill="#d8e050"/>
 <path d="M9 16L15.5 8.5L17 10L10.5 17Z" fill="#e8a83a" stroke="#8a5a2a" stroke-width="0.6"/>
</svg>
<div class="t c" style="left:589px;top:52px;width:40px">Edit</div>
<div class="t c" style="left:584px;top:64px;width:50px">Point Cloud</div>
<div class="g" style="left:589px;top:80px;width:40px">EDIT</div>
<div class="sep" style="left:638px"></div>

<!-- LAYOUT -->
<svg class="a" style="left:650px;top:29px" width="19" height="18" viewBox="0 0 19 18">
 <rect x="0.5" y="0.5" width="18" height="17" rx="1" fill="#fafafa" stroke="#777" stroke-width="1"/>
 <rect x="1" y="1" width="17" height="2.2" fill="#3f7ec8"/>
 <path d="M1 9.5H18M9.5 3.5V17" stroke="#888" stroke-width="1"/>
 <rect x="10" y="10" width="8" height="7" fill="#e6e6e6"/>
</svg>
<div class="t c" style="left:640px;top:52px;width:40px">Default</div>
<div class="t c" style="left:640px;top:64px;width:40px">Layout</div>
<div class="g" style="left:640px;top:80px;width:40px">LAYOUT</div>
<div class="sep" style="left:680px"></div>

<!-- EXPORT -->
<svg class="a" style="left:700px;top:30px" width="20" height="17" viewBox="0 0 20 17">
 <path d="M1 8L4 5.5L8 9.5L16.5 1L19.5 3.5L8 16Z" fill="#6cc24a" stroke="#3e8e2e" stroke-width="0.8"/>
 <path d="M15 3.5L17 2L18.5 3.5L17 5Z" fill="#d8f0b0"/>
</svg>
<div class="t c" style="left:690px;top:52px;width:40px">Export</div>
<div class="t c" style="left:685px;top:64px;width:50px">Point Cloud</div>
<div class="g" style="left:690px;top:80px;width:40px">EXPORT</div>
<div class="sep" style="left:740px"></div>
<svg class="a" style="left:867px;top:80px" width="10" height="9" viewBox="0 0 10 9">
 <path d="M1 1H9" stroke="#555" stroke-width="1.2"/><path d="M1.5 8L5 3.5L8.5 8Z" fill="#555"/>
</svg>
</body></html>
